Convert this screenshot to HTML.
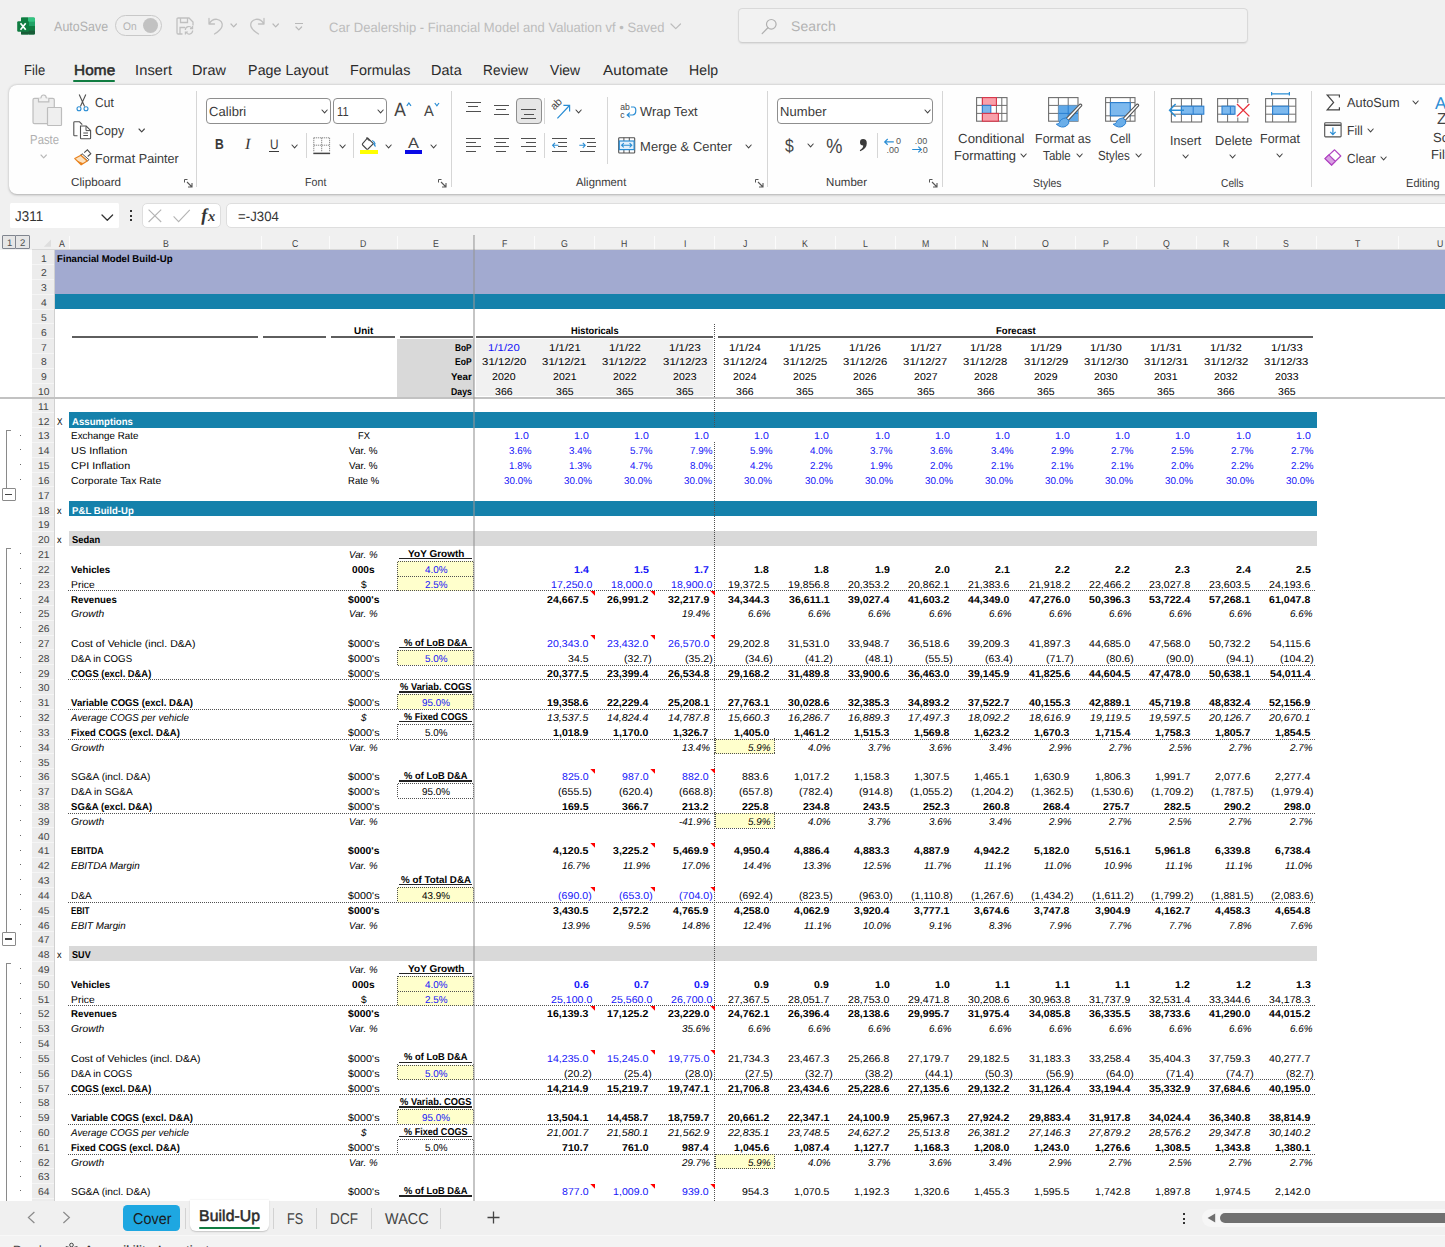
<!DOCTYPE html>
<html><head><meta charset="utf-8"><title>Excel</title>
<style>
html,body{margin:0;padding:0;}
body{width:1445px;height:1247px;overflow:hidden;background:#f0f0f0;font-family:"Liberation Sans", sans-serif;position:relative;}
#r{position:absolute;left:0;top:0;width:1445px;height:1247px;overflow:hidden;}
#r div,#r span,#r svg{position:absolute;}
#r span{white-space:pre;transform-origin:0 0;color:#000;}
#r div{box-sizing:border-box;}
#r svg{overflow:visible;}
</style></head><body><div id="r">
<svg style="left:17.00px;top:17.00px" width="18" height="18" viewBox="0 0 18 18"><rect x="4" y="0.5" width="14" height="17" rx="1.6" fill="#1d9a5b"/>
<rect x="4" y="0.5" width="7" height="8.5" fill="#107c41"/><rect x="11" y="0.5" width="7" height="4.4" rx="1" fill="#33c481"/>
<rect x="11" y="4.7" width="7" height="4.3" fill="#21a366"/><rect x="4" y="9" width="7" height="8.5" fill="#185c37"/><rect x="11" y="9" width="7" height="4.2" fill="#107c41"/>
<rect x="11" y="13.2" width="7" height="4.3" rx="1" fill="#185c37"/>
<rect x="0.2" y="4.2" width="11.8" height="10.5" rx="1.2" fill="#107c41"/>
<path d="M3.5 6.2 L8.7 12.7 M8.7 6.2 L3.5 12.7" stroke="#fff" stroke-width="1.7"/></svg>
<div style="left:115px;top:15.4px;width:47px;height:21px;border:1.4px solid #c8c8c8;border-radius:10.5px;"></div>
<div style="left:143.2px;top:18.4px;width:15px;height:15px;border-radius:50%;background:#c2c2c2;"></div>
<svg style="left:175.50px;top:17.00px" width="19" height="19" viewBox="0 0 19 19"><path d="M1 2.2 Q1 1 2.2 1 H13 L17 5 V8.5 M1 2.2 V15.8 Q1 17 2.2 17 H6.5" fill="none" stroke="#c0c0c0" stroke-width="1.3"/>
<path d="M4.5 1 V5.5 H11.5 V1 M4 17 V10.5 H9" fill="none" stroke="#c0c0c0" stroke-width="1.3"/>
<path d="M9.3 13 A3.6 3.6 0 0 1 16 11.3 M16.6 9 V11.6 H14 M16.7 13.6 A3.6 3.6 0 0 1 10 15.3 M9.4 17.6 V15 H12" fill="none" stroke="#c0c0c0" stroke-width="1.2"/></svg>
<svg style="left:207.50px;top:17.00px" width="16" height="18" viewBox="0 0 16 18"><path d="M1 1.5 V7 H6.5 M1.3 6.8 C3 3.5 6 2 9 2.3 C13 2.8 15 6 14 9.5 C13.3 12 10.5 14.5 6.5 17" fill="none" stroke="#c0c0c0" stroke-width="1.3" stroke-linecap="round" stroke-linejoin="round"/></svg>
<svg style="left:230.00px;top:23.10px" width="7.4" height="4.8" viewBox="0 0 7.4 4.8"><path d="M1 1 L3.70 3.80 L6.40 1" fill="none" stroke="#b8b8b8" stroke-width="1.2" stroke-linecap="round" stroke-linejoin="round"/></svg>
<svg style="left:249.00px;top:17.00px" width="16" height="18" viewBox="0 0 16 18"><path d="M15 1.5 V7 H9.5 M14.7 6.8 C13 3.5 10 2 7 2.3 C3 2.8 1 6 2 9.5 C2.7 12 5.5 14.5 9.5 17" fill="none" stroke="#c0c0c0" stroke-width="1.3" stroke-linecap="round" stroke-linejoin="round"/></svg>
<svg style="left:272.10px;top:23.10px" width="7.4" height="4.8" viewBox="0 0 7.4 4.8"><path d="M1 1 L3.70 3.80 L6.40 1" fill="none" stroke="#b8b8b8" stroke-width="1.2" stroke-linecap="round" stroke-linejoin="round"/></svg>
<div style="left:294.50px;top:23.20px;width:8.00px;height:1.20px;background:#b8b8b8;"></div>
<svg style="left:294.70px;top:25.55px" width="7.6" height="4.9" viewBox="0 0 7.6 4.9"><path d="M1 1 L3.80 3.90 L6.60 1" fill="none" stroke="#b8b8b8" stroke-width="1.2" stroke-linecap="round" stroke-linejoin="round"/></svg>
<svg style="left:669.85px;top:23.30px" width="11.5" height="6.6" viewBox="0 0 11.5 6.6"><path d="M1 1 L5.75 5.60 L10.50 1" fill="none" stroke="#bcbcbc" stroke-width="1.2" stroke-linecap="round" stroke-linejoin="round"/></svg>
<div style="left:738px;top:8.3px;width:510px;height:35px;background:#f2f2f2;border:1px solid #d9d9d9;border-bottom-color:#cfcfcf;border-radius:4.5px;box-shadow:0 1px 1.5px rgba(0,0,0,0.08);"></div>
<svg style="left:761.00px;top:18.00px" width="17" height="17" viewBox="0 0 17 17"><circle cx="10.3" cy="6.3" r="4.8" fill="none" stroke="#b0b0b0" stroke-width="1.2"/><path d="M6.9 9.8 L1.2 15.6" stroke="#b0b0b0" stroke-width="1.3" stroke-linecap="round"/></svg>
<div style="left:73.3px;top:79.6px;width:41.5px;height:2.8px;border-radius:1.4px;background:#107c41;"></div>
<div style="left:8.6px;top:85.2px;width:1500px;height:108.4px;background:#fefefe;border-radius:8px;box-shadow:0 0.5px 2.5px rgba(0,0,0,0.28);"></div>
<svg style="left:32.00px;top:94.00px" width="31" height="33" viewBox="0 0 31 33"><rect x="1" y="4.3" width="21.3" height="25.4" rx="1.5" fill="#ececec" stroke="#bdbdbd" stroke-width="1.2"/>
<path d="M6.5 4.3 V7.8 H16.8 V4.3 M9 4.3 Q9 1 11.65 1 Q14.3 1 14.3 4.3" fill="#f3f3f3" stroke="#bdbdbd" stroke-width="1.2"/>
<rect x="15.5" y="13.5" width="14" height="18" rx="0.8" fill="#efefef" stroke="#bdbdbd" stroke-width="1.2"/></svg>
<svg style="left:40.30px;top:154.20px" width="7.4" height="4.8" viewBox="0 0 7.4 4.8"><path d="M1 1 L3.70 3.80 L6.40 1" fill="none" stroke="#b8b8b8" stroke-width="1.1" stroke-linecap="round" stroke-linejoin="round"/></svg>
<svg style="left:75.50px;top:93.50px" width="13" height="18" viewBox="0 0 13 18"><path d="M3.2 0.6 L8.6 12.6 M9.8 0.6 L4.4 12.6" stroke="#505050" stroke-width="1.1" fill="none"/>
<circle cx="3" cy="14.7" r="2" fill="none" stroke="#2a8dd4" stroke-width="1.1"/><circle cx="10" cy="14.7" r="2" fill="none" stroke="#2a8dd4" stroke-width="1.1"/></svg>
<svg style="left:72.50px;top:120.50px" width="19" height="19" viewBox="0 0 19 19"><path d="M4.5 14.8 H1.6 Q0.8 14.8 0.8 14 V1.6 Q0.8 0.8 1.6 0.8 H6.5 L9.3 3.6" fill="none" stroke="#505050" stroke-width="1.1"/>
<path d="M7.5 5 H13.2 L17.6 9.4 V17 Q17.6 17.8 16.8 17.8 H8.3 Q7.5 17.8 7.5 17 Z" fill="#fff" stroke="#505050" stroke-width="1.1"/>
<path d="M13 5.2 V9.6 H17.4 M10.3 12 H15 M10.3 14.5 H15" fill="none" stroke="#505050" stroke-width="1"/></svg>
<svg style="left:137.80px;top:127.60px" width="7.4" height="4.8" viewBox="0 0 7.4 4.8"><path d="M1 1 L3.70 3.80 L6.40 1" fill="none" stroke="#444" stroke-width="1.1" stroke-linecap="round" stroke-linejoin="round"/></svg>
<svg style="left:73.50px;top:149.00px" width="18" height="17" viewBox="0 0 18 17"><path d="M10.2 3.6 L13.4 0.8 L16.8 4.6 L13.7 7.5" fill="#fff" stroke="#505050" stroke-width="1.1"/>
<path d="M8 4.7 L14.8 10.6 L13.6 12 L6.8 6.1 Z" fill="#fff" stroke="#505050" stroke-width="1"/>
<path d="M6.9 6.2 L0.8 9.6 L7.2 15.8 L13.2 12 Z" fill="#fce2c0" stroke="#e8821e" stroke-width="1.2" stroke-linejoin="round"/>
<path d="M3.2 11.8 L7.5 13.4 L9.5 14.3 L7.2 15.8 Z" fill="#e8821e"/></svg>
<svg style="left:184.00px;top:179.00px" width="9" height="9" viewBox="0 0 9 9"><path d="M0.5 3.5 V0.5 H3.5" fill="none" stroke="#555" stroke-width="1"/><path d="M3 3 L8 8 M8 4 V8 H4" fill="none" stroke="#555" stroke-width="1.1"/></svg>
<div style="left:196.30px;top:90.80px;width:1.00px;height:96.40px;background:#d6d6d6;"></div>
<div style="left:206.2px;top:97.5px;width:124.60000000000002px;height:26.2px;background:#fff;border:1px solid #8e8e8e;border-radius:4px;"></div>
<svg style="left:320.80px;top:108.80px" width="7.2" height="4.8" viewBox="0 0 7.2 4.8"><path d="M1 1 L3.60 3.80 L6.20 1" fill="none" stroke="#444" stroke-width="1.1" stroke-linecap="round" stroke-linejoin="round"/></svg>
<div style="left:333.2px;top:97.5px;width:53.400000000000034px;height:26.2px;background:#fff;border:1px solid #8e8e8e;border-radius:4px;"></div>
<svg style="left:376.70px;top:108.80px" width="7.2" height="4.8" viewBox="0 0 7.2 4.8"><path d="M1 1 L3.60 3.80 L6.20 1" fill="none" stroke="#444" stroke-width="1.1" stroke-linecap="round" stroke-linejoin="round"/></svg>
<svg style="left:405.80px;top:102.00px" width="6" height="5" viewBox="0 0 6 5"><path d="M0.8 3.8 L2.9 1 L5 3.8" fill="none" stroke="#2a8dd4" stroke-width="1.2"/></svg>
<svg style="left:433.50px;top:102.20px" width="6" height="5" viewBox="0 0 6 5"><path d="M0.8 1 L2.9 3.8 L5 1" fill="none" stroke="#2a8dd4" stroke-width="1.2"/></svg>
<div style="left:269.40px;top:151.20px;width:9.60px;height:1.10px;background:#3a3a3a;"></div>
<svg style="left:291.30px;top:143.50px" width="7.2" height="4.8" viewBox="0 0 7.2 4.8"><path d="M1 1 L3.60 3.80 L6.20 1" fill="none" stroke="#444" stroke-width="1.1" stroke-linecap="round" stroke-linejoin="round"/></svg>
<div style="left:306.10px;top:132.70px;width:1.00px;height:25.70px;background:#d6d6d6;"></div>
<svg style="left:312.50px;top:136.50px" width="18" height="18" viewBox="0 0 18 18"><path d="M0.8 0.8 H16.6 M0.8 0.8 V15 M16.6 0.8 V15 M8.7 0.8 V15 M0.8 8.2 H16.6" fill="none" stroke="#6a6a6a" stroke-width="1" stroke-dasharray="1 1"/>
<path d="M0.3 16.4 H17.1" stroke="#444" stroke-width="1.5"/></svg>
<svg style="left:338.60px;top:143.50px" width="7.2" height="4.8" viewBox="0 0 7.2 4.8"><path d="M1 1 L3.60 3.80 L6.20 1" fill="none" stroke="#444" stroke-width="1.1" stroke-linecap="round" stroke-linejoin="round"/></svg>
<div style="left:352.80px;top:132.70px;width:1.00px;height:25.70px;background:#d6d6d6;"></div>
<svg style="left:361.00px;top:136.50px" width="17" height="13" viewBox="0 0 17 13"><path d="M6.6 0.8 L12.4 6.6 L7 12 Q6.3 12.6 5.6 12 L1.6 8 Q1 7.3 1.6 6.6 Z" fill="#fff" stroke="#444" stroke-width="1.1" stroke-linejoin="round"/>
<path d="M5.3 0.6 L8.6 3.8" stroke="#444" stroke-width="1.1"/>
<path d="M12.8 5.3 Q15 7.6 14.6 10.3 Q13 9 12.3 6.9 Z" fill="#2a8dd4"/><path d="M11.2 3.6 Q13.4 4.4 14.2 7" fill="none" stroke="#2a8dd4" stroke-width="1.1"/></svg>
<div style="left:360.20px;top:150.00px;width:17.80px;height:4.30px;background:#ffff00;"></div>
<svg style="left:385.40px;top:143.50px" width="7.2" height="4.8" viewBox="0 0 7.2 4.8"><path d="M1 1 L3.60 3.80 L6.20 1" fill="none" stroke="#444" stroke-width="1.1" stroke-linecap="round" stroke-linejoin="round"/></svg>
<div style="left:404.60px;top:150.00px;width:17.50px;height:4.30px;background:#0a0ae6;"></div>
<svg style="left:429.80px;top:143.50px" width="7.2" height="4.8" viewBox="0 0 7.2 4.8"><path d="M1 1 L3.60 3.80 L6.20 1" fill="none" stroke="#444" stroke-width="1.1" stroke-linecap="round" stroke-linejoin="round"/></svg>
<svg style="left:438.30px;top:178.80px" width="9" height="9" viewBox="0 0 9 9"><path d="M0.5 3.5 V0.5 H3.5" fill="none" stroke="#555" stroke-width="1"/><path d="M3 3 L8 8 M8 4 V8 H4" fill="none" stroke="#555" stroke-width="1.1"/></svg>
<div style="left:451.10px;top:90.80px;width:1.00px;height:96.40px;background:#d6d6d6;"></div>
<div style="left:466.00px;top:102.00px;width:15.00px;height:1.00px;background:#505050;"></div>
<div style="left:468.00px;top:106.00px;width:10.00px;height:1.00px;background:#505050;"></div>
<div style="left:466.00px;top:111.00px;width:15.00px;height:1.00px;background:#505050;"></div>
<div style="left:494.00px;top:105.00px;width:15.00px;height:1.00px;background:#505050;"></div>
<div style="left:496.00px;top:109.00px;width:10.00px;height:1.00px;background:#505050;"></div>
<div style="left:494.00px;top:114.00px;width:15.00px;height:1.00px;background:#505050;"></div>
<div style="left:516.4px;top:97.6px;width:25.6px;height:26.2px;background:#e6e6e6;border:1px solid #8e8e8e;border-radius:4px;"></div>
<div style="left:521.00px;top:109.00px;width:15.00px;height:1.00px;background:#505050;"></div>
<div style="left:524.00px;top:114.00px;width:10.00px;height:1.00px;background:#505050;"></div>
<div style="left:521.00px;top:118.00px;width:15.00px;height:1.00px;background:#505050;"></div>
<div style="left:544.30px;top:97.80px;width:1.00px;height:25.90px;background:#d6d6d6;"></div>
<svg style="left:550.50px;top:100.50px" width="20" height="19" viewBox="0 0 20 19"><text x="0" y="0" transform="translate(3.4,9.6) rotate(-45)" font-family="Liberation Sans" font-size="10.6" fill="#444">ab</text>
<path d="M6.4 17.4 L18 5 M12.4 4.4 H18.6 V10.6" fill="none" stroke="#2a8dd4" stroke-width="1.2"/></svg>
<svg style="left:574.80px;top:108.80px" width="7.2" height="4.8" viewBox="0 0 7.2 4.8"><path d="M1 1 L3.60 3.80 L6.20 1" fill="none" stroke="#444" stroke-width="1.1" stroke-linecap="round" stroke-linejoin="round"/></svg>
<div style="left:466.00px;top:138.00px;width:15.00px;height:1.00px;background:#505050;"></div>
<div style="left:466.00px;top:142.00px;width:10.00px;height:1.00px;background:#505050;"></div>
<div style="left:466.00px;top:146.00px;width:15.00px;height:1.00px;background:#505050;"></div>
<div style="left:466.00px;top:151.00px;width:10.00px;height:1.00px;background:#505050;"></div>
<div style="left:494.00px;top:138.00px;width:15.00px;height:1.00px;background:#505050;"></div>
<div style="left:496.00px;top:142.00px;width:10.00px;height:1.00px;background:#505050;"></div>
<div style="left:494.00px;top:146.00px;width:15.00px;height:1.00px;background:#505050;"></div>
<div style="left:496.00px;top:151.00px;width:10.00px;height:1.00px;background:#505050;"></div>
<div style="left:521.00px;top:138.00px;width:15.00px;height:1.00px;background:#505050;"></div>
<div style="left:526.00px;top:142.00px;width:10.00px;height:1.00px;background:#505050;"></div>
<div style="left:521.00px;top:146.00px;width:15.00px;height:1.00px;background:#505050;"></div>
<div style="left:526.00px;top:151.00px;width:10.00px;height:1.00px;background:#505050;"></div>
<div style="left:544.30px;top:132.60px;width:1.00px;height:25.60px;background:#d6d6d6;"></div>
<div style="left:552.00px;top:138.00px;width:15.00px;height:1.00px;background:#505050;"></div>
<div style="left:552.00px;top:151.00px;width:15.00px;height:1.00px;background:#505050;"></div>
<div style="left:558.00px;top:142.00px;width:9.00px;height:1.00px;background:#505050;"></div>
<div style="left:558.00px;top:146.00px;width:9.00px;height:1.00px;background:#505050;"></div>
<svg style="left:551.50px;top:141.50px" width="7" height="7" viewBox="0 0 7 7"><path d="M6.5 3.3 H0.8 M3 0.8 L0.6 3.3 L3 5.8" fill="none" stroke="#2a8dd4" stroke-width="1.1"/></svg>
<div style="left:580.00px;top:138.00px;width:15.00px;height:1.00px;background:#505050;"></div>
<div style="left:580.00px;top:151.00px;width:15.00px;height:1.00px;background:#505050;"></div>
<div style="left:587.00px;top:142.00px;width:9.00px;height:1.00px;background:#505050;"></div>
<div style="left:587.00px;top:146.00px;width:9.00px;height:1.00px;background:#505050;"></div>
<svg style="left:579.30px;top:141.50px" width="7" height="7" viewBox="0 0 7 7"><path d="M0.3 3.3 H6 M3.8 0.8 L6.2 3.3 L3.8 5.8" fill="none" stroke="#2a8dd4" stroke-width="1.1"/></svg>
<div style="left:607.20px;top:97.20px;width:1.00px;height:67.10px;background:#d6d6d6;"></div>
<svg style="left:620.00px;top:103.00px" width="17" height="17" viewBox="0 0 17 17"><text x="0.3" y="7" font-family="Liberation Sans" font-size="8.6" fill="#444">ab</text><text x="0.3" y="15" font-family="Liberation Sans" font-size="8.6" fill="#444">c</text>
<path d="M11 4 H13.6 Q15.8 4 15.8 7.6 Q15.8 12 12.4 12 H7.6 M9.8 9.6 L7.2 12 L9.8 14.4" fill="none" stroke="#2a8dd4" stroke-width="1.2"/></svg>
<svg style="left:618.00px;top:136.80px" width="17.5" height="16.8" viewBox="0 0 17.5 16.8"><rect x="0.7" y="0.7" width="16" height="15.3" rx="0.8" fill="#fff" stroke="#505050" stroke-width="1.1"/>
<path d="M5.9 0.7 V4 M11.3 0.7 V4 M5.9 12.6 V16 M11.3 12.6 V16" stroke="#505050" stroke-width="1"/>
<rect x="1.3" y="4" width="14.8" height="8.6" fill="#e3f0fb" stroke="#2a8dd4" stroke-width="1.2"/>
<path d="M3.8 8.3 H13.6 M5.8 6.2 L3.6 8.3 L5.8 10.4 M11.6 6.2 L13.8 8.3 L11.6 10.4" fill="none" stroke="#2a8dd4" stroke-width="1.1"/></svg>
<svg style="left:745.40px;top:143.60px" width="7.2" height="4.8" viewBox="0 0 7.2 4.8"><path d="M1 1 L3.60 3.80 L6.20 1" fill="none" stroke="#444" stroke-width="1.1" stroke-linecap="round" stroke-linejoin="round"/></svg>
<svg style="left:755.10px;top:179.10px" width="9" height="9" viewBox="0 0 9 9"><path d="M0.5 3.5 V0.5 H3.5" fill="none" stroke="#555" stroke-width="1"/><path d="M3 3 L8 8 M8 4 V8 H4" fill="none" stroke="#555" stroke-width="1.1"/></svg>
<div style="left:767.00px;top:90.80px;width:1.00px;height:96.40px;background:#d6d6d6;"></div>
<div style="left:777.1px;top:97.5px;width:156.39999999999998px;height:26.2px;background:#fff;border:1px solid #8e8e8e;border-radius:4px;"></div>
<svg style="left:923.60px;top:108.80px" width="7.2" height="4.8" viewBox="0 0 7.2 4.8"><path d="M1 1 L3.60 3.80 L6.20 1" fill="none" stroke="#444" stroke-width="1.1" stroke-linecap="round" stroke-linejoin="round"/></svg>
<svg style="left:806.80px;top:143.20px" width="7.2" height="4.8" viewBox="0 0 7.2 4.8"><path d="M1 1 L3.60 3.80 L6.20 1" fill="none" stroke="#444" stroke-width="1.1" stroke-linecap="round" stroke-linejoin="round"/></svg>
<svg style="left:857.50px;top:138.00px" width="10" height="15" viewBox="0 0 10 15"><path d="M5 1 Q8.8 1 8.8 5.2 Q8.8 10.5 2.2 13.2 L1.8 12.2 Q5.4 10.2 5.2 7.6 Q2 7.6 2 4.3 Q2 1 5 1 Z" fill="#3a3a3a"/></svg>
<div style="left:877.10px;top:132.60px;width:1.00px;height:25.80px;background:#d6d6d6;"></div>
<svg style="left:884.00px;top:136.00px" width="18" height="18" viewBox="0 0 18 18"><path d="M9.8 5.9 H0.9 M3.7 3 L0.7 5.9 L3.7 8.8" fill="none" stroke="#2a8dd4" stroke-width="1.2"/>
<text x="12" y="7.9" font-family="Liberation Sans" font-size="9" fill="#555">0</text><text x="2.4" y="17.3" font-family="Liberation Sans" font-size="9" fill="#555">.00</text></svg>
<svg style="left:912.00px;top:136.00px" width="18" height="18" viewBox="0 0 18 18"><text x="2.8" y="7.9" font-family="Liberation Sans" font-size="9" fill="#555">.00</text>
<path d="M0.2 13.5 H9.1 M6.3 10.6 L9.3 13.5 L6.3 16.4" fill="none" stroke="#2a8dd4" stroke-width="1.2"/><text x="8.2" y="17.3" font-family="Liberation Sans" font-size="9" fill="#555">.0</text></svg>
<svg style="left:929.40px;top:179.10px" width="9" height="9" viewBox="0 0 9 9"><path d="M0.5 3.5 V0.5 H3.5" fill="none" stroke="#555" stroke-width="1"/><path d="M3 3 L8 8 M8 4 V8 H4" fill="none" stroke="#555" stroke-width="1.1"/></svg>
<div style="left:942.20px;top:90.80px;width:1.00px;height:96.40px;background:#d6d6d6;"></div>
<svg style="left:975.50px;top:97.20px" width="32" height="25" viewBox="0 0 32 25"><rect x="0.6" y="0.6" width="30.4" height="23.6" fill="#fff" stroke="#6e6e6e" stroke-width="1.1"/>
<path d="M6.4 0.6 V24.2 M20.4 0.6 V24.2 M25.8 0.6 V24.2 M0.6 8.4 H31 M0.6 16.4 H31" stroke="#6e6e6e" stroke-width="1"/>
<rect x="6.4" y="0.6" width="14" height="7.8" fill="#f8a0aa" stroke="#d9364a" stroke-width="1.1"/>
<rect x="6.4" y="8.4" width="8.4" height="8" fill="#7db5ea" stroke="#2a7fd0" stroke-width="1.1"/>
<rect x="6.4" y="16.4" width="16" height="7.8" fill="#f8a0aa" stroke="#d9364a" stroke-width="1.1"/></svg>
<svg style="left:1020.40px;top:152.80px" width="7.2" height="4.8" viewBox="0 0 7.2 4.8"><path d="M1 1 L3.60 3.80 L6.20 1" fill="none" stroke="#444" stroke-width="1.1" stroke-linecap="round" stroke-linejoin="round"/></svg>
<svg style="left:1048.20px;top:97.20px" width="34" height="30" viewBox="0 0 34 30"><rect x="0.6" y="0.6" width="29.4" height="23.6" fill="#fff" stroke="#6e6e6e" stroke-width="1.1"/>
<path d="M10.4 0.6 V24.2 M20.2 0.6 V24.2 M0.6 8.4 H30 M0.6 16.4 H30" stroke="#6e6e6e" stroke-width="1"/>
<rect x="10.4" y="8.4" width="19.6" height="15.8" fill="#5fa8e8"/><path d="M20.2 8.4 V24.2 M10.4 16.4 H30" stroke="#2a7fd0" stroke-width="1"/><g transform="translate(32.6,8.2)"><path d="M-14.4 13.07 L-0.9 -0.9 Q0.3 -1.5 1.05 -0.4 Q1.5 0.5 0.73 1 L-12.2 15.13 Z" fill="#fff" stroke="#555" stroke-width="1.1" stroke-linejoin="round"/>
<path d="M-14.75 12.73 Q-20.5 13.5 -21.3 17.6 Q-22 18.9 -24.3 19 Q-19 23.6 -14.3 20.8 Q-10.8 18.6 -11.85 15.47 Z" fill="#6aaee9" stroke="#2a7fd0" stroke-width="1"/></g></svg>
<svg style="left:1075.80px;top:152.80px" width="7.2" height="4.8" viewBox="0 0 7.2 4.8"><path d="M1 1 L3.60 3.80 L6.20 1" fill="none" stroke="#444" stroke-width="1.1" stroke-linecap="round" stroke-linejoin="round"/></svg>
<svg style="left:1105.00px;top:97.20px" width="34" height="30" viewBox="0 0 34 30"><rect x="0.6" y="0.6" width="29.4" height="23.6" fill="#fff" stroke="#6e6e6e" stroke-width="1.1"/>
<path d="M5.4 0.6 V24.2 M25.2 0.6 V24.2 M0.6 5.6 H30 M0.6 18.8 H30" stroke="#6e6e6e" stroke-width="1"/>
<rect x="5.4" y="5.6" width="19.8" height="13.2" fill="#7db9ee" stroke="#2a7fd0" stroke-width="1.1"/><g transform="translate(32.5,8.2)"><path d="M-14.4 13.07 L-0.9 -0.9 Q0.3 -1.5 1.05 -0.4 Q1.5 0.5 0.73 1 L-12.2 15.13 Z" fill="#fff" stroke="#555" stroke-width="1.1" stroke-linejoin="round"/>
<path d="M-14.75 12.73 Q-20.5 13.5 -21.3 17.6 Q-22 18.9 -24.3 19 Q-19 23.6 -14.3 20.8 Q-10.8 18.6 -11.85 15.47 Z" fill="#6aaee9" stroke="#2a7fd0" stroke-width="1"/></g></svg>
<svg style="left:1134.80px;top:152.80px" width="7.2" height="4.8" viewBox="0 0 7.2 4.8"><path d="M1 1 L3.60 3.80 L6.20 1" fill="none" stroke="#444" stroke-width="1.1" stroke-linecap="round" stroke-linejoin="round"/></svg>
<div style="left:1153.80px;top:90.80px;width:1.00px;height:96.40px;background:#d6d6d6;"></div>
<svg style="left:1168.50px;top:97.60px" width="36" height="25" viewBox="0 0 36 25"><rect x="2.4" y="0.6" width="30.2" height="23.4" fill="#fff" stroke="#6e6e6e" stroke-width="1.1"/>
<path d="M12.4 0.6 V24 M22.6 0.6 V24 M2.4 8.2 H32.6 M2.4 16.2 H32.6" stroke="#6e6e6e" stroke-width="1"/>
<rect x="12.4" y="8.2" width="22.4" height="8" fill="#7db9ee" stroke="#2a7fd0" stroke-width="1.1"/><path d="M24.2 8.2 V16.2" stroke="#2a7fd0" stroke-width="1"/>
<path d="M0.8 12.2 H15 M6.6 6 L0.6 12.2 L6.6 18.4" fill="none" stroke="#2a8dd4" stroke-width="1.5"/><path d="M2.6 12.2 H14.6" stroke="#fff" stroke-width="0"/></svg>
<svg style="left:1181.90px;top:154.40px" width="7.2" height="4.8" viewBox="0 0 7.2 4.8"><path d="M1 1 L3.60 3.80 L6.20 1" fill="none" stroke="#444" stroke-width="1.1" stroke-linecap="round" stroke-linejoin="round"/></svg>
<svg style="left:1216.80px;top:97.60px" width="34" height="25" viewBox="0 0 34 25"><rect x="0.6" y="0.6" width="30.2" height="23.4" fill="#fff" stroke="#6e6e6e" stroke-width="1.1"/>
<path d="M10.6 0.6 V24 M20.8 0.6 V24 M0.6 8.2 H30.8 M0.6 16.2 H30.8" stroke="#6e6e6e" stroke-width="1"/>
<rect x="17" y="5" width="16" height="14.5" fill="#fff"/>
<rect x="5" y="8.2" width="13" height="8" fill="#7db9ee" stroke="#2a7fd0" stroke-width="1.1"/><path d="M13.4 8.2 V16.2" stroke="#2a7fd0" stroke-width="1"/>
<path d="M20 6 L32.4 18.4 M32.4 6 L20 18.4" stroke="#e8323c" stroke-width="1.3"/></svg>
<svg style="left:1229.00px;top:154.40px" width="7.2" height="4.8" viewBox="0 0 7.2 4.8"><path d="M1 1 L3.60 3.80 L6.20 1" fill="none" stroke="#444" stroke-width="1.1" stroke-linecap="round" stroke-linejoin="round"/></svg>
<svg style="left:1264.60px;top:91.60px" width="32" height="31" viewBox="0 0 32 31"><path d="M6.6 1.8 H24.4 M6.6 0 V3.6 M24.4 0 V3.6" stroke="#2a8dd4" stroke-width="1.2"/>
<rect x="0.6" y="6.6" width="30.2" height="23.4" fill="#fff" stroke="#6e6e6e" stroke-width="1.1"/>
<path d="M7.6 6.6 V30 M23.6 6.6 V30 M0.6 14.2 H30.8 M0.6 22.2 H30.8" stroke="#6e6e6e" stroke-width="1"/>
<rect x="7.6" y="14.2" width="16" height="8" fill="#7db9ee" stroke="#2a7fd0" stroke-width="1.1"/></svg>
<svg style="left:1275.90px;top:152.90px" width="7.2" height="4.8" viewBox="0 0 7.2 4.8"><path d="M1 1 L3.60 3.80 L6.20 1" fill="none" stroke="#444" stroke-width="1.1" stroke-linecap="round" stroke-linejoin="round"/></svg>
<div style="left:1310.60px;top:90.80px;width:1.00px;height:96.40px;background:#d6d6d6;"></div>
<svg style="left:1326.40px;top:94.00px" width="15" height="17" viewBox="0 0 15 17"><path d="M13.4 3.4 V1 H1.2 L7.6 8.4 L1.2 15.8 H13.4 V13.2" fill="none" stroke="#444" stroke-width="1.2" stroke-linejoin="miter"/></svg>
<svg style="left:1412.40px;top:100.20px" width="7.2" height="4.8" viewBox="0 0 7.2 4.8"><path d="M1 1 L3.60 3.80 L6.20 1" fill="none" stroke="#444" stroke-width="1.1" stroke-linecap="round" stroke-linejoin="round"/></svg>
<svg style="left:1324.40px;top:122.20px" width="18" height="16" viewBox="0 0 18 16"><rect x="0.7" y="0.7" width="16.4" height="14.2" rx="0.8" fill="#fff" stroke="#505050" stroke-width="1.1"/><path d="M0.7 3.2 H17.1" stroke="#505050" stroke-width="1.6"/>
<path d="M8.9 5.4 V12.4 M6.2 9.8 L8.9 12.6 L11.6 9.8" fill="none" stroke="#2a8dd4" stroke-width="1.2"/></svg>
<svg style="left:1367.10px;top:127.60px" width="7.2" height="4.8" viewBox="0 0 7.2 4.8"><path d="M1 1 L3.60 3.80 L6.20 1" fill="none" stroke="#444" stroke-width="1.1" stroke-linecap="round" stroke-linejoin="round"/></svg>
<svg style="left:1324.00px;top:149.40px" width="18" height="17" viewBox="0 0 18 17"><path d="M10.6 0.8 L16.8 7 L7.6 16 L1 9.6 Z" fill="#fff" stroke="#b146c2" stroke-width="1.2" stroke-linejoin="round"/>
<path d="M1 9.6 L4.8 5.9 L11.3 12.3 L7.6 16 Z" fill="#d9a0e3" stroke="#b146c2" stroke-width="1.2" stroke-linejoin="round"/></svg>
<svg style="left:1380.20px;top:155.60px" width="7.2" height="4.8" viewBox="0 0 7.2 4.8"><path d="M1 1 L3.60 3.80 L6.20 1" fill="none" stroke="#444" stroke-width="1.1" stroke-linecap="round" stroke-linejoin="round"/></svg>
<div style="left:10px;top:203.3px;width:108.8px;height:24.3px;background:#fff;border-radius:1.5px;"></div>
<svg style="left:100.70px;top:213.60px" width="12.6" height="7.2" viewBox="0 0 12.6 7.2"><path d="M1 1 L6.30 6.20 L11.60 1" fill="none" stroke="#333" stroke-width="1.3" stroke-linecap="round" stroke-linejoin="round"/></svg>
<div style="left:129.50px;top:209.80px;width:2.10px;height:2.10px;background:#333;"></div>
<div style="left:129.50px;top:214.60px;width:2.10px;height:2.10px;background:#333;"></div>
<div style="left:129.50px;top:219.40px;width:2.10px;height:2.10px;background:#333;"></div>
<div style="left:141.8px;top:202.5px;width:79.3px;height:25.9px;background:#fff;border:1px solid #dedede;border-radius:5px;"></div>
<svg style="left:148.00px;top:208.60px" width="14" height="14" viewBox="0 0 14 14"><path d="M0.6 0.6 L13.2 13 M13.2 0.6 L0.6 13" stroke="#b4b4b4" stroke-width="1.1"/></svg>
<svg style="left:172.50px;top:208.60px" width="18" height="14" viewBox="0 0 18 14"><path d="M0.6 7.4 L5.6 12.6 L16.8 0.8" fill="none" stroke="#b4b4b4" stroke-width="1.1"/></svg>
<div style="left:226.3px;top:202.5px;width:1300px;height:25.9px;background:#fff;border:1px solid #dedede;border-radius:5px;"></div>
<div style="left:0.00px;top:250.00px;width:1445.00px;height:950.80px;background:#fff;"></div>
<div style="left:0.00px;top:235.00px;width:1445.00px;height:15.00px;background:#f0f0f0;"></div>
<div style="left:32.40px;top:250.00px;width:22.10px;height:950.80px;background:#ececec;"></div>
<div style="left:54.30px;top:250.00px;width:0.80px;height:950.80px;background:#d0d0d0;"></div>
<div style="left:32.40px;top:264.00px;width:21.90px;height:1.00px;background:#f5f5f5;"></div>
<div style="left:32.40px;top:279.00px;width:21.90px;height:1.00px;background:#f5f5f5;"></div>
<div style="left:32.40px;top:294.00px;width:21.90px;height:1.00px;background:#f5f5f5;"></div>
<div style="left:32.40px;top:309.00px;width:21.90px;height:1.00px;background:#f5f5f5;"></div>
<div style="left:32.40px;top:323.00px;width:21.90px;height:1.00px;background:#f5f5f5;"></div>
<div style="left:32.40px;top:338.00px;width:21.90px;height:1.00px;background:#f5f5f5;"></div>
<div style="left:32.40px;top:353.00px;width:21.90px;height:1.00px;background:#f5f5f5;"></div>
<div style="left:32.40px;top:368.00px;width:21.90px;height:1.00px;background:#f5f5f5;"></div>
<div style="left:32.40px;top:383.00px;width:21.90px;height:1.00px;background:#f5f5f5;"></div>
<div style="left:32.40px;top:398.00px;width:21.90px;height:1.00px;background:#f5f5f5;"></div>
<div style="left:32.40px;top:412.00px;width:21.90px;height:1.00px;background:#f5f5f5;"></div>
<div style="left:32.40px;top:427.00px;width:21.90px;height:1.00px;background:#f5f5f5;"></div>
<div style="left:32.40px;top:442.00px;width:21.90px;height:1.00px;background:#f5f5f5;"></div>
<div style="left:32.40px;top:457.00px;width:21.90px;height:1.00px;background:#f5f5f5;"></div>
<div style="left:32.40px;top:472.00px;width:21.90px;height:1.00px;background:#f5f5f5;"></div>
<div style="left:32.40px;top:486.00px;width:21.90px;height:1.00px;background:#f5f5f5;"></div>
<div style="left:32.40px;top:501.00px;width:21.90px;height:1.00px;background:#f5f5f5;"></div>
<div style="left:32.40px;top:516.00px;width:21.90px;height:1.00px;background:#f5f5f5;"></div>
<div style="left:32.40px;top:531.00px;width:21.90px;height:1.00px;background:#f5f5f5;"></div>
<div style="left:32.40px;top:546.00px;width:21.90px;height:1.00px;background:#f5f5f5;"></div>
<div style="left:32.40px;top:561.00px;width:21.90px;height:1.00px;background:#f5f5f5;"></div>
<div style="left:32.40px;top:575.00px;width:21.90px;height:1.00px;background:#f5f5f5;"></div>
<div style="left:32.40px;top:590.00px;width:21.90px;height:1.00px;background:#f5f5f5;"></div>
<div style="left:32.40px;top:605.00px;width:21.90px;height:1.00px;background:#f5f5f5;"></div>
<div style="left:32.40px;top:620.00px;width:21.90px;height:1.00px;background:#f5f5f5;"></div>
<div style="left:32.40px;top:635.00px;width:21.90px;height:1.00px;background:#f5f5f5;"></div>
<div style="left:32.40px;top:649.00px;width:21.90px;height:1.00px;background:#f5f5f5;"></div>
<div style="left:32.40px;top:664.00px;width:21.90px;height:1.00px;background:#f5f5f5;"></div>
<div style="left:32.40px;top:679.00px;width:21.90px;height:1.00px;background:#f5f5f5;"></div>
<div style="left:32.40px;top:694.00px;width:21.90px;height:1.00px;background:#f5f5f5;"></div>
<div style="left:32.40px;top:709.00px;width:21.90px;height:1.00px;background:#f5f5f5;"></div>
<div style="left:32.40px;top:724.00px;width:21.90px;height:1.00px;background:#f5f5f5;"></div>
<div style="left:32.40px;top:738.00px;width:21.90px;height:1.00px;background:#f5f5f5;"></div>
<div style="left:32.40px;top:753.00px;width:21.90px;height:1.00px;background:#f5f5f5;"></div>
<div style="left:32.40px;top:768.00px;width:21.90px;height:1.00px;background:#f5f5f5;"></div>
<div style="left:32.40px;top:783.00px;width:21.90px;height:1.00px;background:#f5f5f5;"></div>
<div style="left:32.40px;top:798.00px;width:21.90px;height:1.00px;background:#f5f5f5;"></div>
<div style="left:32.40px;top:812.00px;width:21.90px;height:1.00px;background:#f5f5f5;"></div>
<div style="left:32.40px;top:827.00px;width:21.90px;height:1.00px;background:#f5f5f5;"></div>
<div style="left:32.40px;top:842.00px;width:21.90px;height:1.00px;background:#f5f5f5;"></div>
<div style="left:32.40px;top:857.00px;width:21.90px;height:1.00px;background:#f5f5f5;"></div>
<div style="left:32.40px;top:872.00px;width:21.90px;height:1.00px;background:#f5f5f5;"></div>
<div style="left:32.40px;top:887.00px;width:21.90px;height:1.00px;background:#f5f5f5;"></div>
<div style="left:32.40px;top:901.00px;width:21.90px;height:1.00px;background:#f5f5f5;"></div>
<div style="left:32.40px;top:916.00px;width:21.90px;height:1.00px;background:#f5f5f5;"></div>
<div style="left:32.40px;top:931.00px;width:21.90px;height:1.00px;background:#f5f5f5;"></div>
<div style="left:32.40px;top:946.00px;width:21.90px;height:1.00px;background:#f5f5f5;"></div>
<div style="left:32.40px;top:961.00px;width:21.90px;height:1.00px;background:#f5f5f5;"></div>
<div style="left:32.40px;top:975.00px;width:21.90px;height:1.00px;background:#f5f5f5;"></div>
<div style="left:32.40px;top:990.00px;width:21.90px;height:1.00px;background:#f5f5f5;"></div>
<div style="left:32.40px;top:1005.00px;width:21.90px;height:1.00px;background:#f5f5f5;"></div>
<div style="left:32.40px;top:1020.00px;width:21.90px;height:1.00px;background:#f5f5f5;"></div>
<div style="left:32.40px;top:1035.00px;width:21.90px;height:1.00px;background:#f5f5f5;"></div>
<div style="left:32.40px;top:1050.00px;width:21.90px;height:1.00px;background:#f5f5f5;"></div>
<div style="left:32.40px;top:1064.00px;width:21.90px;height:1.00px;background:#f5f5f5;"></div>
<div style="left:32.40px;top:1079.00px;width:21.90px;height:1.00px;background:#f5f5f5;"></div>
<div style="left:32.40px;top:1094.00px;width:21.90px;height:1.00px;background:#f5f5f5;"></div>
<div style="left:32.40px;top:1109.00px;width:21.90px;height:1.00px;background:#f5f5f5;"></div>
<div style="left:32.40px;top:1124.00px;width:21.90px;height:1.00px;background:#f5f5f5;"></div>
<div style="left:32.40px;top:1138.00px;width:21.90px;height:1.00px;background:#f5f5f5;"></div>
<div style="left:32.40px;top:1153.00px;width:21.90px;height:1.00px;background:#f5f5f5;"></div>
<div style="left:32.40px;top:1168.00px;width:21.90px;height:1.00px;background:#f5f5f5;"></div>
<div style="left:32.40px;top:1183.00px;width:21.90px;height:1.00px;background:#f5f5f5;"></div>
<div style="left:32.40px;top:1198.00px;width:21.90px;height:1.00px;background:#f5f5f5;"></div>
<div style="left:69.00px;top:236.00px;width:1.00px;height:14.00px;background:#fbfbfb;"></div>
<div style="left:261.10px;top:236.00px;width:1.00px;height:14.00px;background:#fbfbfb;"></div>
<div style="left:329.10px;top:236.00px;width:1.00px;height:14.00px;background:#fbfbfb;"></div>
<div style="left:396.90px;top:236.00px;width:1.00px;height:14.00px;background:#fbfbfb;"></div>
<div style="left:473.70px;top:236.00px;width:1.00px;height:14.00px;background:#fbfbfb;"></div>
<div style="left:533.86px;top:236.00px;width:1.00px;height:14.00px;background:#fbfbfb;"></div>
<div style="left:594.03px;top:236.00px;width:1.00px;height:14.00px;background:#fbfbfb;"></div>
<div style="left:654.19px;top:236.00px;width:1.00px;height:14.00px;background:#fbfbfb;"></div>
<div style="left:714.36px;top:236.00px;width:1.00px;height:14.00px;background:#fbfbfb;"></div>
<div style="left:774.52px;top:236.00px;width:1.00px;height:14.00px;background:#fbfbfb;"></div>
<div style="left:834.68px;top:236.00px;width:1.00px;height:14.00px;background:#fbfbfb;"></div>
<div style="left:894.85px;top:236.00px;width:1.00px;height:14.00px;background:#fbfbfb;"></div>
<div style="left:955.01px;top:236.00px;width:1.00px;height:14.00px;background:#fbfbfb;"></div>
<div style="left:1015.18px;top:236.00px;width:1.00px;height:14.00px;background:#fbfbfb;"></div>
<div style="left:1075.34px;top:236.00px;width:1.00px;height:14.00px;background:#fbfbfb;"></div>
<div style="left:1135.50px;top:236.00px;width:1.00px;height:14.00px;background:#fbfbfb;"></div>
<div style="left:1195.67px;top:236.00px;width:1.00px;height:14.00px;background:#fbfbfb;"></div>
<div style="left:1255.83px;top:236.00px;width:1.00px;height:14.00px;background:#fbfbfb;"></div>
<div style="left:1316.00px;top:236.00px;width:1.00px;height:14.00px;background:#fbfbfb;"></div>
<div style="left:1398.10px;top:236.00px;width:1.00px;height:14.00px;background:#fbfbfb;"></div>
<svg style="left:43.00px;top:239.00px" width="9" height="9" viewBox="0 0 9 9"><path d="M8 0.6 L8 7.8 L0.8 7.8 Z" fill="#dedede"/></svg>
<div style="left:32.40px;top:249.20px;width:1445.00px;height:0.80px;background:#d8d8d8;"></div>
<div style="left:54.80px;top:249.80px;width:1445.00px;height:44.46px;background:#a2aad0;"></div>
<div style="left:54.80px;top:294.26px;width:1445.00px;height:14.82px;background:#1581ab;"></div>
<div style="left:69.00px;top:412.32px;width:1247.50px;height:15.22px;background:#1581ab;"></div>
<div style="left:69.00px;top:501.24px;width:1247.50px;height:15.22px;background:#1581ab;"></div>
<div style="left:69.00px;top:531.08px;width:1247.50px;height:14.92px;background:#d9d9d9;"></div>
<div style="left:69.00px;top:946.04px;width:1247.50px;height:14.92px;background:#d9d9d9;"></div>
<div style="left:397.40px;top:338.72px;width:76.80px;height:58.33px;background:#d9d9d9;"></div>
<div style="left:476.20px;top:338.72px;width:236.86px;height:57.48px;background:#f1f1f1;"></div>
<div style="left:72.00px;top:336.12px;width:186.30px;height:1.90px;background:#5e5e5e;"></div>
<div style="left:263.30px;top:336.12px;width:63.10px;height:1.90px;background:#5e5e5e;"></div>
<div style="left:331.40px;top:336.12px;width:63.80px;height:1.90px;background:#5e5e5e;"></div>
<div style="left:399.50px;top:336.12px;width:73.10px;height:1.90px;background:#5e5e5e;"></div>
<div style="left:476.00px;top:336.12px;width:237.30px;height:1.90px;background:#5e5e5e;"></div>
<div style="left:717.60px;top:336.12px;width:595.60px;height:1.90px;background:#5e5e5e;"></div>
<div style="left:397.40px;top:561.02px;width:76.80px;height:14.82px;background:#ffffcc;"></div>
<div style="left:398px;top:561px;width:76px;height:1px;background:repeating-linear-gradient(90deg,#505050 0 1px,transparent 1px 2px);"></div>
<div style="left:398px;top:576px;width:76px;height:1px;background:repeating-linear-gradient(90deg,#505050 0 1px,transparent 1px 2px);"></div>
<div style="left:397px;top:562px;width:1px;height:14px;background:repeating-linear-gradient(180deg,#505050 0 1px,transparent 1px 2px);"></div>
<div style="left:473px;top:562px;width:1px;height:14px;background:repeating-linear-gradient(180deg,#505050 0 1px,transparent 1px 2px);"></div>
<div style="left:397.40px;top:575.84px;width:76.80px;height:14.82px;background:#ffffcc;"></div>
<div style="left:398px;top:576px;width:76px;height:1px;background:repeating-linear-gradient(90deg,#505050 0 1px,transparent 1px 2px);"></div>
<div style="left:398px;top:590px;width:76px;height:1px;background:repeating-linear-gradient(90deg,#505050 0 1px,transparent 1px 2px);"></div>
<div style="left:397px;top:576px;width:1px;height:15px;background:repeating-linear-gradient(180deg,#505050 0 1px,transparent 1px 2px);"></div>
<div style="left:473px;top:576px;width:1px;height:15px;background:repeating-linear-gradient(180deg,#505050 0 1px,transparent 1px 2px);"></div>
<div style="left:397.40px;top:649.94px;width:76.80px;height:14.82px;background:#ffffcc;"></div>
<div style="left:398px;top:650px;width:76px;height:1px;background:repeating-linear-gradient(90deg,#505050 0 1px,transparent 1px 2px);"></div>
<div style="left:398px;top:665px;width:76px;height:1px;background:repeating-linear-gradient(90deg,#505050 0 1px,transparent 1px 2px);"></div>
<div style="left:397px;top:650px;width:1px;height:15px;background:repeating-linear-gradient(180deg,#505050 0 1px,transparent 1px 2px);"></div>
<div style="left:473px;top:650px;width:1px;height:15px;background:repeating-linear-gradient(180deg,#505050 0 1px,transparent 1px 2px);"></div>
<div style="left:397.40px;top:694.40px;width:76.80px;height:14.82px;background:#ffffcc;"></div>
<div style="left:398px;top:694px;width:76px;height:1px;background:repeating-linear-gradient(90deg,#505050 0 1px,transparent 1px 2px);"></div>
<div style="left:398px;top:709px;width:76px;height:1px;background:repeating-linear-gradient(90deg,#505050 0 1px,transparent 1px 2px);"></div>
<div style="left:397px;top:694px;width:1px;height:15px;background:repeating-linear-gradient(180deg,#505050 0 1px,transparent 1px 2px);"></div>
<div style="left:473px;top:694px;width:1px;height:15px;background:repeating-linear-gradient(180deg,#505050 0 1px,transparent 1px 2px);"></div>
<div style="left:398px;top:724px;width:76px;height:1px;background:repeating-linear-gradient(90deg,#505050 0 1px,transparent 1px 2px);"></div>
<div style="left:398px;top:739px;width:76px;height:1px;background:repeating-linear-gradient(90deg,#505050 0 1px,transparent 1px 2px);"></div>
<div style="left:397px;top:724px;width:1px;height:15px;background:repeating-linear-gradient(180deg,#505050 0 1px,transparent 1px 2px);"></div>
<div style="left:473px;top:724px;width:1px;height:15px;background:repeating-linear-gradient(180deg,#505050 0 1px,transparent 1px 2px);"></div>
<div style="left:714.86px;top:738.86px;width:60.16px;height:14.82px;background:#ffffcc;"></div>
<div style="left:714px;top:739px;width:61px;height:1px;background:repeating-linear-gradient(90deg,#505050 0 1px,transparent 1px 2px);"></div>
<div style="left:714px;top:753px;width:61px;height:1px;background:repeating-linear-gradient(90deg,#505050 0 1px,transparent 1px 2px);"></div>
<div style="left:715px;top:738px;width:1px;height:16px;background:repeating-linear-gradient(180deg,#505050 0 1px,transparent 1px 2px);"></div>
<div style="left:774px;top:738px;width:1px;height:16px;background:repeating-linear-gradient(180deg,#505050 0 1px,transparent 1px 2px);"></div>
<div style="left:398px;top:783px;width:76px;height:1px;background:repeating-linear-gradient(90deg,#505050 0 1px,transparent 1px 2px);"></div>
<div style="left:398px;top:798px;width:76px;height:1px;background:repeating-linear-gradient(90deg,#505050 0 1px,transparent 1px 2px);"></div>
<div style="left:397px;top:784px;width:1px;height:14px;background:repeating-linear-gradient(180deg,#505050 0 1px,transparent 1px 2px);"></div>
<div style="left:473px;top:784px;width:1px;height:14px;background:repeating-linear-gradient(180deg,#505050 0 1px,transparent 1px 2px);"></div>
<div style="left:714.86px;top:812.96px;width:60.16px;height:14.82px;background:#ffffcc;"></div>
<div style="left:714px;top:813px;width:61px;height:1px;background:repeating-linear-gradient(90deg,#505050 0 1px,transparent 1px 2px);"></div>
<div style="left:714px;top:828px;width:61px;height:1px;background:repeating-linear-gradient(90deg,#505050 0 1px,transparent 1px 2px);"></div>
<div style="left:715px;top:812px;width:1px;height:16px;background:repeating-linear-gradient(180deg,#505050 0 1px,transparent 1px 2px);"></div>
<div style="left:774px;top:812px;width:1px;height:16px;background:repeating-linear-gradient(180deg,#505050 0 1px,transparent 1px 2px);"></div>
<div style="left:397.40px;top:887.06px;width:76.80px;height:14.82px;background:#ffffcc;"></div>
<div style="left:398px;top:887px;width:76px;height:1px;background:repeating-linear-gradient(90deg,#505050 0 1px,transparent 1px 2px);"></div>
<div style="left:398px;top:902px;width:76px;height:1px;background:repeating-linear-gradient(90deg,#505050 0 1px,transparent 1px 2px);"></div>
<div style="left:397px;top:888px;width:1px;height:14px;background:repeating-linear-gradient(180deg,#505050 0 1px,transparent 1px 2px);"></div>
<div style="left:473px;top:888px;width:1px;height:14px;background:repeating-linear-gradient(180deg,#505050 0 1px,transparent 1px 2px);"></div>
<div style="left:397.40px;top:975.98px;width:76.80px;height:14.82px;background:#ffffcc;"></div>
<div style="left:398px;top:976px;width:76px;height:1px;background:repeating-linear-gradient(90deg,#505050 0 1px,transparent 1px 2px);"></div>
<div style="left:398px;top:991px;width:76px;height:1px;background:repeating-linear-gradient(90deg,#505050 0 1px,transparent 1px 2px);"></div>
<div style="left:397px;top:976px;width:1px;height:15px;background:repeating-linear-gradient(180deg,#505050 0 1px,transparent 1px 2px);"></div>
<div style="left:473px;top:976px;width:1px;height:15px;background:repeating-linear-gradient(180deg,#505050 0 1px,transparent 1px 2px);"></div>
<div style="left:397.40px;top:990.80px;width:76.80px;height:14.82px;background:#ffffcc;"></div>
<div style="left:398px;top:991px;width:76px;height:1px;background:repeating-linear-gradient(90deg,#505050 0 1px,transparent 1px 2px);"></div>
<div style="left:398px;top:1005px;width:76px;height:1px;background:repeating-linear-gradient(90deg,#505050 0 1px,transparent 1px 2px);"></div>
<div style="left:397px;top:990px;width:1px;height:16px;background:repeating-linear-gradient(180deg,#505050 0 1px,transparent 1px 2px);"></div>
<div style="left:473px;top:990px;width:1px;height:16px;background:repeating-linear-gradient(180deg,#505050 0 1px,transparent 1px 2px);"></div>
<div style="left:397.40px;top:1064.90px;width:76.80px;height:14.82px;background:#ffffcc;"></div>
<div style="left:398px;top:1065px;width:76px;height:1px;background:repeating-linear-gradient(90deg,#505050 0 1px,transparent 1px 2px);"></div>
<div style="left:398px;top:1079px;width:76px;height:1px;background:repeating-linear-gradient(90deg,#505050 0 1px,transparent 1px 2px);"></div>
<div style="left:397px;top:1064px;width:1px;height:16px;background:repeating-linear-gradient(180deg,#505050 0 1px,transparent 1px 2px);"></div>
<div style="left:473px;top:1064px;width:1px;height:16px;background:repeating-linear-gradient(180deg,#505050 0 1px,transparent 1px 2px);"></div>
<div style="left:397.40px;top:1109.36px;width:76.80px;height:14.82px;background:#ffffcc;"></div>
<div style="left:398px;top:1109px;width:76px;height:1px;background:repeating-linear-gradient(90deg,#505050 0 1px,transparent 1px 2px);"></div>
<div style="left:398px;top:1124px;width:76px;height:1px;background:repeating-linear-gradient(90deg,#505050 0 1px,transparent 1px 2px);"></div>
<div style="left:397px;top:1110px;width:1px;height:14px;background:repeating-linear-gradient(180deg,#505050 0 1px,transparent 1px 2px);"></div>
<div style="left:473px;top:1110px;width:1px;height:14px;background:repeating-linear-gradient(180deg,#505050 0 1px,transparent 1px 2px);"></div>
<div style="left:398px;top:1139px;width:76px;height:1px;background:repeating-linear-gradient(90deg,#505050 0 1px,transparent 1px 2px);"></div>
<div style="left:398px;top:1154px;width:76px;height:1px;background:repeating-linear-gradient(90deg,#505050 0 1px,transparent 1px 2px);"></div>
<div style="left:397px;top:1140px;width:1px;height:14px;background:repeating-linear-gradient(180deg,#505050 0 1px,transparent 1px 2px);"></div>
<div style="left:473px;top:1140px;width:1px;height:14px;background:repeating-linear-gradient(180deg,#505050 0 1px,transparent 1px 2px);"></div>
<div style="left:714.86px;top:1153.82px;width:60.16px;height:14.82px;background:#ffffcc;"></div>
<div style="left:714px;top:1154px;width:61px;height:1px;background:repeating-linear-gradient(90deg,#505050 0 1px,transparent 1px 2px);"></div>
<div style="left:714px;top:1168px;width:61px;height:1px;background:repeating-linear-gradient(90deg,#505050 0 1px,transparent 1px 2px);"></div>
<div style="left:715px;top:1154px;width:1px;height:15px;background:repeating-linear-gradient(180deg,#505050 0 1px,transparent 1px 2px);"></div>
<div style="left:774px;top:1154px;width:1px;height:15px;background:repeating-linear-gradient(180deg,#505050 0 1px,transparent 1px 2px);"></div>
<div style="left:68px;top:590px;width:1248px;height:1px;background:repeating-linear-gradient(90deg,#505050 0 1px,transparent 1px 2px);"></div>
<div style="left:398px;top:665px;width:918px;height:1px;background:repeating-linear-gradient(90deg,#505050 0 1px,transparent 1px 2px);"></div>
<div style="left:68px;top:679px;width:1248px;height:1px;background:repeating-linear-gradient(90deg,#505050 0 1px,transparent 1px 2px);"></div>
<div style="left:68px;top:709px;width:1248px;height:1px;background:repeating-linear-gradient(90deg,#505050 0 1px,transparent 1px 2px);"></div>
<div style="left:68px;top:739px;width:1248px;height:1px;background:repeating-linear-gradient(90deg,#505050 0 1px,transparent 1px 2px);"></div>
<div style="left:68px;top:813px;width:1248px;height:1px;background:repeating-linear-gradient(90deg,#505050 0 1px,transparent 1px 2px);"></div>
<div style="left:68px;top:902px;width:1248px;height:1px;background:repeating-linear-gradient(90deg,#505050 0 1px,transparent 1px 2px);"></div>
<div style="left:68px;top:1005px;width:1248px;height:1px;background:repeating-linear-gradient(90deg,#505050 0 1px,transparent 1px 2px);"></div>
<div style="left:398px;top:1079px;width:918px;height:1px;background:repeating-linear-gradient(90deg,#505050 0 1px,transparent 1px 2px);"></div>
<div style="left:68px;top:1094px;width:1248px;height:1px;background:repeating-linear-gradient(90deg,#505050 0 1px,transparent 1px 2px);"></div>
<div style="left:68px;top:1124px;width:1248px;height:1px;background:repeating-linear-gradient(90deg,#505050 0 1px,transparent 1px 2px);"></div>
<div style="left:68px;top:1154px;width:1248px;height:1px;background:repeating-linear-gradient(90deg,#505050 0 1px,transparent 1px 2px);"></div>
<div style="left:714px;top:324px;width:1px;height:877px;background:repeating-linear-gradient(180deg,#505050 0 1px,transparent 1px 2px);"></div>
<div style="left:713.86px;top:427.64px;width:3.00px;height:14.82px;background:#fff;"></div>
<div style="left:399.30px;top:558.07px;width:72.60px;height:1.35px;background:#222;"></div>
<svg style="left:589.53px;top:590.96px" width="5" height="5" viewBox="0 0 5 5"><path d="M0.3 0 L5 0 L5 4.7 Z" fill="#f00"/></svg>
<svg style="left:649.69px;top:590.96px" width="5" height="5" viewBox="0 0 5 5"><path d="M0.3 0 L5 0 L5 4.7 Z" fill="#f00"/></svg>
<svg style="left:709.86px;top:590.96px" width="5" height="5" viewBox="0 0 5 5"><path d="M0.3 0 L5 0 L5 4.7 Z" fill="#f00"/></svg>
<div style="left:399.30px;top:646.99px;width:72.60px;height:1.35px;background:#222;"></div>
<svg style="left:589.53px;top:635.42px" width="5" height="5" viewBox="0 0 5 5"><path d="M0.3 0 L5 0 L5 4.7 Z" fill="#f00"/></svg>
<svg style="left:649.69px;top:635.42px" width="5" height="5" viewBox="0 0 5 5"><path d="M0.3 0 L5 0 L5 4.7 Z" fill="#f00"/></svg>
<svg style="left:709.86px;top:635.42px" width="5" height="5" viewBox="0 0 5 5"><path d="M0.3 0 L5 0 L5 4.7 Z" fill="#f00"/></svg>
<div style="left:399.30px;top:691.45px;width:72.60px;height:1.35px;background:#222;"></div>
<div style="left:399.30px;top:721.09px;width:72.60px;height:1.35px;background:#222;"></div>
<div style="left:399.30px;top:780.37px;width:72.60px;height:1.35px;background:#222;"></div>
<svg style="left:589.53px;top:768.80px" width="5" height="5" viewBox="0 0 5 5"><path d="M0.3 0 L5 0 L5 4.7 Z" fill="#f00"/></svg>
<svg style="left:649.69px;top:768.80px" width="5" height="5" viewBox="0 0 5 5"><path d="M0.3 0 L5 0 L5 4.7 Z" fill="#f00"/></svg>
<svg style="left:709.86px;top:768.80px" width="5" height="5" viewBox="0 0 5 5"><path d="M0.3 0 L5 0 L5 4.7 Z" fill="#f00"/></svg>
<svg style="left:589.53px;top:842.90px" width="5" height="5" viewBox="0 0 5 5"><path d="M0.3 0 L5 0 L5 4.7 Z" fill="#f00"/></svg>
<svg style="left:649.69px;top:842.90px" width="5" height="5" viewBox="0 0 5 5"><path d="M0.3 0 L5 0 L5 4.7 Z" fill="#f00"/></svg>
<svg style="left:709.86px;top:842.90px" width="5" height="5" viewBox="0 0 5 5"><path d="M0.3 0 L5 0 L5 4.7 Z" fill="#f00"/></svg>
<div style="left:399.30px;top:884.11px;width:72.60px;height:1.35px;background:#222;"></div>
<svg style="left:589.53px;top:887.36px" width="5" height="5" viewBox="0 0 5 5"><path d="M0.3 0 L5 0 L5 4.7 Z" fill="#f00"/></svg>
<svg style="left:649.69px;top:887.36px" width="5" height="5" viewBox="0 0 5 5"><path d="M0.3 0 L5 0 L5 4.7 Z" fill="#f00"/></svg>
<svg style="left:709.86px;top:887.36px" width="5" height="5" viewBox="0 0 5 5"><path d="M0.3 0 L5 0 L5 4.7 Z" fill="#f00"/></svg>
<div style="left:399.30px;top:973.03px;width:72.60px;height:1.35px;background:#222;"></div>
<svg style="left:589.53px;top:1005.92px" width="5" height="5" viewBox="0 0 5 5"><path d="M0.3 0 L5 0 L5 4.7 Z" fill="#f00"/></svg>
<svg style="left:649.69px;top:1005.92px" width="5" height="5" viewBox="0 0 5 5"><path d="M0.3 0 L5 0 L5 4.7 Z" fill="#f00"/></svg>
<svg style="left:709.86px;top:1005.92px" width="5" height="5" viewBox="0 0 5 5"><path d="M0.3 0 L5 0 L5 4.7 Z" fill="#f00"/></svg>
<div style="left:399.30px;top:1061.95px;width:72.60px;height:1.35px;background:#222;"></div>
<svg style="left:589.53px;top:1050.38px" width="5" height="5" viewBox="0 0 5 5"><path d="M0.3 0 L5 0 L5 4.7 Z" fill="#f00"/></svg>
<svg style="left:649.69px;top:1050.38px" width="5" height="5" viewBox="0 0 5 5"><path d="M0.3 0 L5 0 L5 4.7 Z" fill="#f00"/></svg>
<svg style="left:709.86px;top:1050.38px" width="5" height="5" viewBox="0 0 5 5"><path d="M0.3 0 L5 0 L5 4.7 Z" fill="#f00"/></svg>
<div style="left:399.30px;top:1106.41px;width:72.60px;height:1.35px;background:#222;"></div>
<div style="left:399.30px;top:1136.05px;width:72.60px;height:1.35px;background:#222;"></div>
<div style="left:399.30px;top:1195.33px;width:72.60px;height:1.35px;background:#222;"></div>
<svg style="left:589.53px;top:1183.76px" width="5" height="5" viewBox="0 0 5 5"><path d="M0.3 0 L5 0 L5 4.7 Z" fill="#f00"/></svg>
<svg style="left:649.69px;top:1183.76px" width="5" height="5" viewBox="0 0 5 5"><path d="M0.3 0 L5 0 L5 4.7 Z" fill="#f00"/></svg>
<svg style="left:709.86px;top:1183.76px" width="5" height="5" viewBox="0 0 5 5"><path d="M0.3 0 L5 0 L5 4.7 Z" fill="#f00"/></svg>
<div style="left:6.40px;top:429.64px;width:1.10px;height:58.28px;background:#8a8a8a;"></div>
<div style="left:6.40px;top:429.64px;width:5.00px;height:1.10px;background:#8a8a8a;"></div>
<div style="left:2px;top:487.7px;width:13.6px;height:13.4px;background:#fff;border:1px solid #8a8a8a;border-radius:1px;"></div>
<div style="left:5.40px;top:493.72px;width:6.80px;height:1.60px;background:#444;"></div>
<div style="left:20.00px;top:435.00px;width:1.00px;height:1.00px;background:#6a6a6a;"></div>
<div style="left:20.00px;top:449.00px;width:1.00px;height:1.00px;background:#6a6a6a;"></div>
<div style="left:20.00px;top:464.00px;width:1.00px;height:1.00px;background:#6a6a6a;"></div>
<div style="left:20.00px;top:479.00px;width:1.00px;height:1.00px;background:#6a6a6a;"></div>
<div style="left:6.40px;top:548.20px;width:1.10px;height:384.32px;background:#8a8a8a;"></div>
<div style="left:6.40px;top:548.20px;width:5.00px;height:1.10px;background:#8a8a8a;"></div>
<div style="left:2px;top:932.3px;width:13.6px;height:13.4px;background:#fff;border:1px solid #8a8a8a;border-radius:1px;"></div>
<div style="left:5.40px;top:938.32px;width:6.80px;height:1.60px;background:#444;"></div>
<div style="left:20.00px;top:553.00px;width:1.00px;height:1.00px;background:#6a6a6a;"></div>
<div style="left:20.00px;top:568.00px;width:1.00px;height:1.00px;background:#6a6a6a;"></div>
<div style="left:20.00px;top:583.00px;width:1.00px;height:1.00px;background:#6a6a6a;"></div>
<div style="left:20.00px;top:598.00px;width:1.00px;height:1.00px;background:#6a6a6a;"></div>
<div style="left:20.00px;top:612.00px;width:1.00px;height:1.00px;background:#6a6a6a;"></div>
<div style="left:20.00px;top:627.00px;width:1.00px;height:1.00px;background:#6a6a6a;"></div>
<div style="left:20.00px;top:642.00px;width:1.00px;height:1.00px;background:#6a6a6a;"></div>
<div style="left:20.00px;top:657.00px;width:1.00px;height:1.00px;background:#6a6a6a;"></div>
<div style="left:20.00px;top:672.00px;width:1.00px;height:1.00px;background:#6a6a6a;"></div>
<div style="left:20.00px;top:687.00px;width:1.00px;height:1.00px;background:#6a6a6a;"></div>
<div style="left:20.00px;top:701.00px;width:1.00px;height:1.00px;background:#6a6a6a;"></div>
<div style="left:20.00px;top:716.00px;width:1.00px;height:1.00px;background:#6a6a6a;"></div>
<div style="left:20.00px;top:731.00px;width:1.00px;height:1.00px;background:#6a6a6a;"></div>
<div style="left:20.00px;top:746.00px;width:1.00px;height:1.00px;background:#6a6a6a;"></div>
<div style="left:20.00px;top:761.00px;width:1.00px;height:1.00px;background:#6a6a6a;"></div>
<div style="left:20.00px;top:776.00px;width:1.00px;height:1.00px;background:#6a6a6a;"></div>
<div style="left:20.00px;top:790.00px;width:1.00px;height:1.00px;background:#6a6a6a;"></div>
<div style="left:20.00px;top:805.00px;width:1.00px;height:1.00px;background:#6a6a6a;"></div>
<div style="left:20.00px;top:820.00px;width:1.00px;height:1.00px;background:#6a6a6a;"></div>
<div style="left:20.00px;top:835.00px;width:1.00px;height:1.00px;background:#6a6a6a;"></div>
<div style="left:20.00px;top:850.00px;width:1.00px;height:1.00px;background:#6a6a6a;"></div>
<div style="left:20.00px;top:864.00px;width:1.00px;height:1.00px;background:#6a6a6a;"></div>
<div style="left:20.00px;top:879.00px;width:1.00px;height:1.00px;background:#6a6a6a;"></div>
<div style="left:20.00px;top:894.00px;width:1.00px;height:1.00px;background:#6a6a6a;"></div>
<div style="left:20.00px;top:909.00px;width:1.00px;height:1.00px;background:#6a6a6a;"></div>
<div style="left:20.00px;top:924.00px;width:1.00px;height:1.00px;background:#6a6a6a;"></div>
<div style="left:6.40px;top:963.16px;width:1.10px;height:237.64px;background:#8a8a8a;"></div>
<div style="left:6.40px;top:963.16px;width:5.00px;height:1.10px;background:#8a8a8a;"></div>
<div style="left:20.00px;top:968.00px;width:1.00px;height:1.00px;background:#6a6a6a;"></div>
<div style="left:20.00px;top:983.00px;width:1.00px;height:1.00px;background:#6a6a6a;"></div>
<div style="left:20.00px;top:998.00px;width:1.00px;height:1.00px;background:#6a6a6a;"></div>
<div style="left:20.00px;top:1013.00px;width:1.00px;height:1.00px;background:#6a6a6a;"></div>
<div style="left:20.00px;top:1027.00px;width:1.00px;height:1.00px;background:#6a6a6a;"></div>
<div style="left:20.00px;top:1042.00px;width:1.00px;height:1.00px;background:#6a6a6a;"></div>
<div style="left:20.00px;top:1057.00px;width:1.00px;height:1.00px;background:#6a6a6a;"></div>
<div style="left:20.00px;top:1072.00px;width:1.00px;height:1.00px;background:#6a6a6a;"></div>
<div style="left:20.00px;top:1087.00px;width:1.00px;height:1.00px;background:#6a6a6a;"></div>
<div style="left:20.00px;top:1102.00px;width:1.00px;height:1.00px;background:#6a6a6a;"></div>
<div style="left:20.00px;top:1116.00px;width:1.00px;height:1.00px;background:#6a6a6a;"></div>
<div style="left:20.00px;top:1131.00px;width:1.00px;height:1.00px;background:#6a6a6a;"></div>
<div style="left:20.00px;top:1146.00px;width:1.00px;height:1.00px;background:#6a6a6a;"></div>
<div style="left:20.00px;top:1161.00px;width:1.00px;height:1.00px;background:#6a6a6a;"></div>
<div style="left:20.00px;top:1176.00px;width:1.00px;height:1.00px;background:#6a6a6a;"></div>
<div style="left:20.00px;top:1190.00px;width:1.00px;height:1.00px;background:#6a6a6a;"></div>
<div style="left:0.00px;top:397.05px;width:1445.00px;height:1.80px;background:#c2c2c2;"></div>
<div style="left:473.00px;top:235.30px;width:2.00px;height:965.50px;background:rgba(150,150,150,0.55);"></div>
<div style="left:2.1px;top:235.2px;width:14.4px;height:14.1px;background:#e6e6e6;border:1.2px solid #80858f;border-radius:1px;"></div>
<div style="left:15.4px;top:235.2px;width:14.4px;height:14.1px;background:#e6e6e6;border:1.2px solid #80858f;border-radius:1px;"></div>
<div style="left:0.00px;top:1200.80px;width:1445.00px;height:34.50px;background:#f0f0f0;"></div>
<div style="left:0.00px;top:1235.30px;width:1445.00px;height:11.70px;background:#f3f3f3;"></div>
<div style="left:0.00px;top:1235.00px;width:1445.00px;height:1.00px;background:#f8f8f8;"></div>
<svg style="left:26.50px;top:1210.50px" width="9" height="13" viewBox="0 0 9 13"><path d="M7.4 1 L1.4 6.5 L7.4 12" fill="none" stroke="#8a8a8a" stroke-width="1.2"/></svg>
<svg style="left:62.00px;top:1210.50px" width="9" height="13" viewBox="0 0 9 13"><path d="M1.4 1 L7.4 6.5 L1.4 12" fill="none" stroke="#8a8a8a" stroke-width="1.2"/></svg>
<div style="left:123px;top:1205.4px;width:57.4px;height:25.8px;background:#1ea7e1;border-radius:4.5px;"></div>
<div style="left:185.10px;top:1207.50px;width:1.00px;height:21.50px;background:#d2d2d2;"></div>
<div style="left:189.8px;top:1200.3px;width:79.2px;height:31px;background:#fff;border-radius:0 0 6px 6px;box-shadow:0 0.5px 1.5px rgba(0,0,0,0.18);"></div>
<div style="left:198.6px;top:1226.9px;width:61.4px;height:2.6px;border-radius:1.3px;background:#107c41;"></div>
<div style="left:272.80px;top:1207.50px;width:1.00px;height:21.50px;background:#d2d2d2;"></div>
<div style="left:315.90px;top:1207.50px;width:1.00px;height:21.50px;background:#d2d2d2;"></div>
<div style="left:370.50px;top:1207.50px;width:1.00px;height:21.50px;background:#d2d2d2;"></div>
<div style="left:440.00px;top:1207.50px;width:1.00px;height:21.50px;background:#d2d2d2;"></div>
<svg style="left:486.50px;top:1210.50px" width="13" height="13" viewBox="0 0 13 13"><path d="M6.5 0.5 V12.5 M0.5 6.5 H12.5" stroke="#444" stroke-width="1.3"/></svg>
<div style="left:1183.40px;top:1213.20px;width:2.10px;height:2.10px;background:#333;"></div>
<div style="left:1183.40px;top:1217.80px;width:2.10px;height:2.10px;background:#333;"></div>
<div style="left:1183.40px;top:1222.40px;width:2.10px;height:2.10px;background:#333;"></div>
<div style="left:1202px;top:1208.7px;width:300px;height:18.7px;background:#f6f6f6;border-radius:9px;"></div>
<svg style="left:1206.50px;top:1213.00px" width="9" height="10" viewBox="0 0 9 10"><path d="M8.2 0.4 V9.6 L0.6 5 Z" fill="#707070"/></svg>
<div style="left:1219.7px;top:1212.8px;width:300px;height:9.8px;background:#707070;border-radius:5px;"></div>
<svg style="left:65.00px;top:1241.50px" width="14" height="12" viewBox="0 0 14 12"><circle cx="6.5" cy="3" r="1.8" fill="none" stroke="#444" stroke-width="1"/><path d="M0.8 4.5 Q6.5 7.5 12.4 4.5" fill="none" stroke="#444" stroke-width="1"/></svg>
<span style="left:53.50px;top:20.00px;font-size:13.6px;line-height:13.6px;color:#b0b0b0;transform:scaleX(0.9177) skewX(0.5deg);">AutoSave</span>
<span style="left:122.80px;top:21.00px;font-size:11px;line-height:11px;color:#b4b4b4;transform:scaleX(0.9328) skewX(0.5deg);">On</span>
<span style="left:329.30px;top:21.00px;font-size:13.6px;line-height:13.6px;color:#bcbcbc;transform:scaleX(0.9611) skewX(0.5deg);">Car Dealership - Financial Model and Valuation vf • Saved</span>
<span style="left:791.20px;top:19.00px;font-size:14px;line-height:14px;color:#b2b2b2;transform:scaleX(1.0054) skewX(0.5deg);">Search</span>
<span style="left:23.70px;top:63.00px;font-size:14.4px;line-height:14.4px;color:#2b2b2b;transform:scaleX(0.9094) skewX(0.5deg);">File</span>
<span style="left:73.50px;top:63.00px;font-size:14.4px;line-height:14.4px;color:#2b2b2b;-webkit-text-stroke:0.5px #2b2b2b;transform:scaleX(1.0706) skewX(0.5deg);">Home</span>
<span style="left:134.50px;top:63.00px;font-size:14.4px;line-height:14.4px;color:#2b2b2b;transform:scaleX(1.0250) skewX(0.5deg);">Insert</span>
<span style="left:192.30px;top:63.00px;font-size:14.4px;line-height:14.4px;color:#2b2b2b;transform:scaleX(1.0091) skewX(0.5deg);">Draw</span>
<span style="left:247.90px;top:63.00px;font-size:14.4px;line-height:14.4px;color:#2b2b2b;transform:scaleX(0.9947) skewX(0.5deg);">Page Layout</span>
<span style="left:349.70px;top:63.00px;font-size:14.4px;line-height:14.4px;color:#2b2b2b;transform:scaleX(1.0053) skewX(0.5deg);">Formulas</span>
<span style="left:431.00px;top:63.00px;font-size:14.4px;line-height:14.4px;color:#2b2b2b;transform:scaleX(1.0064) skewX(0.5deg);">Data</span>
<span style="left:483.20px;top:63.00px;font-size:14.4px;line-height:14.4px;color:#2b2b2b;transform:scaleX(0.9558) skewX(0.5deg);">Review</span>
<span style="left:550.40px;top:63.00px;font-size:14.4px;line-height:14.4px;color:#2b2b2b;transform:scaleX(0.9729) skewX(0.5deg);">View</span>
<span style="left:602.60px;top:63.00px;font-size:14.4px;line-height:14.4px;color:#2b2b2b;transform:scaleX(1.0583) skewX(0.5deg);">Automate</span>
<span style="left:689.40px;top:63.00px;font-size:14.4px;line-height:14.4px;color:#2b2b2b;transform:scaleX(0.9828) skewX(0.5deg);">Help</span>
<span style="left:30.00px;top:133.00px;font-size:13.1px;line-height:13.1px;color:#b0b0b0;transform:scaleX(0.8661) skewX(0.5deg);">Paste</span>
<span style="left:95.20px;top:96.00px;font-size:13.1px;line-height:13.1px;color:#3a3a3a;transform:scaleX(0.9220) skewX(0.5deg);">Cut</span>
<span style="left:95.20px;top:124.00px;font-size:13.1px;line-height:13.1px;color:#3a3a3a;transform:scaleX(0.9517) skewX(0.5deg);">Copy</span>
<span style="left:95.20px;top:152.00px;font-size:13.1px;line-height:13.1px;color:#3a3a3a;transform:scaleX(0.9666) skewX(0.5deg);">Format Painter</span>
<span style="left:71.00px;top:176.00px;font-size:11.6px;line-height:11.6px;color:#3a3a3a;transform:scaleX(1.0076) skewX(0.5deg);">Clipboard</span>
<span style="left:208.60px;top:105.00px;font-size:13.1px;line-height:13.1px;color:#3a3a3a;transform:scaleX(0.9997) skewX(0.5deg);">Calibri</span>
<span style="left:337.00px;top:105.00px;font-size:13.1px;line-height:13.1px;color:#3a3a3a;transform:scaleX(0.8460) skewX(0.5deg);">11</span>
<span style="left:394.40px;top:100.00px;font-size:19.2px;line-height:19.2px;color:#444;transform:scaleX(0.9054) skewX(0.5deg);">A</span>
<span style="left:423.70px;top:103.00px;font-size:15.2px;line-height:15.2px;color:#444;transform:scaleX(0.9664) skewX(0.5deg);">A</span>
<span style="left:214.60px;top:137.00px;font-size:14.4px;line-height:14.4px;font-weight:700;color:#3a3a3a;transform:scaleX(0.8456) skewX(0.5deg);">B</span>
<span style="left:244.50px;top:136.00px;font-size:15.5px;line-height:15.5px;font-style:italic;color:#3a3a3a;font-family:'Liberation Serif', serif;transform:scaleX(1.0634) skewX(0.5deg);">I</span>
<span style="left:269.90px;top:138.00px;font-size:13.8px;line-height:13.8px;color:#3a3a3a;transform:scaleX(0.8627) skewX(0.5deg);">U</span>
<span style="left:407.90px;top:135.00px;font-size:15px;line-height:15px;color:#444;transform:scaleX(1.0983) skewX(0.5deg);">A</span>
<span style="left:304.70px;top:176.00px;font-size:11.6px;line-height:11.6px;color:#3a3a3a;transform:scaleX(0.9180) skewX(0.5deg);">Font</span>
<span style="left:640.40px;top:105.00px;font-size:13.1px;line-height:13.1px;color:#3a3a3a;transform:scaleX(0.9851) skewX(0.5deg);">Wrap Text</span>
<span style="left:640.40px;top:140.00px;font-size:13.1px;line-height:13.1px;color:#3a3a3a;transform:scaleX(0.9942) skewX(0.5deg);">Merge &amp; Center</span>
<span style="left:575.80px;top:176.00px;font-size:11.6px;line-height:11.6px;color:#3a3a3a;transform:scaleX(0.9736) skewX(0.5deg);">Alignment</span>
<span style="left:780.00px;top:105.00px;font-size:13.1px;line-height:13.1px;color:#3a3a3a;transform:scaleX(0.9962) skewX(0.5deg);">Number</span>
<span style="left:785.00px;top:137.00px;font-size:18.5px;line-height:18.5px;color:#444;transform:scaleX(0.8546) skewX(0.5deg);">$</span>
<span style="left:826.40px;top:136.00px;font-size:20.6px;line-height:20.6px;color:#444;transform:scaleX(0.8846) skewX(0.5deg);">%</span>
<span style="left:825.60px;top:176.00px;font-size:11.6px;line-height:11.6px;color:#3a3a3a;transform:scaleX(0.9939) skewX(0.5deg);">Number</span>
<span style="left:957.60px;top:132.00px;font-size:13.1px;line-height:13.1px;color:#3a3a3a;transform:scaleX(1.0135) skewX(0.5deg);">Conditional</span>
<span style="left:953.80px;top:149.00px;font-size:13.1px;line-height:13.1px;color:#3a3a3a;transform:scaleX(0.9905) skewX(0.5deg);">Formatting</span>
<span style="left:1035.40px;top:132.00px;font-size:13.1px;line-height:13.1px;color:#3a3a3a;transform:scaleX(0.9485) skewX(0.5deg);">Format as</span>
<span style="left:1042.90px;top:149.00px;font-size:13.1px;line-height:13.1px;color:#3a3a3a;transform:scaleX(0.8846) skewX(0.5deg);">Table</span>
<span style="left:1110.20px;top:132.00px;font-size:13.1px;line-height:13.1px;color:#3a3a3a;transform:scaleX(0.9175) skewX(0.5deg);">Cell</span>
<span style="left:1098.30px;top:149.00px;font-size:13.1px;line-height:13.1px;color:#3a3a3a;transform:scaleX(0.8890) skewX(0.5deg);">Styles</span>
<span style="left:1033.20px;top:177.00px;font-size:11.6px;line-height:11.6px;color:#3a3a3a;transform:scaleX(0.9025) skewX(0.5deg);">Styles</span>
<span style="left:1170.30px;top:134.00px;font-size:13.1px;line-height:13.1px;color:#3a3a3a;transform:scaleX(0.9527) skewX(0.5deg);">Insert</span>
<span style="left:1214.50px;top:134.00px;font-size:13.1px;line-height:13.1px;color:#3a3a3a;transform:scaleX(0.9879) skewX(0.5deg);">Delete</span>
<span style="left:1259.80px;top:132.00px;font-size:13.1px;line-height:13.1px;color:#3a3a3a;transform:scaleX(0.9622) skewX(0.5deg);">Format</span>
<span style="left:1221.40px;top:177.00px;font-size:11.6px;line-height:11.6px;color:#3a3a3a;transform:scaleX(0.8766) skewX(0.5deg);">Cells</span>
<span style="left:1346.80px;top:96.00px;font-size:13.1px;line-height:13.1px;color:#3a3a3a;transform:scaleX(0.9748) skewX(0.5deg);">AutoSum</span>
<span style="left:1346.80px;top:124.00px;font-size:13.1px;line-height:13.1px;color:#3a3a3a;transform:scaleX(0.9322) skewX(0.5deg);">Fill</span>
<span style="left:1346.80px;top:152.00px;font-size:13.1px;line-height:13.1px;color:#3a3a3a;transform:scaleX(0.9138) skewX(0.5deg);">Clear</span>
<span style="left:1406.20px;top:177.00px;font-size:11.6px;line-height:11.6px;color:#3a3a3a;transform:scaleX(0.9477) skewX(0.5deg);">Editing</span>
<span style="left:1435.40px;top:95.00px;font-size:17px;line-height:17px;color:#2a8dd4;transform:scaleX(1.0000) skewX(0.5deg);">A</span>
<span style="left:1436.50px;top:111.00px;font-size:16px;line-height:16px;color:#444;transform:scaleX(1.0000) skewX(0.5deg);">Z</span>
<span style="left:1432.50px;top:131.00px;font-size:13.1px;line-height:13.1px;color:#3a3a3a;transform:scaleX(1.0000) skewX(0.5deg);">Sort &amp;</span>
<span style="left:1430.50px;top:148.00px;font-size:13.1px;line-height:13.1px;color:#3a3a3a;transform:scaleX(1.0000) skewX(0.5deg);">Filter</span>
<span style="left:14.90px;top:209.00px;font-size:14.2px;line-height:14.2px;color:#333;transform:scaleX(0.9489) skewX(0.5deg);">J311</span>
<span style="left:201.00px;top:206.00px;font-size:18px;line-height:18px;font-weight:700;font-style:italic;color:#333;font-family:'Liberation Serif', serif;transform:scaleX(1.0000) skewX(0.5deg);">f</span>
<span style="left:207.60px;top:209.00px;font-size:14.5px;line-height:14.5px;font-weight:700;font-style:italic;color:#333;font-family:'Liberation Serif', serif;transform:scaleX(1.0000) skewX(0.5deg);">x</span>
<span style="left:237.90px;top:210.00px;font-size:13.6px;line-height:13.6px;color:#333;transform:scaleX(0.9749) skewX(0.5deg);">=-J304</span>
<span style="left:40.61px;top:254.00px;font-size:10px;line-height:10px;color:#444;transform:scaleX(1.0400) skewX(0.5deg);">1</span>
<span style="left:40.61px;top:268.00px;font-size:10px;line-height:10px;color:#444;transform:scaleX(1.0400) skewX(0.5deg);">2</span>
<span style="left:40.61px;top:283.00px;font-size:10px;line-height:10px;color:#444;transform:scaleX(1.0400) skewX(0.5deg);">3</span>
<span style="left:40.61px;top:298.00px;font-size:10px;line-height:10px;color:#444;transform:scaleX(1.0400) skewX(0.5deg);">4</span>
<span style="left:40.61px;top:313.00px;font-size:10px;line-height:10px;color:#444;transform:scaleX(1.0400) skewX(0.5deg);">5</span>
<span style="left:40.61px;top:328.00px;font-size:10px;line-height:10px;color:#444;transform:scaleX(1.0400) skewX(0.5deg);">6</span>
<span style="left:40.61px;top:343.00px;font-size:10px;line-height:10px;color:#444;transform:scaleX(1.0400) skewX(0.5deg);">7</span>
<span style="left:40.61px;top:357.00px;font-size:10px;line-height:10px;color:#444;transform:scaleX(1.0400) skewX(0.5deg);">8</span>
<span style="left:40.61px;top:372.00px;font-size:10px;line-height:10px;color:#444;transform:scaleX(1.0400) skewX(0.5deg);">9</span>
<span style="left:37.72px;top:387.00px;font-size:10px;line-height:10px;color:#444;transform:scaleX(1.0400) skewX(0.5deg);">10</span>
<span style="left:38.10px;top:402.00px;font-size:10px;line-height:10px;color:#444;transform:scaleX(1.0400) skewX(0.5deg);">11</span>
<span style="left:37.72px;top:417.00px;font-size:10px;line-height:10px;color:#444;transform:scaleX(1.0400) skewX(0.5deg);">12</span>
<span style="left:37.72px;top:431.00px;font-size:10px;line-height:10px;color:#444;transform:scaleX(1.0400) skewX(0.5deg);">13</span>
<span style="left:37.72px;top:446.00px;font-size:10px;line-height:10px;color:#444;transform:scaleX(1.0400) skewX(0.5deg);">14</span>
<span style="left:37.72px;top:461.00px;font-size:10px;line-height:10px;color:#444;transform:scaleX(1.0400) skewX(0.5deg);">15</span>
<span style="left:37.72px;top:476.00px;font-size:10px;line-height:10px;color:#444;transform:scaleX(1.0400) skewX(0.5deg);">16</span>
<span style="left:37.72px;top:491.00px;font-size:10px;line-height:10px;color:#444;transform:scaleX(1.0400) skewX(0.5deg);">17</span>
<span style="left:37.72px;top:506.00px;font-size:10px;line-height:10px;color:#444;transform:scaleX(1.0400) skewX(0.5deg);">18</span>
<span style="left:37.72px;top:520.00px;font-size:10px;line-height:10px;color:#444;transform:scaleX(1.0400) skewX(0.5deg);">19</span>
<span style="left:37.72px;top:535.00px;font-size:10px;line-height:10px;color:#444;transform:scaleX(1.0400) skewX(0.5deg);">20</span>
<span style="left:37.72px;top:550.00px;font-size:10px;line-height:10px;color:#444;transform:scaleX(1.0400) skewX(0.5deg);">21</span>
<span style="left:37.72px;top:565.00px;font-size:10px;line-height:10px;color:#444;transform:scaleX(1.0400) skewX(0.5deg);">22</span>
<span style="left:37.72px;top:580.00px;font-size:10px;line-height:10px;color:#444;transform:scaleX(1.0400) skewX(0.5deg);">23</span>
<span style="left:37.72px;top:595.00px;font-size:10px;line-height:10px;color:#444;transform:scaleX(1.0400) skewX(0.5deg);">24</span>
<span style="left:37.72px;top:609.00px;font-size:10px;line-height:10px;color:#444;transform:scaleX(1.0400) skewX(0.5deg);">25</span>
<span style="left:37.72px;top:624.00px;font-size:10px;line-height:10px;color:#444;transform:scaleX(1.0400) skewX(0.5deg);">26</span>
<span style="left:37.72px;top:639.00px;font-size:10px;line-height:10px;color:#444;transform:scaleX(1.0400) skewX(0.5deg);">27</span>
<span style="left:37.72px;top:654.00px;font-size:10px;line-height:10px;color:#444;transform:scaleX(1.0400) skewX(0.5deg);">28</span>
<span style="left:37.72px;top:669.00px;font-size:10px;line-height:10px;color:#444;transform:scaleX(1.0400) skewX(0.5deg);">29</span>
<span style="left:37.72px;top:683.00px;font-size:10px;line-height:10px;color:#444;transform:scaleX(1.0400) skewX(0.5deg);">30</span>
<span style="left:37.72px;top:698.00px;font-size:10px;line-height:10px;color:#444;transform:scaleX(1.0400) skewX(0.5deg);">31</span>
<span style="left:37.72px;top:713.00px;font-size:10px;line-height:10px;color:#444;transform:scaleX(1.0400) skewX(0.5deg);">32</span>
<span style="left:37.72px;top:728.00px;font-size:10px;line-height:10px;color:#444;transform:scaleX(1.0400) skewX(0.5deg);">33</span>
<span style="left:37.72px;top:743.00px;font-size:10px;line-height:10px;color:#444;transform:scaleX(1.0400) skewX(0.5deg);">34</span>
<span style="left:37.72px;top:758.00px;font-size:10px;line-height:10px;color:#444;transform:scaleX(1.0400) skewX(0.5deg);">35</span>
<span style="left:37.72px;top:772.00px;font-size:10px;line-height:10px;color:#444;transform:scaleX(1.0400) skewX(0.5deg);">36</span>
<span style="left:37.72px;top:787.00px;font-size:10px;line-height:10px;color:#444;transform:scaleX(1.0400) skewX(0.5deg);">37</span>
<span style="left:37.72px;top:802.00px;font-size:10px;line-height:10px;color:#444;transform:scaleX(1.0400) skewX(0.5deg);">38</span>
<span style="left:37.72px;top:817.00px;font-size:10px;line-height:10px;color:#444;transform:scaleX(1.0400) skewX(0.5deg);">39</span>
<span style="left:37.72px;top:832.00px;font-size:10px;line-height:10px;color:#444;transform:scaleX(1.0400) skewX(0.5deg);">40</span>
<span style="left:37.72px;top:846.00px;font-size:10px;line-height:10px;color:#444;transform:scaleX(1.0400) skewX(0.5deg);">41</span>
<span style="left:37.72px;top:861.00px;font-size:10px;line-height:10px;color:#444;transform:scaleX(1.0400) skewX(0.5deg);">42</span>
<span style="left:37.72px;top:876.00px;font-size:10px;line-height:10px;color:#444;transform:scaleX(1.0400) skewX(0.5deg);">43</span>
<span style="left:37.72px;top:891.00px;font-size:10px;line-height:10px;color:#444;transform:scaleX(1.0400) skewX(0.5deg);">44</span>
<span style="left:37.72px;top:906.00px;font-size:10px;line-height:10px;color:#444;transform:scaleX(1.0400) skewX(0.5deg);">45</span>
<span style="left:37.72px;top:921.00px;font-size:10px;line-height:10px;color:#444;transform:scaleX(1.0400) skewX(0.5deg);">46</span>
<span style="left:37.72px;top:935.00px;font-size:10px;line-height:10px;color:#444;transform:scaleX(1.0400) skewX(0.5deg);">47</span>
<span style="left:37.72px;top:950.00px;font-size:10px;line-height:10px;color:#444;transform:scaleX(1.0400) skewX(0.5deg);">48</span>
<span style="left:37.72px;top:965.00px;font-size:10px;line-height:10px;color:#444;transform:scaleX(1.0400) skewX(0.5deg);">49</span>
<span style="left:37.72px;top:980.00px;font-size:10px;line-height:10px;color:#444;transform:scaleX(1.0400) skewX(0.5deg);">50</span>
<span style="left:37.72px;top:995.00px;font-size:10px;line-height:10px;color:#444;transform:scaleX(1.0400) skewX(0.5deg);">51</span>
<span style="left:37.72px;top:1009.00px;font-size:10px;line-height:10px;color:#444;transform:scaleX(1.0400) skewX(0.5deg);">52</span>
<span style="left:37.72px;top:1024.00px;font-size:10px;line-height:10px;color:#444;transform:scaleX(1.0400) skewX(0.5deg);">53</span>
<span style="left:37.72px;top:1039.00px;font-size:10px;line-height:10px;color:#444;transform:scaleX(1.0400) skewX(0.5deg);">54</span>
<span style="left:37.72px;top:1054.00px;font-size:10px;line-height:10px;color:#444;transform:scaleX(1.0400) skewX(0.5deg);">55</span>
<span style="left:37.72px;top:1069.00px;font-size:10px;line-height:10px;color:#444;transform:scaleX(1.0400) skewX(0.5deg);">56</span>
<span style="left:37.72px;top:1084.00px;font-size:10px;line-height:10px;color:#444;transform:scaleX(1.0400) skewX(0.5deg);">57</span>
<span style="left:37.72px;top:1098.00px;font-size:10px;line-height:10px;color:#444;transform:scaleX(1.0400) skewX(0.5deg);">58</span>
<span style="left:37.72px;top:1113.00px;font-size:10px;line-height:10px;color:#444;transform:scaleX(1.0400) skewX(0.5deg);">59</span>
<span style="left:37.72px;top:1128.00px;font-size:10px;line-height:10px;color:#444;transform:scaleX(1.0400) skewX(0.5deg);">60</span>
<span style="left:37.72px;top:1143.00px;font-size:10px;line-height:10px;color:#444;transform:scaleX(1.0400) skewX(0.5deg);">61</span>
<span style="left:37.72px;top:1158.00px;font-size:10px;line-height:10px;color:#444;transform:scaleX(1.0400) skewX(0.5deg);">62</span>
<span style="left:37.72px;top:1172.00px;font-size:10px;line-height:10px;color:#444;transform:scaleX(1.0400) skewX(0.5deg);">63</span>
<span style="left:37.72px;top:1187.00px;font-size:10px;line-height:10px;color:#444;transform:scaleX(1.0400) skewX(0.5deg);">64</span>
<span style="left:59.06px;top:239.00px;font-size:10px;line-height:10px;color:#444;transform:scaleX(0.8800) skewX(0.5deg);">A</span>
<span style="left:162.61px;top:239.00px;font-size:10px;line-height:10px;color:#444;transform:scaleX(0.8800) skewX(0.5deg);">B</span>
<span style="left:292.42px;top:239.00px;font-size:10px;line-height:10px;color:#444;transform:scaleX(0.8800) skewX(0.5deg);">C</span>
<span style="left:360.32px;top:239.00px;font-size:10px;line-height:10px;color:#444;transform:scaleX(0.8800) skewX(0.5deg);">D</span>
<span style="left:432.86px;top:239.00px;font-size:10px;line-height:10px;color:#444;transform:scaleX(0.8800) skewX(0.5deg);">E</span>
<span style="left:501.59px;top:239.00px;font-size:10px;line-height:10px;color:#444;transform:scaleX(0.8800) skewX(0.5deg);">F</span>
<span style="left:561.02px;top:239.00px;font-size:10px;line-height:10px;color:#444;transform:scaleX(0.8800) skewX(0.5deg);">G</span>
<span style="left:621.43px;top:239.00px;font-size:10px;line-height:10px;color:#444;transform:scaleX(0.8800) skewX(0.5deg);">H</span>
<span style="left:683.55px;top:239.00px;font-size:10px;line-height:10px;color:#444;transform:scaleX(0.8800) skewX(0.5deg);">I</span>
<span style="left:742.74px;top:239.00px;font-size:10px;line-height:10px;color:#444;transform:scaleX(0.8800) skewX(0.5deg);">J</span>
<span style="left:802.17px;top:239.00px;font-size:10px;line-height:10px;color:#444;transform:scaleX(0.8800) skewX(0.5deg);">K</span>
<span style="left:862.82px;top:239.00px;font-size:10px;line-height:10px;color:#444;transform:scaleX(0.8800) skewX(0.5deg);">L</span>
<span style="left:921.76px;top:239.00px;font-size:10px;line-height:10px;color:#444;transform:scaleX(0.8800) skewX(0.5deg);">M</span>
<span style="left:982.41px;top:239.00px;font-size:10px;line-height:10px;color:#444;transform:scaleX(0.8800) skewX(0.5deg);">N</span>
<span style="left:1042.33px;top:239.00px;font-size:10px;line-height:10px;color:#444;transform:scaleX(0.8800) skewX(0.5deg);">O</span>
<span style="left:1102.99px;top:239.00px;font-size:10px;line-height:10px;color:#444;transform:scaleX(0.8800) skewX(0.5deg);">P</span>
<span style="left:1162.66px;top:239.00px;font-size:10px;line-height:10px;color:#444;transform:scaleX(0.8800) skewX(0.5deg);">Q</span>
<span style="left:1223.07px;top:239.00px;font-size:10px;line-height:10px;color:#444;transform:scaleX(0.8800) skewX(0.5deg);">R</span>
<span style="left:1283.48px;top:239.00px;font-size:10px;line-height:10px;color:#444;transform:scaleX(0.8800) skewX(0.5deg);">S</span>
<span style="left:1354.86px;top:239.00px;font-size:10px;line-height:10px;color:#444;transform:scaleX(0.8800) skewX(0.5deg);">T</span>
<span style="left:1436.82px;top:239.00px;font-size:10px;line-height:10px;color:#444;transform:scaleX(0.8800) skewX(0.5deg);">U</span>
<span style="left:56.80px;top:254.00px;font-size:10.0px;line-height:10.0px;font-weight:700;transform:scaleX(0.9677) skewX(0.5deg);">Financial Model Build-Up</span>
<span style="left:353.85px;top:326.00px;font-size:10.0px;line-height:10.0px;font-weight:700;transform:scaleX(0.9921) skewX(0.5deg);">Unit</span>
<span style="left:570.78px;top:326.00px;font-size:10.0px;line-height:10.0px;font-weight:700;transform:scaleX(0.9288) skewX(0.5deg);">Historicals</span>
<span style="left:995.88px;top:326.00px;font-size:10.0px;line-height:10.0px;font-weight:700;transform:scaleX(0.9499) skewX(0.5deg);">Forecast</span>
<span style="left:455.00px;top:343.00px;font-size:10.0px;line-height:10.0px;font-weight:700;transform:scaleX(0.8300) skewX(0.5deg);">BoP</span>
<span style="left:455.00px;top:357.00px;font-size:10.0px;line-height:10.0px;font-weight:700;transform:scaleX(0.8533) skewX(0.5deg);">EoP</span>
<span style="left:450.70px;top:372.00px;font-size:10.0px;line-height:10.0px;font-weight:700;transform:scaleX(0.9886) skewX(0.5deg);">Year</span>
<span style="left:450.70px;top:387.00px;font-size:10.0px;line-height:10.0px;font-weight:700;transform:scaleX(0.8742) skewX(0.5deg);">Days</span>
<span style="left:488.46px;top:343.00px;font-size:10.0px;line-height:10.0px;color:#1414f8;transform:scaleX(1.1380) skewX(0.5deg);">1/1/20</span>
<span style="left:482.13px;top:357.00px;font-size:10.0px;line-height:10.0px;transform:scaleX(1.1380) skewX(0.5deg);">31/12/20</span>
<span style="left:492.49px;top:372.00px;font-size:10.0px;line-height:10.0px;transform:scaleX(1.0600) skewX(0.5deg);">2020</span>
<span style="left:495.44px;top:387.00px;font-size:10.0px;line-height:10.0px;transform:scaleX(1.0600) skewX(0.5deg);">366</span>
<span style="left:548.62px;top:343.00px;font-size:10.0px;line-height:10.0px;transform:scaleX(1.1380) skewX(0.5deg);">1/1/21</span>
<span style="left:542.29px;top:357.00px;font-size:10.0px;line-height:10.0px;transform:scaleX(1.1380) skewX(0.5deg);">31/12/21</span>
<span style="left:552.65px;top:372.00px;font-size:10.0px;line-height:10.0px;transform:scaleX(1.0600) skewX(0.5deg);">2021</span>
<span style="left:555.60px;top:387.00px;font-size:10.0px;line-height:10.0px;transform:scaleX(1.0600) skewX(0.5deg);">365</span>
<span style="left:608.78px;top:343.00px;font-size:10.0px;line-height:10.0px;transform:scaleX(1.1380) skewX(0.5deg);">1/1/22</span>
<span style="left:602.45px;top:357.00px;font-size:10.0px;line-height:10.0px;transform:scaleX(1.1380) skewX(0.5deg);">31/12/22</span>
<span style="left:612.82px;top:372.00px;font-size:10.0px;line-height:10.0px;transform:scaleX(1.0600) skewX(0.5deg);">2022</span>
<span style="left:615.77px;top:387.00px;font-size:10.0px;line-height:10.0px;transform:scaleX(1.0600) skewX(0.5deg);">365</span>
<span style="left:668.95px;top:343.00px;font-size:10.0px;line-height:10.0px;transform:scaleX(1.1380) skewX(0.5deg);">1/1/23</span>
<span style="left:662.62px;top:357.00px;font-size:10.0px;line-height:10.0px;transform:scaleX(1.1380) skewX(0.5deg);">31/12/23</span>
<span style="left:672.98px;top:372.00px;font-size:10.0px;line-height:10.0px;transform:scaleX(1.0600) skewX(0.5deg);">2023</span>
<span style="left:675.93px;top:387.00px;font-size:10.0px;line-height:10.0px;transform:scaleX(1.0600) skewX(0.5deg);">365</span>
<span style="left:729.11px;top:343.00px;font-size:10.0px;line-height:10.0px;transform:scaleX(1.1380) skewX(0.5deg);">1/1/24</span>
<span style="left:722.78px;top:357.00px;font-size:10.0px;line-height:10.0px;transform:scaleX(1.1380) skewX(0.5deg);">31/12/24</span>
<span style="left:733.15px;top:372.00px;font-size:10.0px;line-height:10.0px;transform:scaleX(1.0600) skewX(0.5deg);">2024</span>
<span style="left:736.09px;top:387.00px;font-size:10.0px;line-height:10.0px;transform:scaleX(1.0600) skewX(0.5deg);">366</span>
<span style="left:789.28px;top:343.00px;font-size:10.0px;line-height:10.0px;transform:scaleX(1.1380) skewX(0.5deg);">1/1/25</span>
<span style="left:782.95px;top:357.00px;font-size:10.0px;line-height:10.0px;transform:scaleX(1.1380) skewX(0.5deg);">31/12/25</span>
<span style="left:793.31px;top:372.00px;font-size:10.0px;line-height:10.0px;transform:scaleX(1.0600) skewX(0.5deg);">2025</span>
<span style="left:796.26px;top:387.00px;font-size:10.0px;line-height:10.0px;transform:scaleX(1.0600) skewX(0.5deg);">365</span>
<span style="left:849.44px;top:343.00px;font-size:10.0px;line-height:10.0px;transform:scaleX(1.1380) skewX(0.5deg);">1/1/26</span>
<span style="left:843.11px;top:357.00px;font-size:10.0px;line-height:10.0px;transform:scaleX(1.1380) skewX(0.5deg);">31/12/26</span>
<span style="left:853.47px;top:372.00px;font-size:10.0px;line-height:10.0px;transform:scaleX(1.0600) skewX(0.5deg);">2026</span>
<span style="left:856.42px;top:387.00px;font-size:10.0px;line-height:10.0px;transform:scaleX(1.0600) skewX(0.5deg);">365</span>
<span style="left:909.60px;top:343.00px;font-size:10.0px;line-height:10.0px;transform:scaleX(1.1380) skewX(0.5deg);">1/1/27</span>
<span style="left:903.27px;top:357.00px;font-size:10.0px;line-height:10.0px;transform:scaleX(1.1380) skewX(0.5deg);">31/12/27</span>
<span style="left:913.64px;top:372.00px;font-size:10.0px;line-height:10.0px;transform:scaleX(1.0600) skewX(0.5deg);">2027</span>
<span style="left:916.59px;top:387.00px;font-size:10.0px;line-height:10.0px;transform:scaleX(1.0600) skewX(0.5deg);">365</span>
<span style="left:969.77px;top:343.00px;font-size:10.0px;line-height:10.0px;transform:scaleX(1.1380) skewX(0.5deg);">1/1/28</span>
<span style="left:963.44px;top:357.00px;font-size:10.0px;line-height:10.0px;transform:scaleX(1.1380) skewX(0.5deg);">31/12/28</span>
<span style="left:973.80px;top:372.00px;font-size:10.0px;line-height:10.0px;transform:scaleX(1.0600) skewX(0.5deg);">2028</span>
<span style="left:976.75px;top:387.00px;font-size:10.0px;line-height:10.0px;transform:scaleX(1.0600) skewX(0.5deg);">366</span>
<span style="left:1029.93px;top:343.00px;font-size:10.0px;line-height:10.0px;transform:scaleX(1.1380) skewX(0.5deg);">1/1/29</span>
<span style="left:1023.60px;top:357.00px;font-size:10.0px;line-height:10.0px;transform:scaleX(1.1380) skewX(0.5deg);">31/12/29</span>
<span style="left:1033.97px;top:372.00px;font-size:10.0px;line-height:10.0px;transform:scaleX(1.0600) skewX(0.5deg);">2029</span>
<span style="left:1036.91px;top:387.00px;font-size:10.0px;line-height:10.0px;transform:scaleX(1.0600) skewX(0.5deg);">365</span>
<span style="left:1090.10px;top:343.00px;font-size:10.0px;line-height:10.0px;transform:scaleX(1.1380) skewX(0.5deg);">1/1/30</span>
<span style="left:1083.77px;top:357.00px;font-size:10.0px;line-height:10.0px;transform:scaleX(1.1380) skewX(0.5deg);">31/12/30</span>
<span style="left:1094.13px;top:372.00px;font-size:10.0px;line-height:10.0px;transform:scaleX(1.0600) skewX(0.5deg);">2030</span>
<span style="left:1097.08px;top:387.00px;font-size:10.0px;line-height:10.0px;transform:scaleX(1.0600) skewX(0.5deg);">365</span>
<span style="left:1150.26px;top:343.00px;font-size:10.0px;line-height:10.0px;transform:scaleX(1.1380) skewX(0.5deg);">1/1/31</span>
<span style="left:1143.93px;top:357.00px;font-size:10.0px;line-height:10.0px;transform:scaleX(1.1380) skewX(0.5deg);">31/12/31</span>
<span style="left:1154.29px;top:372.00px;font-size:10.0px;line-height:10.0px;transform:scaleX(1.0600) skewX(0.5deg);">2031</span>
<span style="left:1157.24px;top:387.00px;font-size:10.0px;line-height:10.0px;transform:scaleX(1.0600) skewX(0.5deg);">365</span>
<span style="left:1210.42px;top:343.00px;font-size:10.0px;line-height:10.0px;transform:scaleX(1.1380) skewX(0.5deg);">1/1/32</span>
<span style="left:1204.09px;top:357.00px;font-size:10.0px;line-height:10.0px;transform:scaleX(1.1380) skewX(0.5deg);">31/12/32</span>
<span style="left:1214.46px;top:372.00px;font-size:10.0px;line-height:10.0px;transform:scaleX(1.0600) skewX(0.5deg);">2032</span>
<span style="left:1217.41px;top:387.00px;font-size:10.0px;line-height:10.0px;transform:scaleX(1.0600) skewX(0.5deg);">366</span>
<span style="left:1270.59px;top:343.00px;font-size:10.0px;line-height:10.0px;transform:scaleX(1.1380) skewX(0.5deg);">1/1/33</span>
<span style="left:1264.26px;top:357.00px;font-size:10.0px;line-height:10.0px;transform:scaleX(1.1380) skewX(0.5deg);">31/12/33</span>
<span style="left:1274.62px;top:372.00px;font-size:10.0px;line-height:10.0px;transform:scaleX(1.0600) skewX(0.5deg);">2033</span>
<span style="left:1277.57px;top:387.00px;font-size:10.0px;line-height:10.0px;transform:scaleX(1.0600) skewX(0.5deg);">365</span>
<span style="left:56.90px;top:417.00px;font-size:10.0px;line-height:10.0px;transform:scaleX(0.8244) skewX(0.5deg);">X</span>
<span style="left:56.90px;top:506.00px;font-size:10.0px;line-height:10.0px;transform:scaleX(0.9200) skewX(0.5deg);">x</span>
<span style="left:56.90px;top:535.00px;font-size:10.0px;line-height:10.0px;transform:scaleX(0.9200) skewX(0.5deg);">x</span>
<span style="left:56.90px;top:950.00px;font-size:10.0px;line-height:10.0px;transform:scaleX(0.9200) skewX(0.5deg);">x</span>
<span style="left:71.50px;top:417.00px;font-size:10.0px;line-height:10.0px;font-weight:700;color:#fff;transform:scaleX(0.9598) skewX(0.5deg);">Assumptions</span>
<span style="left:71.50px;top:506.00px;font-size:10.0px;line-height:10.0px;font-weight:700;color:#fff;transform:scaleX(0.9601) skewX(0.5deg);">P&amp;L Build-Up</span>
<span style="left:71.50px;top:535.00px;font-size:10.0px;line-height:10.0px;font-weight:700;transform:scaleX(0.9362) skewX(0.5deg);">Sedan</span>
<span style="left:71.50px;top:950.00px;font-size:10.0px;line-height:10.0px;font-weight:700;transform:scaleX(0.9046) skewX(0.5deg);">SUV</span>
<span style="left:71.10px;top:431.00px;font-size:10.0px;line-height:10.0px;transform:scaleX(0.9855) skewX(0.5deg);">Exchange Rate</span>
<span style="left:357.60px;top:431.00px;font-size:10.0px;line-height:10.0px;transform:scaleX(0.9389) skewX(0.5deg);">FX</span>
<span style="left:513.62px;top:431.00px;font-size:10.0px;line-height:10.0px;color:#1414f8;transform:scaleX(1.0600) skewX(0.5deg);">1.0</span>
<span style="left:573.79px;top:431.00px;font-size:10.0px;line-height:10.0px;color:#1414f8;transform:scaleX(1.0600) skewX(0.5deg);">1.0</span>
<span style="left:633.95px;top:431.00px;font-size:10.0px;line-height:10.0px;color:#1414f8;transform:scaleX(1.0600) skewX(0.5deg);">1.0</span>
<span style="left:694.12px;top:431.00px;font-size:10.0px;line-height:10.0px;color:#1414f8;transform:scaleX(1.0600) skewX(0.5deg);">1.0</span>
<span style="left:754.28px;top:431.00px;font-size:10.0px;line-height:10.0px;color:#1414f8;transform:scaleX(1.0600) skewX(0.5deg);">1.0</span>
<span style="left:814.44px;top:431.00px;font-size:10.0px;line-height:10.0px;color:#1414f8;transform:scaleX(1.0600) skewX(0.5deg);">1.0</span>
<span style="left:874.61px;top:431.00px;font-size:10.0px;line-height:10.0px;color:#1414f8;transform:scaleX(1.0600) skewX(0.5deg);">1.0</span>
<span style="left:934.77px;top:431.00px;font-size:10.0px;line-height:10.0px;color:#1414f8;transform:scaleX(1.0600) skewX(0.5deg);">1.0</span>
<span style="left:994.94px;top:431.00px;font-size:10.0px;line-height:10.0px;color:#1414f8;transform:scaleX(1.0600) skewX(0.5deg);">1.0</span>
<span style="left:1055.10px;top:431.00px;font-size:10.0px;line-height:10.0px;color:#1414f8;transform:scaleX(1.0600) skewX(0.5deg);">1.0</span>
<span style="left:1115.26px;top:431.00px;font-size:10.0px;line-height:10.0px;color:#1414f8;transform:scaleX(1.0600) skewX(0.5deg);">1.0</span>
<span style="left:1175.43px;top:431.00px;font-size:10.0px;line-height:10.0px;color:#1414f8;transform:scaleX(1.0600) skewX(0.5deg);">1.0</span>
<span style="left:1235.59px;top:431.00px;font-size:10.0px;line-height:10.0px;color:#1414f8;transform:scaleX(1.0600) skewX(0.5deg);">1.0</span>
<span style="left:1295.76px;top:431.00px;font-size:10.0px;line-height:10.0px;color:#1414f8;transform:scaleX(1.0600) skewX(0.5deg);">1.0</span>
<span style="left:71.10px;top:446.00px;font-size:10.0px;line-height:10.0px;transform:scaleX(1.0850) skewX(0.5deg);">US Inflation</span>
<span style="left:349.35px;top:446.00px;font-size:10.0px;line-height:10.0px;transform:scaleX(0.9924) skewX(0.5deg);">Var. %</span>
<span style="left:509.20px;top:446.00px;font-size:10.0px;line-height:10.0px;color:#1414f8;transform:scaleX(0.9900) skewX(0.5deg);">3.6%</span>
<span style="left:569.36px;top:446.00px;font-size:10.0px;line-height:10.0px;color:#1414f8;transform:scaleX(0.9900) skewX(0.5deg);">3.4%</span>
<span style="left:629.52px;top:446.00px;font-size:10.0px;line-height:10.0px;color:#1414f8;transform:scaleX(0.9900) skewX(0.5deg);">5.7%</span>
<span style="left:689.69px;top:446.00px;font-size:10.0px;line-height:10.0px;color:#1414f8;transform:scaleX(0.9900) skewX(0.5deg);">7.9%</span>
<span style="left:749.85px;top:446.00px;font-size:10.0px;line-height:10.0px;color:#1414f8;transform:scaleX(0.9900) skewX(0.5deg);">5.9%</span>
<span style="left:810.02px;top:446.00px;font-size:10.0px;line-height:10.0px;color:#1414f8;transform:scaleX(0.9900) skewX(0.5deg);">4.0%</span>
<span style="left:870.18px;top:446.00px;font-size:10.0px;line-height:10.0px;color:#1414f8;transform:scaleX(0.9900) skewX(0.5deg);">3.7%</span>
<span style="left:930.34px;top:446.00px;font-size:10.0px;line-height:10.0px;color:#1414f8;transform:scaleX(0.9900) skewX(0.5deg);">3.6%</span>
<span style="left:990.51px;top:446.00px;font-size:10.0px;line-height:10.0px;color:#1414f8;transform:scaleX(0.9900) skewX(0.5deg);">3.4%</span>
<span style="left:1050.67px;top:446.00px;font-size:10.0px;line-height:10.0px;color:#1414f8;transform:scaleX(0.9900) skewX(0.5deg);">2.9%</span>
<span style="left:1110.84px;top:446.00px;font-size:10.0px;line-height:10.0px;color:#1414f8;transform:scaleX(0.9900) skewX(0.5deg);">2.7%</span>
<span style="left:1171.00px;top:446.00px;font-size:10.0px;line-height:10.0px;color:#1414f8;transform:scaleX(0.9900) skewX(0.5deg);">2.5%</span>
<span style="left:1231.16px;top:446.00px;font-size:10.0px;line-height:10.0px;color:#1414f8;transform:scaleX(0.9900) skewX(0.5deg);">2.7%</span>
<span style="left:1291.33px;top:446.00px;font-size:10.0px;line-height:10.0px;color:#1414f8;transform:scaleX(0.9900) skewX(0.5deg);">2.7%</span>
<span style="left:71.10px;top:461.00px;font-size:10.0px;line-height:10.0px;transform:scaleX(1.0847) skewX(0.5deg);">CPI Inflation</span>
<span style="left:349.35px;top:461.00px;font-size:10.0px;line-height:10.0px;transform:scaleX(0.9924) skewX(0.5deg);">Var. %</span>
<span style="left:509.20px;top:461.00px;font-size:10.0px;line-height:10.0px;color:#1414f8;transform:scaleX(0.9900) skewX(0.5deg);">1.8%</span>
<span style="left:569.36px;top:461.00px;font-size:10.0px;line-height:10.0px;color:#1414f8;transform:scaleX(0.9900) skewX(0.5deg);">1.3%</span>
<span style="left:629.52px;top:461.00px;font-size:10.0px;line-height:10.0px;color:#1414f8;transform:scaleX(0.9900) skewX(0.5deg);">4.7%</span>
<span style="left:689.69px;top:461.00px;font-size:10.0px;line-height:10.0px;color:#1414f8;transform:scaleX(0.9900) skewX(0.5deg);">8.0%</span>
<span style="left:749.85px;top:461.00px;font-size:10.0px;line-height:10.0px;color:#1414f8;transform:scaleX(0.9900) skewX(0.5deg);">4.2%</span>
<span style="left:810.02px;top:461.00px;font-size:10.0px;line-height:10.0px;color:#1414f8;transform:scaleX(0.9900) skewX(0.5deg);">2.2%</span>
<span style="left:870.18px;top:461.00px;font-size:10.0px;line-height:10.0px;color:#1414f8;transform:scaleX(0.9900) skewX(0.5deg);">1.9%</span>
<span style="left:930.34px;top:461.00px;font-size:10.0px;line-height:10.0px;color:#1414f8;transform:scaleX(0.9900) skewX(0.5deg);">2.0%</span>
<span style="left:990.51px;top:461.00px;font-size:10.0px;line-height:10.0px;color:#1414f8;transform:scaleX(0.9900) skewX(0.5deg);">2.1%</span>
<span style="left:1050.67px;top:461.00px;font-size:10.0px;line-height:10.0px;color:#1414f8;transform:scaleX(0.9900) skewX(0.5deg);">2.1%</span>
<span style="left:1110.84px;top:461.00px;font-size:10.0px;line-height:10.0px;color:#1414f8;transform:scaleX(0.9900) skewX(0.5deg);">2.1%</span>
<span style="left:1171.00px;top:461.00px;font-size:10.0px;line-height:10.0px;color:#1414f8;transform:scaleX(0.9900) skewX(0.5deg);">2.0%</span>
<span style="left:1231.16px;top:461.00px;font-size:10.0px;line-height:10.0px;color:#1414f8;transform:scaleX(0.9900) skewX(0.5deg);">2.2%</span>
<span style="left:1291.33px;top:461.00px;font-size:10.0px;line-height:10.0px;color:#1414f8;transform:scaleX(0.9900) skewX(0.5deg);">2.2%</span>
<span style="left:71.10px;top:476.00px;font-size:10.0px;line-height:10.0px;transform:scaleX(1.0424) skewX(0.5deg);">Corporate Tax Rate</span>
<span style="left:348.05px;top:476.00px;font-size:10.0px;line-height:10.0px;transform:scaleX(0.9483) skewX(0.5deg);">Rate %</span>
<span style="left:503.69px;top:476.00px;font-size:10.0px;line-height:10.0px;color:#1414f8;transform:scaleX(0.9900) skewX(0.5deg);">30.0%</span>
<span style="left:563.85px;top:476.00px;font-size:10.0px;line-height:10.0px;color:#1414f8;transform:scaleX(0.9900) skewX(0.5deg);">30.0%</span>
<span style="left:624.02px;top:476.00px;font-size:10.0px;line-height:10.0px;color:#1414f8;transform:scaleX(0.9900) skewX(0.5deg);">30.0%</span>
<span style="left:684.18px;top:476.00px;font-size:10.0px;line-height:10.0px;color:#1414f8;transform:scaleX(0.9900) skewX(0.5deg);">30.0%</span>
<span style="left:744.34px;top:476.00px;font-size:10.0px;line-height:10.0px;color:#1414f8;transform:scaleX(0.9900) skewX(0.5deg);">30.0%</span>
<span style="left:804.51px;top:476.00px;font-size:10.0px;line-height:10.0px;color:#1414f8;transform:scaleX(0.9900) skewX(0.5deg);">30.0%</span>
<span style="left:864.67px;top:476.00px;font-size:10.0px;line-height:10.0px;color:#1414f8;transform:scaleX(0.9900) skewX(0.5deg);">30.0%</span>
<span style="left:924.84px;top:476.00px;font-size:10.0px;line-height:10.0px;color:#1414f8;transform:scaleX(0.9900) skewX(0.5deg);">30.0%</span>
<span style="left:985.00px;top:476.00px;font-size:10.0px;line-height:10.0px;color:#1414f8;transform:scaleX(0.9900) skewX(0.5deg);">30.0%</span>
<span style="left:1045.16px;top:476.00px;font-size:10.0px;line-height:10.0px;color:#1414f8;transform:scaleX(0.9900) skewX(0.5deg);">30.0%</span>
<span style="left:1105.33px;top:476.00px;font-size:10.0px;line-height:10.0px;color:#1414f8;transform:scaleX(0.9900) skewX(0.5deg);">30.0%</span>
<span style="left:1165.49px;top:476.00px;font-size:10.0px;line-height:10.0px;color:#1414f8;transform:scaleX(0.9900) skewX(0.5deg);">30.0%</span>
<span style="left:1225.66px;top:476.00px;font-size:10.0px;line-height:10.0px;color:#1414f8;transform:scaleX(0.9900) skewX(0.5deg);">30.0%</span>
<span style="left:1285.82px;top:476.00px;font-size:10.0px;line-height:10.0px;color:#1414f8;transform:scaleX(0.9900) skewX(0.5deg);">30.0%</span>
<span style="left:349.35px;top:550.00px;font-size:10.0px;line-height:10.0px;font-style:italic;transform:scaleX(0.9733) skewX(0.5deg);">Var. %</span>
<span style="left:407.60px;top:549.00px;font-size:10.0px;line-height:10.0px;font-weight:700;transform:scaleX(1.0016) skewX(0.5deg);">YoY Growth</span>
<span style="left:71.10px;top:565.00px;font-size:10.0px;line-height:10.0px;font-weight:700;transform:scaleX(0.9767) skewX(0.5deg);">Vehicles</span>
<span style="left:352.30px;top:565.00px;font-size:10.0px;line-height:10.0px;font-weight:700;transform:scaleX(1.0157) skewX(0.5deg);">000s</span>
<span style="left:424.52px;top:565.00px;font-size:10.0px;line-height:10.0px;color:#1414f8;transform:scaleX(0.9900) skewX(0.5deg);">4.0%</span>
<span style="left:573.79px;top:565.00px;font-size:10.0px;line-height:10.0px;font-weight:700;color:#1414f8;transform:scaleX(1.0600) skewX(0.5deg);">1.4</span>
<span style="left:633.95px;top:565.00px;font-size:10.0px;line-height:10.0px;font-weight:700;color:#1414f8;transform:scaleX(1.0600) skewX(0.5deg);">1.5</span>
<span style="left:694.12px;top:565.00px;font-size:10.0px;line-height:10.0px;font-weight:700;color:#1414f8;transform:scaleX(1.0600) skewX(0.5deg);">1.7</span>
<span style="left:754.28px;top:565.00px;font-size:10.0px;line-height:10.0px;font-weight:700;transform:scaleX(1.0600) skewX(0.5deg);">1.8</span>
<span style="left:814.44px;top:565.00px;font-size:10.0px;line-height:10.0px;font-weight:700;transform:scaleX(1.0600) skewX(0.5deg);">1.8</span>
<span style="left:874.61px;top:565.00px;font-size:10.0px;line-height:10.0px;font-weight:700;transform:scaleX(1.0600) skewX(0.5deg);">1.9</span>
<span style="left:934.77px;top:565.00px;font-size:10.0px;line-height:10.0px;font-weight:700;transform:scaleX(1.0600) skewX(0.5deg);">2.0</span>
<span style="left:994.94px;top:565.00px;font-size:10.0px;line-height:10.0px;font-weight:700;transform:scaleX(1.0600) skewX(0.5deg);">2.1</span>
<span style="left:1055.10px;top:565.00px;font-size:10.0px;line-height:10.0px;font-weight:700;transform:scaleX(1.0600) skewX(0.5deg);">2.2</span>
<span style="left:1115.26px;top:565.00px;font-size:10.0px;line-height:10.0px;font-weight:700;transform:scaleX(1.0600) skewX(0.5deg);">2.2</span>
<span style="left:1175.43px;top:565.00px;font-size:10.0px;line-height:10.0px;font-weight:700;transform:scaleX(1.0600) skewX(0.5deg);">2.3</span>
<span style="left:1235.59px;top:565.00px;font-size:10.0px;line-height:10.0px;font-weight:700;transform:scaleX(1.0600) skewX(0.5deg);">2.4</span>
<span style="left:1295.76px;top:565.00px;font-size:10.0px;line-height:10.0px;font-weight:700;transform:scaleX(1.0600) skewX(0.5deg);">2.5</span>
<span style="left:71.10px;top:580.00px;font-size:10.0px;line-height:10.0px;transform:scaleX(1.0352) skewX(0.5deg);">Price</span>
<span style="left:360.74px;top:580.00px;font-size:10.0px;line-height:10.0px;transform:scaleX(1.0270) skewX(0.5deg);">$</span>
<span style="left:424.52px;top:580.00px;font-size:10.0px;line-height:10.0px;color:#1414f8;transform:scaleX(0.9900) skewX(0.5deg);">2.5%</span>
<span style="left:550.65px;top:580.00px;font-size:10.0px;line-height:10.0px;color:#1414f8;transform:scaleX(1.0600) skewX(0.5deg);">17,250.0</span>
<span style="left:610.82px;top:580.00px;font-size:10.0px;line-height:10.0px;color:#1414f8;transform:scaleX(1.0600) skewX(0.5deg);">18,000.0</span>
<span style="left:670.98px;top:580.00px;font-size:10.0px;line-height:10.0px;color:#1414f8;transform:scaleX(1.0600) skewX(0.5deg);">18,900.0</span>
<span style="left:727.75px;top:580.00px;font-size:10.0px;line-height:10.0px;transform:scaleX(1.0600) skewX(0.5deg);">19,372.5</span>
<span style="left:787.91px;top:580.00px;font-size:10.0px;line-height:10.0px;transform:scaleX(1.0600) skewX(0.5deg);">19,856.8</span>
<span style="left:848.07px;top:580.00px;font-size:10.0px;line-height:10.0px;transform:scaleX(1.0600) skewX(0.5deg);">20,353.2</span>
<span style="left:908.24px;top:580.00px;font-size:10.0px;line-height:10.0px;transform:scaleX(1.0600) skewX(0.5deg);">20,862.1</span>
<span style="left:968.40px;top:580.00px;font-size:10.0px;line-height:10.0px;transform:scaleX(1.0600) skewX(0.5deg);">21,383.6</span>
<span style="left:1028.57px;top:580.00px;font-size:10.0px;line-height:10.0px;transform:scaleX(1.0600) skewX(0.5deg);">21,918.2</span>
<span style="left:1088.73px;top:580.00px;font-size:10.0px;line-height:10.0px;transform:scaleX(1.0600) skewX(0.5deg);">22,466.2</span>
<span style="left:1148.89px;top:580.00px;font-size:10.0px;line-height:10.0px;transform:scaleX(1.0600) skewX(0.5deg);">23,027.8</span>
<span style="left:1209.06px;top:580.00px;font-size:10.0px;line-height:10.0px;transform:scaleX(1.0600) skewX(0.5deg);">23,603.5</span>
<span style="left:1269.22px;top:580.00px;font-size:10.0px;line-height:10.0px;transform:scaleX(1.0600) skewX(0.5deg);">24,193.6</span>
<span style="left:71.10px;top:595.00px;font-size:10.0px;line-height:10.0px;font-weight:700;transform:scaleX(0.9672) skewX(0.5deg);">Revenues</span>
<span style="left:347.85px;top:595.00px;font-size:10.0px;line-height:10.0px;font-weight:700;transform:scaleX(1.0435) skewX(0.5deg);">$000&#x27;s</span>
<span style="left:547.25px;top:595.00px;font-size:10.0px;line-height:10.0px;font-weight:700;transform:scaleX(1.0600) skewX(0.5deg);">24,667.5</span>
<span style="left:607.42px;top:595.00px;font-size:10.0px;line-height:10.0px;font-weight:700;transform:scaleX(1.0600) skewX(0.5deg);">26,991.2</span>
<span style="left:667.58px;top:595.00px;font-size:10.0px;line-height:10.0px;font-weight:700;transform:scaleX(1.0600) skewX(0.5deg);">32,217.9</span>
<span style="left:727.75px;top:595.00px;font-size:10.0px;line-height:10.0px;font-weight:700;transform:scaleX(1.0600) skewX(0.5deg);">34,344.3</span>
<span style="left:788.51px;top:595.00px;font-size:10.0px;line-height:10.0px;font-weight:700;transform:scaleX(1.0600) skewX(0.5deg);">36,611.1</span>
<span style="left:848.07px;top:595.00px;font-size:10.0px;line-height:10.0px;font-weight:700;transform:scaleX(1.0600) skewX(0.5deg);">39,027.4</span>
<span style="left:908.24px;top:595.00px;font-size:10.0px;line-height:10.0px;font-weight:700;transform:scaleX(1.0600) skewX(0.5deg);">41,603.2</span>
<span style="left:968.40px;top:595.00px;font-size:10.0px;line-height:10.0px;font-weight:700;transform:scaleX(1.0600) skewX(0.5deg);">44,349.0</span>
<span style="left:1028.57px;top:595.00px;font-size:10.0px;line-height:10.0px;font-weight:700;transform:scaleX(1.0600) skewX(0.5deg);">47,276.0</span>
<span style="left:1088.73px;top:595.00px;font-size:10.0px;line-height:10.0px;font-weight:700;transform:scaleX(1.0600) skewX(0.5deg);">50,396.3</span>
<span style="left:1148.89px;top:595.00px;font-size:10.0px;line-height:10.0px;font-weight:700;transform:scaleX(1.0600) skewX(0.5deg);">53,722.4</span>
<span style="left:1209.06px;top:595.00px;font-size:10.0px;line-height:10.0px;font-weight:700;transform:scaleX(1.0600) skewX(0.5deg);">57,268.1</span>
<span style="left:1269.22px;top:595.00px;font-size:10.0px;line-height:10.0px;font-weight:700;transform:scaleX(1.0600) skewX(0.5deg);">61,047.8</span>
<span style="left:71.10px;top:609.00px;font-size:10.0px;line-height:10.0px;font-style:italic;transform:scaleX(1.0300) skewX(0.5deg);">Growth</span>
<span style="left:349.35px;top:609.00px;font-size:10.0px;line-height:10.0px;font-style:italic;transform:scaleX(0.9733) skewX(0.5deg);">Var. %</span>
<span style="left:682.48px;top:609.00px;font-size:10.0px;line-height:10.0px;font-style:italic;transform:scaleX(0.9900) skewX(0.5deg);">19.4%</span>
<span style="left:748.15px;top:609.00px;font-size:10.0px;line-height:10.0px;font-style:italic;transform:scaleX(0.9900) skewX(0.5deg);">6.6%</span>
<span style="left:808.32px;top:609.00px;font-size:10.0px;line-height:10.0px;font-style:italic;transform:scaleX(0.9900) skewX(0.5deg);">6.6%</span>
<span style="left:868.48px;top:609.00px;font-size:10.0px;line-height:10.0px;font-style:italic;transform:scaleX(0.9900) skewX(0.5deg);">6.6%</span>
<span style="left:928.64px;top:609.00px;font-size:10.0px;line-height:10.0px;font-style:italic;transform:scaleX(0.9900) skewX(0.5deg);">6.6%</span>
<span style="left:988.81px;top:609.00px;font-size:10.0px;line-height:10.0px;font-style:italic;transform:scaleX(0.9900) skewX(0.5deg);">6.6%</span>
<span style="left:1048.97px;top:609.00px;font-size:10.0px;line-height:10.0px;font-style:italic;transform:scaleX(0.9900) skewX(0.5deg);">6.6%</span>
<span style="left:1109.14px;top:609.00px;font-size:10.0px;line-height:10.0px;font-style:italic;transform:scaleX(0.9900) skewX(0.5deg);">6.6%</span>
<span style="left:1169.30px;top:609.00px;font-size:10.0px;line-height:10.0px;font-style:italic;transform:scaleX(0.9900) skewX(0.5deg);">6.6%</span>
<span style="left:1229.46px;top:609.00px;font-size:10.0px;line-height:10.0px;font-style:italic;transform:scaleX(0.9900) skewX(0.5deg);">6.6%</span>
<span style="left:1289.63px;top:609.00px;font-size:10.0px;line-height:10.0px;font-style:italic;transform:scaleX(0.9900) skewX(0.5deg);">6.6%</span>
<span style="left:71.10px;top:639.00px;font-size:10.0px;line-height:10.0px;transform:scaleX(1.0608) skewX(0.5deg);">Cost of Vehicle (incl. D&amp;A)</span>
<span style="left:347.85px;top:639.00px;font-size:10.0px;line-height:10.0px;transform:scaleX(1.0804) skewX(0.5deg);">$000&#x27;s</span>
<span style="left:404.05px;top:638.00px;font-size:10.0px;line-height:10.0px;font-weight:700;transform:scaleX(0.9368) skewX(0.5deg);">% of LoB D&amp;A</span>
<span style="left:547.25px;top:639.00px;font-size:10.0px;line-height:10.0px;color:#1414f8;transform:scaleX(1.0600) skewX(0.5deg);">20,343.0</span>
<span style="left:607.42px;top:639.00px;font-size:10.0px;line-height:10.0px;color:#1414f8;transform:scaleX(1.0600) skewX(0.5deg);">23,432.0</span>
<span style="left:667.58px;top:639.00px;font-size:10.0px;line-height:10.0px;color:#1414f8;transform:scaleX(1.0600) skewX(0.5deg);">26,570.0</span>
<span style="left:727.75px;top:639.00px;font-size:10.0px;line-height:10.0px;transform:scaleX(1.0600) skewX(0.5deg);">29,202.8</span>
<span style="left:787.91px;top:639.00px;font-size:10.0px;line-height:10.0px;transform:scaleX(1.0600) skewX(0.5deg);">31,531.0</span>
<span style="left:848.07px;top:639.00px;font-size:10.0px;line-height:10.0px;transform:scaleX(1.0600) skewX(0.5deg);">33,948.7</span>
<span style="left:908.24px;top:639.00px;font-size:10.0px;line-height:10.0px;transform:scaleX(1.0600) skewX(0.5deg);">36,518.6</span>
<span style="left:968.40px;top:639.00px;font-size:10.0px;line-height:10.0px;transform:scaleX(1.0600) skewX(0.5deg);">39,209.3</span>
<span style="left:1028.57px;top:639.00px;font-size:10.0px;line-height:10.0px;transform:scaleX(1.0600) skewX(0.5deg);">41,897.3</span>
<span style="left:1088.73px;top:639.00px;font-size:10.0px;line-height:10.0px;transform:scaleX(1.0600) skewX(0.5deg);">44,685.0</span>
<span style="left:1148.89px;top:639.00px;font-size:10.0px;line-height:10.0px;transform:scaleX(1.0600) skewX(0.5deg);">47,568.0</span>
<span style="left:1209.06px;top:639.00px;font-size:10.0px;line-height:10.0px;transform:scaleX(1.0600) skewX(0.5deg);">50,732.2</span>
<span style="left:1270.02px;top:639.00px;font-size:10.0px;line-height:10.0px;transform:scaleX(1.0600) skewX(0.5deg);">54,115.6</span>
<span style="left:71.10px;top:654.00px;font-size:10.0px;line-height:10.0px;transform:scaleX(0.9727) skewX(0.5deg);">D&amp;A in COGS</span>
<span style="left:347.85px;top:654.00px;font-size:10.0px;line-height:10.0px;transform:scaleX(1.0804) skewX(0.5deg);">$000&#x27;s</span>
<span style="left:424.52px;top:654.00px;font-size:10.0px;line-height:10.0px;color:#1414f8;transform:scaleX(0.9900) skewX(0.5deg);">5.0%</span>
<span style="left:567.89px;top:654.00px;font-size:10.0px;line-height:10.0px;transform:scaleX(1.0600) skewX(0.5deg);">34.5</span>
<span style="left:624.40px;top:654.00px;font-size:10.0px;line-height:10.0px;transform:scaleX(1.0600) skewX(0.5deg);">(32.7)</span>
<span style="left:684.56px;top:654.00px;font-size:10.0px;line-height:10.0px;transform:scaleX(1.0600) skewX(0.5deg);">(35.2)</span>
<span style="left:744.73px;top:654.00px;font-size:10.0px;line-height:10.0px;transform:scaleX(1.0600) skewX(0.5deg);">(34.6)</span>
<span style="left:804.89px;top:654.00px;font-size:10.0px;line-height:10.0px;transform:scaleX(1.0600) skewX(0.5deg);">(41.2)</span>
<span style="left:865.06px;top:654.00px;font-size:10.0px;line-height:10.0px;transform:scaleX(1.0600) skewX(0.5deg);">(48.1)</span>
<span style="left:925.22px;top:654.00px;font-size:10.0px;line-height:10.0px;transform:scaleX(1.0600) skewX(0.5deg);">(55.5)</span>
<span style="left:985.38px;top:654.00px;font-size:10.0px;line-height:10.0px;transform:scaleX(1.0600) skewX(0.5deg);">(63.4)</span>
<span style="left:1045.55px;top:654.00px;font-size:10.0px;line-height:10.0px;transform:scaleX(1.0600) skewX(0.5deg);">(71.7)</span>
<span style="left:1105.71px;top:654.00px;font-size:10.0px;line-height:10.0px;transform:scaleX(1.0600) skewX(0.5deg);">(80.6)</span>
<span style="left:1165.88px;top:654.00px;font-size:10.0px;line-height:10.0px;transform:scaleX(1.0600) skewX(0.5deg);">(90.0)</span>
<span style="left:1226.04px;top:654.00px;font-size:10.0px;line-height:10.0px;transform:scaleX(1.0600) skewX(0.5deg);">(94.1)</span>
<span style="left:1280.31px;top:654.00px;font-size:10.0px;line-height:10.0px;transform:scaleX(1.0600) skewX(0.5deg);">(104.2)</span>
<span style="left:71.10px;top:669.00px;font-size:10.0px;line-height:10.0px;font-weight:700;transform:scaleX(0.9372) skewX(0.5deg);">COGS (excl. D&amp;A)</span>
<span style="left:347.85px;top:669.00px;font-size:10.0px;line-height:10.0px;transform:scaleX(1.0804) skewX(0.5deg);">$000&#x27;s</span>
<span style="left:547.25px;top:669.00px;font-size:10.0px;line-height:10.0px;font-weight:700;transform:scaleX(1.0600) skewX(0.5deg);">20,377.5</span>
<span style="left:607.42px;top:669.00px;font-size:10.0px;line-height:10.0px;font-weight:700;transform:scaleX(1.0600) skewX(0.5deg);">23,399.4</span>
<span style="left:667.58px;top:669.00px;font-size:10.0px;line-height:10.0px;font-weight:700;transform:scaleX(1.0600) skewX(0.5deg);">26,534.8</span>
<span style="left:727.75px;top:669.00px;font-size:10.0px;line-height:10.0px;font-weight:700;transform:scaleX(1.0600) skewX(0.5deg);">29,168.2</span>
<span style="left:787.91px;top:669.00px;font-size:10.0px;line-height:10.0px;font-weight:700;transform:scaleX(1.0600) skewX(0.5deg);">31,489.8</span>
<span style="left:848.07px;top:669.00px;font-size:10.0px;line-height:10.0px;font-weight:700;transform:scaleX(1.0600) skewX(0.5deg);">33,900.6</span>
<span style="left:908.24px;top:669.00px;font-size:10.0px;line-height:10.0px;font-weight:700;transform:scaleX(1.0600) skewX(0.5deg);">36,463.0</span>
<span style="left:968.40px;top:669.00px;font-size:10.0px;line-height:10.0px;font-weight:700;transform:scaleX(1.0600) skewX(0.5deg);">39,145.9</span>
<span style="left:1028.57px;top:669.00px;font-size:10.0px;line-height:10.0px;font-weight:700;transform:scaleX(1.0600) skewX(0.5deg);">41,825.6</span>
<span style="left:1088.73px;top:669.00px;font-size:10.0px;line-height:10.0px;font-weight:700;transform:scaleX(1.0600) skewX(0.5deg);">44,604.5</span>
<span style="left:1148.89px;top:669.00px;font-size:10.0px;line-height:10.0px;font-weight:700;transform:scaleX(1.0600) skewX(0.5deg);">47,478.0</span>
<span style="left:1209.06px;top:669.00px;font-size:10.0px;line-height:10.0px;font-weight:700;transform:scaleX(1.0600) skewX(0.5deg);">50,638.1</span>
<span style="left:1269.82px;top:669.00px;font-size:10.0px;line-height:10.0px;font-weight:700;transform:scaleX(1.0600) skewX(0.5deg);">54,011.4</span>
<span style="left:400.05px;top:682.00px;font-size:10.0px;line-height:10.0px;font-weight:700;transform:scaleX(0.9322) skewX(0.5deg);">% Variab. COGS</span>
<span style="left:71.10px;top:698.00px;font-size:10.0px;line-height:10.0px;font-weight:700;transform:scaleX(0.9628) skewX(0.5deg);">Variable COGS (excl. D&amp;A)</span>
<span style="left:347.85px;top:698.00px;font-size:10.0px;line-height:10.0px;transform:scaleX(1.0804) skewX(0.5deg);">$000&#x27;s</span>
<span style="left:421.76px;top:698.00px;font-size:10.0px;line-height:10.0px;color:#1414f8;transform:scaleX(0.9900) skewX(0.5deg);">95.0%</span>
<span style="left:547.25px;top:698.00px;font-size:10.0px;line-height:10.0px;font-weight:700;transform:scaleX(1.0600) skewX(0.5deg);">19,358.6</span>
<span style="left:607.42px;top:698.00px;font-size:10.0px;line-height:10.0px;font-weight:700;transform:scaleX(1.0600) skewX(0.5deg);">22,229.4</span>
<span style="left:667.58px;top:698.00px;font-size:10.0px;line-height:10.0px;font-weight:700;transform:scaleX(1.0600) skewX(0.5deg);">25,208.1</span>
<span style="left:727.75px;top:698.00px;font-size:10.0px;line-height:10.0px;font-weight:700;transform:scaleX(1.0600) skewX(0.5deg);">27,763.1</span>
<span style="left:787.91px;top:698.00px;font-size:10.0px;line-height:10.0px;font-weight:700;transform:scaleX(1.0600) skewX(0.5deg);">30,028.6</span>
<span style="left:848.07px;top:698.00px;font-size:10.0px;line-height:10.0px;font-weight:700;transform:scaleX(1.0600) skewX(0.5deg);">32,385.3</span>
<span style="left:908.24px;top:698.00px;font-size:10.0px;line-height:10.0px;font-weight:700;transform:scaleX(1.0600) skewX(0.5deg);">34,893.2</span>
<span style="left:968.40px;top:698.00px;font-size:10.0px;line-height:10.0px;font-weight:700;transform:scaleX(1.0600) skewX(0.5deg);">37,522.7</span>
<span style="left:1028.57px;top:698.00px;font-size:10.0px;line-height:10.0px;font-weight:700;transform:scaleX(1.0600) skewX(0.5deg);">40,155.3</span>
<span style="left:1088.73px;top:698.00px;font-size:10.0px;line-height:10.0px;font-weight:700;transform:scaleX(1.0600) skewX(0.5deg);">42,889.1</span>
<span style="left:1148.89px;top:698.00px;font-size:10.0px;line-height:10.0px;font-weight:700;transform:scaleX(1.0600) skewX(0.5deg);">45,719.8</span>
<span style="left:1209.06px;top:698.00px;font-size:10.0px;line-height:10.0px;font-weight:700;transform:scaleX(1.0600) skewX(0.5deg);">48,832.4</span>
<span style="left:1269.22px;top:698.00px;font-size:10.0px;line-height:10.0px;font-weight:700;transform:scaleX(1.0600) skewX(0.5deg);">52,156.9</span>
<span style="left:71.10px;top:713.00px;font-size:10.0px;line-height:10.0px;font-style:italic;transform:scaleX(0.9789) skewX(0.5deg);">Average COGS per vehicle</span>
<span style="left:360.85px;top:713.00px;font-size:10.0px;line-height:10.0px;font-style:italic;transform:scaleX(0.9900) skewX(0.5deg);">$</span>
<span style="left:404.05px;top:712.00px;font-size:10.0px;line-height:10.0px;font-weight:700;transform:scaleX(0.9069) skewX(0.5deg);">% Fixed COGS</span>
<span style="left:547.25px;top:713.00px;font-size:10.0px;line-height:10.0px;font-style:italic;transform:scaleX(1.0600) skewX(0.5deg);">13,537.5</span>
<span style="left:607.42px;top:713.00px;font-size:10.0px;line-height:10.0px;font-style:italic;transform:scaleX(1.0600) skewX(0.5deg);">14,824.4</span>
<span style="left:667.58px;top:713.00px;font-size:10.0px;line-height:10.0px;font-style:italic;transform:scaleX(1.0600) skewX(0.5deg);">14,787.8</span>
<span style="left:727.75px;top:713.00px;font-size:10.0px;line-height:10.0px;font-style:italic;transform:scaleX(1.0600) skewX(0.5deg);">15,660.3</span>
<span style="left:787.91px;top:713.00px;font-size:10.0px;line-height:10.0px;font-style:italic;transform:scaleX(1.0600) skewX(0.5deg);">16,286.7</span>
<span style="left:848.07px;top:713.00px;font-size:10.0px;line-height:10.0px;font-style:italic;transform:scaleX(1.0600) skewX(0.5deg);">16,889.3</span>
<span style="left:908.24px;top:713.00px;font-size:10.0px;line-height:10.0px;font-style:italic;transform:scaleX(1.0600) skewX(0.5deg);">17,497.3</span>
<span style="left:968.40px;top:713.00px;font-size:10.0px;line-height:10.0px;font-style:italic;transform:scaleX(1.0600) skewX(0.5deg);">18,092.2</span>
<span style="left:1028.57px;top:713.00px;font-size:10.0px;line-height:10.0px;font-style:italic;transform:scaleX(1.0600) skewX(0.5deg);">18,616.9</span>
<span style="left:1089.53px;top:713.00px;font-size:10.0px;line-height:10.0px;font-style:italic;transform:scaleX(1.0600) skewX(0.5deg);">19,119.5</span>
<span style="left:1148.89px;top:713.00px;font-size:10.0px;line-height:10.0px;font-style:italic;transform:scaleX(1.0600) skewX(0.5deg);">19,597.5</span>
<span style="left:1209.06px;top:713.00px;font-size:10.0px;line-height:10.0px;font-style:italic;transform:scaleX(1.0600) skewX(0.5deg);">20,126.7</span>
<span style="left:1269.22px;top:713.00px;font-size:10.0px;line-height:10.0px;font-style:italic;transform:scaleX(1.0600) skewX(0.5deg);">20,670.1</span>
<span style="left:71.10px;top:728.00px;font-size:10.0px;line-height:10.0px;font-weight:700;transform:scaleX(0.9505) skewX(0.5deg);">Fixed COGS (excl. D&amp;A)</span>
<span style="left:347.85px;top:728.00px;font-size:10.0px;line-height:10.0px;transform:scaleX(1.0804) skewX(0.5deg);">$000&#x27;s</span>
<span style="left:424.52px;top:728.00px;font-size:10.0px;line-height:10.0px;transform:scaleX(0.9900) skewX(0.5deg);">5.0%</span>
<span style="left:553.15px;top:728.00px;font-size:10.0px;line-height:10.0px;font-weight:700;transform:scaleX(1.0600) skewX(0.5deg);">1,018.9</span>
<span style="left:613.31px;top:728.00px;font-size:10.0px;line-height:10.0px;font-weight:700;transform:scaleX(1.0600) skewX(0.5deg);">1,170.0</span>
<span style="left:673.48px;top:728.00px;font-size:10.0px;line-height:10.0px;font-weight:700;transform:scaleX(1.0600) skewX(0.5deg);">1,326.7</span>
<span style="left:733.64px;top:728.00px;font-size:10.0px;line-height:10.0px;font-weight:700;transform:scaleX(1.0600) skewX(0.5deg);">1,405.0</span>
<span style="left:793.81px;top:728.00px;font-size:10.0px;line-height:10.0px;font-weight:700;transform:scaleX(1.0600) skewX(0.5deg);">1,461.2</span>
<span style="left:853.97px;top:728.00px;font-size:10.0px;line-height:10.0px;font-weight:700;transform:scaleX(1.0600) skewX(0.5deg);">1,515.3</span>
<span style="left:914.13px;top:728.00px;font-size:10.0px;line-height:10.0px;font-weight:700;transform:scaleX(1.0600) skewX(0.5deg);">1,569.8</span>
<span style="left:974.30px;top:728.00px;font-size:10.0px;line-height:10.0px;font-weight:700;transform:scaleX(1.0600) skewX(0.5deg);">1,623.2</span>
<span style="left:1034.46px;top:728.00px;font-size:10.0px;line-height:10.0px;font-weight:700;transform:scaleX(1.0600) skewX(0.5deg);">1,670.3</span>
<span style="left:1094.63px;top:728.00px;font-size:10.0px;line-height:10.0px;font-weight:700;transform:scaleX(1.0600) skewX(0.5deg);">1,715.4</span>
<span style="left:1154.79px;top:728.00px;font-size:10.0px;line-height:10.0px;font-weight:700;transform:scaleX(1.0600) skewX(0.5deg);">1,758.3</span>
<span style="left:1214.95px;top:728.00px;font-size:10.0px;line-height:10.0px;font-weight:700;transform:scaleX(1.0600) skewX(0.5deg);">1,805.7</span>
<span style="left:1275.12px;top:728.00px;font-size:10.0px;line-height:10.0px;font-weight:700;transform:scaleX(1.0600) skewX(0.5deg);">1,854.5</span>
<span style="left:71.10px;top:743.00px;font-size:10.0px;line-height:10.0px;font-style:italic;transform:scaleX(1.0300) skewX(0.5deg);">Growth</span>
<span style="left:349.35px;top:743.00px;font-size:10.0px;line-height:10.0px;font-style:italic;transform:scaleX(0.9733) skewX(0.5deg);">Var. %</span>
<span style="left:682.48px;top:743.00px;font-size:10.0px;line-height:10.0px;font-style:italic;transform:scaleX(0.9900) skewX(0.5deg);">13.4%</span>
<span style="left:748.15px;top:743.00px;font-size:10.0px;line-height:10.0px;font-style:italic;transform:scaleX(0.9900) skewX(0.5deg);">5.9%</span>
<span style="left:808.32px;top:743.00px;font-size:10.0px;line-height:10.0px;font-style:italic;transform:scaleX(0.9900) skewX(0.5deg);">4.0%</span>
<span style="left:868.48px;top:743.00px;font-size:10.0px;line-height:10.0px;font-style:italic;transform:scaleX(0.9900) skewX(0.5deg);">3.7%</span>
<span style="left:928.64px;top:743.00px;font-size:10.0px;line-height:10.0px;font-style:italic;transform:scaleX(0.9900) skewX(0.5deg);">3.6%</span>
<span style="left:988.81px;top:743.00px;font-size:10.0px;line-height:10.0px;font-style:italic;transform:scaleX(0.9900) skewX(0.5deg);">3.4%</span>
<span style="left:1048.97px;top:743.00px;font-size:10.0px;line-height:10.0px;font-style:italic;transform:scaleX(0.9900) skewX(0.5deg);">2.9%</span>
<span style="left:1109.14px;top:743.00px;font-size:10.0px;line-height:10.0px;font-style:italic;transform:scaleX(0.9900) skewX(0.5deg);">2.7%</span>
<span style="left:1169.30px;top:743.00px;font-size:10.0px;line-height:10.0px;font-style:italic;transform:scaleX(0.9900) skewX(0.5deg);">2.5%</span>
<span style="left:1229.46px;top:743.00px;font-size:10.0px;line-height:10.0px;font-style:italic;transform:scaleX(0.9900) skewX(0.5deg);">2.7%</span>
<span style="left:1289.63px;top:743.00px;font-size:10.0px;line-height:10.0px;font-style:italic;transform:scaleX(0.9900) skewX(0.5deg);">2.7%</span>
<span style="left:71.10px;top:772.00px;font-size:10.0px;line-height:10.0px;transform:scaleX(1.0204) skewX(0.5deg);">SG&amp;A (incl. D&amp;A)</span>
<span style="left:347.85px;top:772.00px;font-size:10.0px;line-height:10.0px;transform:scaleX(1.0804) skewX(0.5deg);">$000&#x27;s</span>
<span style="left:404.05px;top:771.00px;font-size:10.0px;line-height:10.0px;font-weight:700;transform:scaleX(0.9368) skewX(0.5deg);">% of LoB D&amp;A</span>
<span style="left:561.99px;top:772.00px;font-size:10.0px;line-height:10.0px;color:#1414f8;transform:scaleX(1.0600) skewX(0.5deg);">825.0</span>
<span style="left:622.16px;top:772.00px;font-size:10.0px;line-height:10.0px;color:#1414f8;transform:scaleX(1.0600) skewX(0.5deg);">987.0</span>
<span style="left:682.32px;top:772.00px;font-size:10.0px;line-height:10.0px;color:#1414f8;transform:scaleX(1.0600) skewX(0.5deg);">882.0</span>
<span style="left:742.49px;top:772.00px;font-size:10.0px;line-height:10.0px;transform:scaleX(1.0600) skewX(0.5deg);">883.6</span>
<span style="left:793.81px;top:772.00px;font-size:10.0px;line-height:10.0px;transform:scaleX(1.0600) skewX(0.5deg);">1,017.2</span>
<span style="left:853.97px;top:772.00px;font-size:10.0px;line-height:10.0px;transform:scaleX(1.0600) skewX(0.5deg);">1,158.3</span>
<span style="left:914.13px;top:772.00px;font-size:10.0px;line-height:10.0px;transform:scaleX(1.0600) skewX(0.5deg);">1,307.5</span>
<span style="left:974.30px;top:772.00px;font-size:10.0px;line-height:10.0px;transform:scaleX(1.0600) skewX(0.5deg);">1,465.1</span>
<span style="left:1034.46px;top:772.00px;font-size:10.0px;line-height:10.0px;transform:scaleX(1.0600) skewX(0.5deg);">1,630.9</span>
<span style="left:1094.63px;top:772.00px;font-size:10.0px;line-height:10.0px;transform:scaleX(1.0600) skewX(0.5deg);">1,806.3</span>
<span style="left:1154.79px;top:772.00px;font-size:10.0px;line-height:10.0px;transform:scaleX(1.0600) skewX(0.5deg);">1,991.7</span>
<span style="left:1214.95px;top:772.00px;font-size:10.0px;line-height:10.0px;transform:scaleX(1.0600) skewX(0.5deg);">2,077.6</span>
<span style="left:1275.12px;top:772.00px;font-size:10.0px;line-height:10.0px;transform:scaleX(1.0600) skewX(0.5deg);">2,277.4</span>
<span style="left:71.10px;top:787.00px;font-size:10.0px;line-height:10.0px;transform:scaleX(1.0091) skewX(0.5deg);">D&amp;A in SG&amp;A</span>
<span style="left:347.85px;top:787.00px;font-size:10.0px;line-height:10.0px;transform:scaleX(1.0804) skewX(0.5deg);">$000&#x27;s</span>
<span style="left:421.76px;top:787.00px;font-size:10.0px;line-height:10.0px;transform:scaleX(0.9900) skewX(0.5deg);">95.0%</span>
<span style="left:558.34px;top:787.00px;font-size:10.0px;line-height:10.0px;transform:scaleX(1.0600) skewX(0.5deg);">(655.5)</span>
<span style="left:618.50px;top:787.00px;font-size:10.0px;line-height:10.0px;transform:scaleX(1.0600) skewX(0.5deg);">(620.4)</span>
<span style="left:678.67px;top:787.00px;font-size:10.0px;line-height:10.0px;transform:scaleX(1.0600) skewX(0.5deg);">(668.8)</span>
<span style="left:738.83px;top:787.00px;font-size:10.0px;line-height:10.0px;transform:scaleX(1.0600) skewX(0.5deg);">(657.8)</span>
<span style="left:799.00px;top:787.00px;font-size:10.0px;line-height:10.0px;transform:scaleX(1.0600) skewX(0.5deg);">(782.4)</span>
<span style="left:859.16px;top:787.00px;font-size:10.0px;line-height:10.0px;transform:scaleX(1.0600) skewX(0.5deg);">(914.8)</span>
<span style="left:910.48px;top:787.00px;font-size:10.0px;line-height:10.0px;transform:scaleX(1.0600) skewX(0.5deg);">(1,055.2)</span>
<span style="left:970.64px;top:787.00px;font-size:10.0px;line-height:10.0px;transform:scaleX(1.0600) skewX(0.5deg);">(1,204.2)</span>
<span style="left:1030.81px;top:787.00px;font-size:10.0px;line-height:10.0px;transform:scaleX(1.0600) skewX(0.5deg);">(1,362.5)</span>
<span style="left:1090.97px;top:787.00px;font-size:10.0px;line-height:10.0px;transform:scaleX(1.0600) skewX(0.5deg);">(1,530.6)</span>
<span style="left:1151.13px;top:787.00px;font-size:10.0px;line-height:10.0px;transform:scaleX(1.0600) skewX(0.5deg);">(1,709.2)</span>
<span style="left:1211.30px;top:787.00px;font-size:10.0px;line-height:10.0px;transform:scaleX(1.0600) skewX(0.5deg);">(1,787.5)</span>
<span style="left:1271.46px;top:787.00px;font-size:10.0px;line-height:10.0px;transform:scaleX(1.0600) skewX(0.5deg);">(1,979.4)</span>
<span style="left:71.10px;top:802.00px;font-size:10.0px;line-height:10.0px;font-weight:700;transform:scaleX(0.9580) skewX(0.5deg);">SG&amp;A (excl. D&amp;A)</span>
<span style="left:347.85px;top:802.00px;font-size:10.0px;line-height:10.0px;transform:scaleX(1.0804) skewX(0.5deg);">$000&#x27;s</span>
<span style="left:561.99px;top:802.00px;font-size:10.0px;line-height:10.0px;font-weight:700;transform:scaleX(1.0600) skewX(0.5deg);">169.5</span>
<span style="left:622.16px;top:802.00px;font-size:10.0px;line-height:10.0px;font-weight:700;transform:scaleX(1.0600) skewX(0.5deg);">366.7</span>
<span style="left:682.32px;top:802.00px;font-size:10.0px;line-height:10.0px;font-weight:700;transform:scaleX(1.0600) skewX(0.5deg);">213.2</span>
<span style="left:742.49px;top:802.00px;font-size:10.0px;line-height:10.0px;font-weight:700;transform:scaleX(1.0600) skewX(0.5deg);">225.8</span>
<span style="left:802.65px;top:802.00px;font-size:10.0px;line-height:10.0px;font-weight:700;transform:scaleX(1.0600) skewX(0.5deg);">234.8</span>
<span style="left:862.81px;top:802.00px;font-size:10.0px;line-height:10.0px;font-weight:700;transform:scaleX(1.0600) skewX(0.5deg);">243.5</span>
<span style="left:922.98px;top:802.00px;font-size:10.0px;line-height:10.0px;font-weight:700;transform:scaleX(1.0600) skewX(0.5deg);">252.3</span>
<span style="left:983.14px;top:802.00px;font-size:10.0px;line-height:10.0px;font-weight:700;transform:scaleX(1.0600) skewX(0.5deg);">260.8</span>
<span style="left:1043.31px;top:802.00px;font-size:10.0px;line-height:10.0px;font-weight:700;transform:scaleX(1.0600) skewX(0.5deg);">268.4</span>
<span style="left:1103.47px;top:802.00px;font-size:10.0px;line-height:10.0px;font-weight:700;transform:scaleX(1.0600) skewX(0.5deg);">275.7</span>
<span style="left:1163.63px;top:802.00px;font-size:10.0px;line-height:10.0px;font-weight:700;transform:scaleX(1.0600) skewX(0.5deg);">282.5</span>
<span style="left:1223.80px;top:802.00px;font-size:10.0px;line-height:10.0px;font-weight:700;transform:scaleX(1.0600) skewX(0.5deg);">290.2</span>
<span style="left:1283.96px;top:802.00px;font-size:10.0px;line-height:10.0px;font-weight:700;transform:scaleX(1.0600) skewX(0.5deg);">298.0</span>
<span style="left:71.10px;top:817.00px;font-size:10.0px;line-height:10.0px;font-style:italic;transform:scaleX(1.0300) skewX(0.5deg);">Growth</span>
<span style="left:349.35px;top:817.00px;font-size:10.0px;line-height:10.0px;font-style:italic;transform:scaleX(0.9733) skewX(0.5deg);">Var. %</span>
<span style="left:679.19px;top:817.00px;font-size:10.0px;line-height:10.0px;font-style:italic;transform:scaleX(0.9900) skewX(0.5deg);">-41.9%</span>
<span style="left:748.15px;top:817.00px;font-size:10.0px;line-height:10.0px;font-style:italic;transform:scaleX(0.9900) skewX(0.5deg);">5.9%</span>
<span style="left:808.32px;top:817.00px;font-size:10.0px;line-height:10.0px;font-style:italic;transform:scaleX(0.9900) skewX(0.5deg);">4.0%</span>
<span style="left:868.48px;top:817.00px;font-size:10.0px;line-height:10.0px;font-style:italic;transform:scaleX(0.9900) skewX(0.5deg);">3.7%</span>
<span style="left:928.64px;top:817.00px;font-size:10.0px;line-height:10.0px;font-style:italic;transform:scaleX(0.9900) skewX(0.5deg);">3.6%</span>
<span style="left:988.81px;top:817.00px;font-size:10.0px;line-height:10.0px;font-style:italic;transform:scaleX(0.9900) skewX(0.5deg);">3.4%</span>
<span style="left:1048.97px;top:817.00px;font-size:10.0px;line-height:10.0px;font-style:italic;transform:scaleX(0.9900) skewX(0.5deg);">2.9%</span>
<span style="left:1109.14px;top:817.00px;font-size:10.0px;line-height:10.0px;font-style:italic;transform:scaleX(0.9900) skewX(0.5deg);">2.7%</span>
<span style="left:1169.30px;top:817.00px;font-size:10.0px;line-height:10.0px;font-style:italic;transform:scaleX(0.9900) skewX(0.5deg);">2.5%</span>
<span style="left:1229.46px;top:817.00px;font-size:10.0px;line-height:10.0px;font-style:italic;transform:scaleX(0.9900) skewX(0.5deg);">2.7%</span>
<span style="left:1289.63px;top:817.00px;font-size:10.0px;line-height:10.0px;font-style:italic;transform:scaleX(0.9900) skewX(0.5deg);">2.7%</span>
<span style="left:71.10px;top:846.00px;font-size:10.0px;line-height:10.0px;font-weight:700;transform:scaleX(0.8755) skewX(0.5deg);">EBITDA</span>
<span style="left:347.85px;top:846.00px;font-size:10.0px;line-height:10.0px;font-weight:700;transform:scaleX(1.0435) skewX(0.5deg);">$000&#x27;s</span>
<span style="left:553.15px;top:846.00px;font-size:10.0px;line-height:10.0px;font-weight:700;transform:scaleX(1.0600) skewX(0.5deg);">4,120.5</span>
<span style="left:613.31px;top:846.00px;font-size:10.0px;line-height:10.0px;font-weight:700;transform:scaleX(1.0600) skewX(0.5deg);">3,225.2</span>
<span style="left:673.48px;top:846.00px;font-size:10.0px;line-height:10.0px;font-weight:700;transform:scaleX(1.0600) skewX(0.5deg);">5,469.9</span>
<span style="left:733.64px;top:846.00px;font-size:10.0px;line-height:10.0px;font-weight:700;transform:scaleX(1.0600) skewX(0.5deg);">4,950.4</span>
<span style="left:793.81px;top:846.00px;font-size:10.0px;line-height:10.0px;font-weight:700;transform:scaleX(1.0600) skewX(0.5deg);">4,886.4</span>
<span style="left:853.97px;top:846.00px;font-size:10.0px;line-height:10.0px;font-weight:700;transform:scaleX(1.0600) skewX(0.5deg);">4,883.3</span>
<span style="left:914.13px;top:846.00px;font-size:10.0px;line-height:10.0px;font-weight:700;transform:scaleX(1.0600) skewX(0.5deg);">4,887.9</span>
<span style="left:974.30px;top:846.00px;font-size:10.0px;line-height:10.0px;font-weight:700;transform:scaleX(1.0600) skewX(0.5deg);">4,942.2</span>
<span style="left:1034.46px;top:846.00px;font-size:10.0px;line-height:10.0px;font-weight:700;transform:scaleX(1.0600) skewX(0.5deg);">5,182.0</span>
<span style="left:1094.63px;top:846.00px;font-size:10.0px;line-height:10.0px;font-weight:700;transform:scaleX(1.0600) skewX(0.5deg);">5,516.1</span>
<span style="left:1154.79px;top:846.00px;font-size:10.0px;line-height:10.0px;font-weight:700;transform:scaleX(1.0600) skewX(0.5deg);">5,961.8</span>
<span style="left:1214.95px;top:846.00px;font-size:10.0px;line-height:10.0px;font-weight:700;transform:scaleX(1.0600) skewX(0.5deg);">6,339.8</span>
<span style="left:1275.12px;top:846.00px;font-size:10.0px;line-height:10.0px;font-weight:700;transform:scaleX(1.0600) skewX(0.5deg);">6,738.4</span>
<span style="left:71.10px;top:861.00px;font-size:10.0px;line-height:10.0px;font-style:italic;transform:scaleX(0.9957) skewX(0.5deg);">EBITDA Margin</span>
<span style="left:349.35px;top:861.00px;font-size:10.0px;line-height:10.0px;font-style:italic;transform:scaleX(0.9733) skewX(0.5deg);">Var. %</span>
<span style="left:562.15px;top:861.00px;font-size:10.0px;line-height:10.0px;font-style:italic;transform:scaleX(0.9900) skewX(0.5deg);">16.7%</span>
<span style="left:623.04px;top:861.00px;font-size:10.0px;line-height:10.0px;font-style:italic;transform:scaleX(0.9900) skewX(0.5deg);">11.9%</span>
<span style="left:682.48px;top:861.00px;font-size:10.0px;line-height:10.0px;font-style:italic;transform:scaleX(0.9900) skewX(0.5deg);">17.0%</span>
<span style="left:742.64px;top:861.00px;font-size:10.0px;line-height:10.0px;font-style:italic;transform:scaleX(0.9900) skewX(0.5deg);">14.4%</span>
<span style="left:802.81px;top:861.00px;font-size:10.0px;line-height:10.0px;font-style:italic;transform:scaleX(0.9900) skewX(0.5deg);">13.3%</span>
<span style="left:862.97px;top:861.00px;font-size:10.0px;line-height:10.0px;font-style:italic;transform:scaleX(0.9900) skewX(0.5deg);">12.5%</span>
<span style="left:923.86px;top:861.00px;font-size:10.0px;line-height:10.0px;font-style:italic;transform:scaleX(0.9900) skewX(0.5deg);">11.7%</span>
<span style="left:984.03px;top:861.00px;font-size:10.0px;line-height:10.0px;font-style:italic;transform:scaleX(0.9900) skewX(0.5deg);">11.1%</span>
<span style="left:1044.19px;top:861.00px;font-size:10.0px;line-height:10.0px;font-style:italic;transform:scaleX(0.9900) skewX(0.5deg);">11.0%</span>
<span style="left:1103.63px;top:861.00px;font-size:10.0px;line-height:10.0px;font-style:italic;transform:scaleX(0.9900) skewX(0.5deg);">10.9%</span>
<span style="left:1164.52px;top:861.00px;font-size:10.0px;line-height:10.0px;font-style:italic;transform:scaleX(0.9900) skewX(0.5deg);">11.1%</span>
<span style="left:1224.68px;top:861.00px;font-size:10.0px;line-height:10.0px;font-style:italic;transform:scaleX(0.9900) skewX(0.5deg);">11.1%</span>
<span style="left:1284.85px;top:861.00px;font-size:10.0px;line-height:10.0px;font-style:italic;transform:scaleX(0.9900) skewX(0.5deg);">11.0%</span>
<span style="left:400.80px;top:875.00px;font-size:10.0px;line-height:10.0px;font-weight:700;transform:scaleX(0.9792) skewX(0.5deg);">% of Total D&amp;A</span>
<span style="left:71.10px;top:891.00px;font-size:10.0px;line-height:10.0px;transform:scaleX(1.0116) skewX(0.5deg);">D&amp;A</span>
<span style="left:347.85px;top:891.00px;font-size:10.0px;line-height:10.0px;transform:scaleX(1.0804) skewX(0.5deg);">$000&#x27;s</span>
<span style="left:421.76px;top:891.00px;font-size:10.0px;line-height:10.0px;transform:scaleX(0.9900) skewX(0.5deg);">43.9%</span>
<span style="left:558.34px;top:891.00px;font-size:10.0px;line-height:10.0px;color:#1414f8;transform:scaleX(1.0600) skewX(0.5deg);">(690.0)</span>
<span style="left:618.50px;top:891.00px;font-size:10.0px;line-height:10.0px;color:#1414f8;transform:scaleX(1.0600) skewX(0.5deg);">(653.0)</span>
<span style="left:678.67px;top:891.00px;font-size:10.0px;line-height:10.0px;color:#1414f8;transform:scaleX(1.0600) skewX(0.5deg);">(704.0)</span>
<span style="left:738.83px;top:891.00px;font-size:10.0px;line-height:10.0px;transform:scaleX(1.0600) skewX(0.5deg);">(692.4)</span>
<span style="left:799.00px;top:891.00px;font-size:10.0px;line-height:10.0px;transform:scaleX(1.0600) skewX(0.5deg);">(823.5)</span>
<span style="left:859.16px;top:891.00px;font-size:10.0px;line-height:10.0px;transform:scaleX(1.0600) skewX(0.5deg);">(963.0)</span>
<span style="left:911.26px;top:891.00px;font-size:10.0px;line-height:10.0px;transform:scaleX(1.0600) skewX(0.5deg);">(1,110.8)</span>
<span style="left:970.64px;top:891.00px;font-size:10.0px;line-height:10.0px;transform:scaleX(1.0600) skewX(0.5deg);">(1,267.6)</span>
<span style="left:1030.81px;top:891.00px;font-size:10.0px;line-height:10.0px;transform:scaleX(1.0600) skewX(0.5deg);">(1,434.2)</span>
<span style="left:1091.75px;top:891.00px;font-size:10.0px;line-height:10.0px;transform:scaleX(1.0600) skewX(0.5deg);">(1,611.2)</span>
<span style="left:1151.13px;top:891.00px;font-size:10.0px;line-height:10.0px;transform:scaleX(1.0600) skewX(0.5deg);">(1,799.2)</span>
<span style="left:1211.30px;top:891.00px;font-size:10.0px;line-height:10.0px;transform:scaleX(1.0600) skewX(0.5deg);">(1,881.5)</span>
<span style="left:1271.46px;top:891.00px;font-size:10.0px;line-height:10.0px;transform:scaleX(1.0600) skewX(0.5deg);">(2,083.6)</span>
<span style="left:71.10px;top:906.00px;font-size:10.0px;line-height:10.0px;font-weight:700;transform:scaleX(0.8121) skewX(0.5deg);">EBIT</span>
<span style="left:347.85px;top:906.00px;font-size:10.0px;line-height:10.0px;font-weight:700;transform:scaleX(1.0435) skewX(0.5deg);">$000&#x27;s</span>
<span style="left:553.15px;top:906.00px;font-size:10.0px;line-height:10.0px;font-weight:700;transform:scaleX(1.0600) skewX(0.5deg);">3,430.5</span>
<span style="left:613.31px;top:906.00px;font-size:10.0px;line-height:10.0px;font-weight:700;transform:scaleX(1.0600) skewX(0.5deg);">2,572.2</span>
<span style="left:673.48px;top:906.00px;font-size:10.0px;line-height:10.0px;font-weight:700;transform:scaleX(1.0600) skewX(0.5deg);">4,765.9</span>
<span style="left:733.64px;top:906.00px;font-size:10.0px;line-height:10.0px;font-weight:700;transform:scaleX(1.0600) skewX(0.5deg);">4,258.0</span>
<span style="left:793.81px;top:906.00px;font-size:10.0px;line-height:10.0px;font-weight:700;transform:scaleX(1.0600) skewX(0.5deg);">4,062.9</span>
<span style="left:853.97px;top:906.00px;font-size:10.0px;line-height:10.0px;font-weight:700;transform:scaleX(1.0600) skewX(0.5deg);">3,920.4</span>
<span style="left:914.13px;top:906.00px;font-size:10.0px;line-height:10.0px;font-weight:700;transform:scaleX(1.0600) skewX(0.5deg);">3,777.1</span>
<span style="left:974.30px;top:906.00px;font-size:10.0px;line-height:10.0px;font-weight:700;transform:scaleX(1.0600) skewX(0.5deg);">3,674.6</span>
<span style="left:1034.46px;top:906.00px;font-size:10.0px;line-height:10.0px;font-weight:700;transform:scaleX(1.0600) skewX(0.5deg);">3,747.8</span>
<span style="left:1094.63px;top:906.00px;font-size:10.0px;line-height:10.0px;font-weight:700;transform:scaleX(1.0600) skewX(0.5deg);">3,904.9</span>
<span style="left:1154.79px;top:906.00px;font-size:10.0px;line-height:10.0px;font-weight:700;transform:scaleX(1.0600) skewX(0.5deg);">4,162.7</span>
<span style="left:1214.95px;top:906.00px;font-size:10.0px;line-height:10.0px;font-weight:700;transform:scaleX(1.0600) skewX(0.5deg);">4,458.3</span>
<span style="left:1275.12px;top:906.00px;font-size:10.0px;line-height:10.0px;font-weight:700;transform:scaleX(1.0600) skewX(0.5deg);">4,654.8</span>
<span style="left:71.10px;top:921.00px;font-size:10.0px;line-height:10.0px;font-style:italic;transform:scaleX(0.9842) skewX(0.5deg);">EBIT Margin</span>
<span style="left:349.35px;top:921.00px;font-size:10.0px;line-height:10.0px;font-style:italic;transform:scaleX(0.9733) skewX(0.5deg);">Var. %</span>
<span style="left:562.15px;top:921.00px;font-size:10.0px;line-height:10.0px;font-style:italic;transform:scaleX(0.9900) skewX(0.5deg);">13.9%</span>
<span style="left:627.82px;top:921.00px;font-size:10.0px;line-height:10.0px;font-style:italic;transform:scaleX(0.9900) skewX(0.5deg);">9.5%</span>
<span style="left:682.48px;top:921.00px;font-size:10.0px;line-height:10.0px;font-style:italic;transform:scaleX(0.9900) skewX(0.5deg);">14.8%</span>
<span style="left:742.64px;top:921.00px;font-size:10.0px;line-height:10.0px;font-style:italic;transform:scaleX(0.9900) skewX(0.5deg);">12.4%</span>
<span style="left:803.54px;top:921.00px;font-size:10.0px;line-height:10.0px;font-style:italic;transform:scaleX(0.9900) skewX(0.5deg);">11.1%</span>
<span style="left:862.97px;top:921.00px;font-size:10.0px;line-height:10.0px;font-style:italic;transform:scaleX(0.9900) skewX(0.5deg);">10.0%</span>
<span style="left:928.64px;top:921.00px;font-size:10.0px;line-height:10.0px;font-style:italic;transform:scaleX(0.9900) skewX(0.5deg);">9.1%</span>
<span style="left:988.81px;top:921.00px;font-size:10.0px;line-height:10.0px;font-style:italic;transform:scaleX(0.9900) skewX(0.5deg);">8.3%</span>
<span style="left:1048.97px;top:921.00px;font-size:10.0px;line-height:10.0px;font-style:italic;transform:scaleX(0.9900) skewX(0.5deg);">7.9%</span>
<span style="left:1109.14px;top:921.00px;font-size:10.0px;line-height:10.0px;font-style:italic;transform:scaleX(0.9900) skewX(0.5deg);">7.7%</span>
<span style="left:1169.30px;top:921.00px;font-size:10.0px;line-height:10.0px;font-style:italic;transform:scaleX(0.9900) skewX(0.5deg);">7.7%</span>
<span style="left:1229.46px;top:921.00px;font-size:10.0px;line-height:10.0px;font-style:italic;transform:scaleX(0.9900) skewX(0.5deg);">7.8%</span>
<span style="left:1289.63px;top:921.00px;font-size:10.0px;line-height:10.0px;font-style:italic;transform:scaleX(0.9900) skewX(0.5deg);">7.6%</span>
<span style="left:349.35px;top:965.00px;font-size:10.0px;line-height:10.0px;font-style:italic;transform:scaleX(0.9733) skewX(0.5deg);">Var. %</span>
<span style="left:407.60px;top:964.00px;font-size:10.0px;line-height:10.0px;font-weight:700;transform:scaleX(1.0016) skewX(0.5deg);">YoY Growth</span>
<span style="left:71.10px;top:980.00px;font-size:10.0px;line-height:10.0px;font-weight:700;transform:scaleX(0.9767) skewX(0.5deg);">Vehicles</span>
<span style="left:352.30px;top:980.00px;font-size:10.0px;line-height:10.0px;font-weight:700;transform:scaleX(1.0157) skewX(0.5deg);">000s</span>
<span style="left:424.52px;top:980.00px;font-size:10.0px;line-height:10.0px;color:#1414f8;transform:scaleX(0.9900) skewX(0.5deg);">4.0%</span>
<span style="left:573.79px;top:980.00px;font-size:10.0px;line-height:10.0px;font-weight:700;color:#1414f8;transform:scaleX(1.0600) skewX(0.5deg);">0.6</span>
<span style="left:633.95px;top:980.00px;font-size:10.0px;line-height:10.0px;font-weight:700;color:#1414f8;transform:scaleX(1.0600) skewX(0.5deg);">0.7</span>
<span style="left:694.12px;top:980.00px;font-size:10.0px;line-height:10.0px;font-weight:700;color:#1414f8;transform:scaleX(1.0600) skewX(0.5deg);">0.9</span>
<span style="left:754.28px;top:980.00px;font-size:10.0px;line-height:10.0px;font-weight:700;transform:scaleX(1.0600) skewX(0.5deg);">0.9</span>
<span style="left:814.44px;top:980.00px;font-size:10.0px;line-height:10.0px;font-weight:700;transform:scaleX(1.0600) skewX(0.5deg);">0.9</span>
<span style="left:874.61px;top:980.00px;font-size:10.0px;line-height:10.0px;font-weight:700;transform:scaleX(1.0600) skewX(0.5deg);">1.0</span>
<span style="left:934.77px;top:980.00px;font-size:10.0px;line-height:10.0px;font-weight:700;transform:scaleX(1.0600) skewX(0.5deg);">1.0</span>
<span style="left:994.94px;top:980.00px;font-size:10.0px;line-height:10.0px;font-weight:700;transform:scaleX(1.0600) skewX(0.5deg);">1.1</span>
<span style="left:1055.10px;top:980.00px;font-size:10.0px;line-height:10.0px;font-weight:700;transform:scaleX(1.0600) skewX(0.5deg);">1.1</span>
<span style="left:1115.26px;top:980.00px;font-size:10.0px;line-height:10.0px;font-weight:700;transform:scaleX(1.0600) skewX(0.5deg);">1.1</span>
<span style="left:1175.43px;top:980.00px;font-size:10.0px;line-height:10.0px;font-weight:700;transform:scaleX(1.0600) skewX(0.5deg);">1.2</span>
<span style="left:1235.59px;top:980.00px;font-size:10.0px;line-height:10.0px;font-weight:700;transform:scaleX(1.0600) skewX(0.5deg);">1.2</span>
<span style="left:1295.76px;top:980.00px;font-size:10.0px;line-height:10.0px;font-weight:700;transform:scaleX(1.0600) skewX(0.5deg);">1.3</span>
<span style="left:71.10px;top:995.00px;font-size:10.0px;line-height:10.0px;transform:scaleX(1.0352) skewX(0.5deg);">Price</span>
<span style="left:360.74px;top:995.00px;font-size:10.0px;line-height:10.0px;transform:scaleX(1.0270) skewX(0.5deg);">$</span>
<span style="left:424.52px;top:995.00px;font-size:10.0px;line-height:10.0px;color:#1414f8;transform:scaleX(0.9900) skewX(0.5deg);">2.5%</span>
<span style="left:550.65px;top:995.00px;font-size:10.0px;line-height:10.0px;color:#1414f8;transform:scaleX(1.0600) skewX(0.5deg);">25,100.0</span>
<span style="left:610.82px;top:995.00px;font-size:10.0px;line-height:10.0px;color:#1414f8;transform:scaleX(1.0600) skewX(0.5deg);">25,560.0</span>
<span style="left:670.98px;top:995.00px;font-size:10.0px;line-height:10.0px;color:#1414f8;transform:scaleX(1.0600) skewX(0.5deg);">26,700.0</span>
<span style="left:727.75px;top:995.00px;font-size:10.0px;line-height:10.0px;transform:scaleX(1.0600) skewX(0.5deg);">27,367.5</span>
<span style="left:787.91px;top:995.00px;font-size:10.0px;line-height:10.0px;transform:scaleX(1.0600) skewX(0.5deg);">28,051.7</span>
<span style="left:848.07px;top:995.00px;font-size:10.0px;line-height:10.0px;transform:scaleX(1.0600) skewX(0.5deg);">28,753.0</span>
<span style="left:908.24px;top:995.00px;font-size:10.0px;line-height:10.0px;transform:scaleX(1.0600) skewX(0.5deg);">29,471.8</span>
<span style="left:968.40px;top:995.00px;font-size:10.0px;line-height:10.0px;transform:scaleX(1.0600) skewX(0.5deg);">30,208.6</span>
<span style="left:1028.57px;top:995.00px;font-size:10.0px;line-height:10.0px;transform:scaleX(1.0600) skewX(0.5deg);">30,963.8</span>
<span style="left:1088.73px;top:995.00px;font-size:10.0px;line-height:10.0px;transform:scaleX(1.0600) skewX(0.5deg);">31,737.9</span>
<span style="left:1148.89px;top:995.00px;font-size:10.0px;line-height:10.0px;transform:scaleX(1.0600) skewX(0.5deg);">32,531.4</span>
<span style="left:1209.06px;top:995.00px;font-size:10.0px;line-height:10.0px;transform:scaleX(1.0600) skewX(0.5deg);">33,344.6</span>
<span style="left:1269.22px;top:995.00px;font-size:10.0px;line-height:10.0px;transform:scaleX(1.0600) skewX(0.5deg);">34,178.3</span>
<span style="left:71.10px;top:1009.00px;font-size:10.0px;line-height:10.0px;font-weight:700;transform:scaleX(0.9672) skewX(0.5deg);">Revenues</span>
<span style="left:347.85px;top:1009.00px;font-size:10.0px;line-height:10.0px;font-weight:700;transform:scaleX(1.0435) skewX(0.5deg);">$000&#x27;s</span>
<span style="left:547.25px;top:1009.00px;font-size:10.0px;line-height:10.0px;font-weight:700;transform:scaleX(1.0600) skewX(0.5deg);">16,139.3</span>
<span style="left:607.42px;top:1009.00px;font-size:10.0px;line-height:10.0px;font-weight:700;transform:scaleX(1.0600) skewX(0.5deg);">17,125.2</span>
<span style="left:667.58px;top:1009.00px;font-size:10.0px;line-height:10.0px;font-weight:700;transform:scaleX(1.0600) skewX(0.5deg);">23,229.0</span>
<span style="left:727.75px;top:1009.00px;font-size:10.0px;line-height:10.0px;font-weight:700;transform:scaleX(1.0600) skewX(0.5deg);">24,762.1</span>
<span style="left:787.91px;top:1009.00px;font-size:10.0px;line-height:10.0px;font-weight:700;transform:scaleX(1.0600) skewX(0.5deg);">26,396.4</span>
<span style="left:848.07px;top:1009.00px;font-size:10.0px;line-height:10.0px;font-weight:700;transform:scaleX(1.0600) skewX(0.5deg);">28,138.6</span>
<span style="left:908.24px;top:1009.00px;font-size:10.0px;line-height:10.0px;font-weight:700;transform:scaleX(1.0600) skewX(0.5deg);">29,995.7</span>
<span style="left:968.40px;top:1009.00px;font-size:10.0px;line-height:10.0px;font-weight:700;transform:scaleX(1.0600) skewX(0.5deg);">31,975.4</span>
<span style="left:1028.57px;top:1009.00px;font-size:10.0px;line-height:10.0px;font-weight:700;transform:scaleX(1.0600) skewX(0.5deg);">34,085.8</span>
<span style="left:1088.73px;top:1009.00px;font-size:10.0px;line-height:10.0px;font-weight:700;transform:scaleX(1.0600) skewX(0.5deg);">36,335.5</span>
<span style="left:1148.89px;top:1009.00px;font-size:10.0px;line-height:10.0px;font-weight:700;transform:scaleX(1.0600) skewX(0.5deg);">38,733.6</span>
<span style="left:1209.06px;top:1009.00px;font-size:10.0px;line-height:10.0px;font-weight:700;transform:scaleX(1.0600) skewX(0.5deg);">41,290.0</span>
<span style="left:1269.22px;top:1009.00px;font-size:10.0px;line-height:10.0px;font-weight:700;transform:scaleX(1.0600) skewX(0.5deg);">44,015.2</span>
<span style="left:71.10px;top:1024.00px;font-size:10.0px;line-height:10.0px;font-style:italic;transform:scaleX(1.0300) skewX(0.5deg);">Growth</span>
<span style="left:349.35px;top:1024.00px;font-size:10.0px;line-height:10.0px;font-style:italic;transform:scaleX(0.9733) skewX(0.5deg);">Var. %</span>
<span style="left:682.48px;top:1024.00px;font-size:10.0px;line-height:10.0px;font-style:italic;transform:scaleX(0.9900) skewX(0.5deg);">35.6%</span>
<span style="left:748.15px;top:1024.00px;font-size:10.0px;line-height:10.0px;font-style:italic;transform:scaleX(0.9900) skewX(0.5deg);">6.6%</span>
<span style="left:808.32px;top:1024.00px;font-size:10.0px;line-height:10.0px;font-style:italic;transform:scaleX(0.9900) skewX(0.5deg);">6.6%</span>
<span style="left:868.48px;top:1024.00px;font-size:10.0px;line-height:10.0px;font-style:italic;transform:scaleX(0.9900) skewX(0.5deg);">6.6%</span>
<span style="left:928.64px;top:1024.00px;font-size:10.0px;line-height:10.0px;font-style:italic;transform:scaleX(0.9900) skewX(0.5deg);">6.6%</span>
<span style="left:988.81px;top:1024.00px;font-size:10.0px;line-height:10.0px;font-style:italic;transform:scaleX(0.9900) skewX(0.5deg);">6.6%</span>
<span style="left:1048.97px;top:1024.00px;font-size:10.0px;line-height:10.0px;font-style:italic;transform:scaleX(0.9900) skewX(0.5deg);">6.6%</span>
<span style="left:1109.14px;top:1024.00px;font-size:10.0px;line-height:10.0px;font-style:italic;transform:scaleX(0.9900) skewX(0.5deg);">6.6%</span>
<span style="left:1169.30px;top:1024.00px;font-size:10.0px;line-height:10.0px;font-style:italic;transform:scaleX(0.9900) skewX(0.5deg);">6.6%</span>
<span style="left:1229.46px;top:1024.00px;font-size:10.0px;line-height:10.0px;font-style:italic;transform:scaleX(0.9900) skewX(0.5deg);">6.6%</span>
<span style="left:1289.63px;top:1024.00px;font-size:10.0px;line-height:10.0px;font-style:italic;transform:scaleX(0.9900) skewX(0.5deg);">6.6%</span>
<span style="left:71.10px;top:1054.00px;font-size:10.0px;line-height:10.0px;transform:scaleX(1.0592) skewX(0.5deg);">Cost of Vehicles (incl. D&amp;A)</span>
<span style="left:347.85px;top:1054.00px;font-size:10.0px;line-height:10.0px;transform:scaleX(1.0804) skewX(0.5deg);">$000&#x27;s</span>
<span style="left:404.05px;top:1052.00px;font-size:10.0px;line-height:10.0px;font-weight:700;transform:scaleX(0.9368) skewX(0.5deg);">% of LoB D&amp;A</span>
<span style="left:547.25px;top:1054.00px;font-size:10.0px;line-height:10.0px;color:#1414f8;transform:scaleX(1.0600) skewX(0.5deg);">14,235.0</span>
<span style="left:607.42px;top:1054.00px;font-size:10.0px;line-height:10.0px;color:#1414f8;transform:scaleX(1.0600) skewX(0.5deg);">15,245.0</span>
<span style="left:667.58px;top:1054.00px;font-size:10.0px;line-height:10.0px;color:#1414f8;transform:scaleX(1.0600) skewX(0.5deg);">19,775.0</span>
<span style="left:727.75px;top:1054.00px;font-size:10.0px;line-height:10.0px;transform:scaleX(1.0600) skewX(0.5deg);">21,734.3</span>
<span style="left:787.91px;top:1054.00px;font-size:10.0px;line-height:10.0px;transform:scaleX(1.0600) skewX(0.5deg);">23,467.3</span>
<span style="left:848.07px;top:1054.00px;font-size:10.0px;line-height:10.0px;transform:scaleX(1.0600) skewX(0.5deg);">25,266.8</span>
<span style="left:908.24px;top:1054.00px;font-size:10.0px;line-height:10.0px;transform:scaleX(1.0600) skewX(0.5deg);">27,179.7</span>
<span style="left:968.40px;top:1054.00px;font-size:10.0px;line-height:10.0px;transform:scaleX(1.0600) skewX(0.5deg);">29,182.5</span>
<span style="left:1028.57px;top:1054.00px;font-size:10.0px;line-height:10.0px;transform:scaleX(1.0600) skewX(0.5deg);">31,183.3</span>
<span style="left:1088.73px;top:1054.00px;font-size:10.0px;line-height:10.0px;transform:scaleX(1.0600) skewX(0.5deg);">33,258.4</span>
<span style="left:1148.89px;top:1054.00px;font-size:10.0px;line-height:10.0px;transform:scaleX(1.0600) skewX(0.5deg);">35,404.3</span>
<span style="left:1209.06px;top:1054.00px;font-size:10.0px;line-height:10.0px;transform:scaleX(1.0600) skewX(0.5deg);">37,759.3</span>
<span style="left:1269.22px;top:1054.00px;font-size:10.0px;line-height:10.0px;transform:scaleX(1.0600) skewX(0.5deg);">40,277.7</span>
<span style="left:71.10px;top:1069.00px;font-size:10.0px;line-height:10.0px;transform:scaleX(0.9727) skewX(0.5deg);">D&amp;A in COGS</span>
<span style="left:347.85px;top:1069.00px;font-size:10.0px;line-height:10.0px;transform:scaleX(1.0804) skewX(0.5deg);">$000&#x27;s</span>
<span style="left:424.52px;top:1069.00px;font-size:10.0px;line-height:10.0px;color:#1414f8;transform:scaleX(0.9900) skewX(0.5deg);">5.0%</span>
<span style="left:564.24px;top:1069.00px;font-size:10.0px;line-height:10.0px;transform:scaleX(1.0600) skewX(0.5deg);">(20.2)</span>
<span style="left:624.40px;top:1069.00px;font-size:10.0px;line-height:10.0px;transform:scaleX(1.0600) skewX(0.5deg);">(25.4)</span>
<span style="left:684.56px;top:1069.00px;font-size:10.0px;line-height:10.0px;transform:scaleX(1.0600) skewX(0.5deg);">(28.0)</span>
<span style="left:744.73px;top:1069.00px;font-size:10.0px;line-height:10.0px;transform:scaleX(1.0600) skewX(0.5deg);">(27.5)</span>
<span style="left:804.89px;top:1069.00px;font-size:10.0px;line-height:10.0px;transform:scaleX(1.0600) skewX(0.5deg);">(32.7)</span>
<span style="left:865.06px;top:1069.00px;font-size:10.0px;line-height:10.0px;transform:scaleX(1.0600) skewX(0.5deg);">(38.2)</span>
<span style="left:925.22px;top:1069.00px;font-size:10.0px;line-height:10.0px;transform:scaleX(1.0600) skewX(0.5deg);">(44.1)</span>
<span style="left:985.38px;top:1069.00px;font-size:10.0px;line-height:10.0px;transform:scaleX(1.0600) skewX(0.5deg);">(50.3)</span>
<span style="left:1045.55px;top:1069.00px;font-size:10.0px;line-height:10.0px;transform:scaleX(1.0600) skewX(0.5deg);">(56.9)</span>
<span style="left:1105.71px;top:1069.00px;font-size:10.0px;line-height:10.0px;transform:scaleX(1.0600) skewX(0.5deg);">(64.0)</span>
<span style="left:1165.88px;top:1069.00px;font-size:10.0px;line-height:10.0px;transform:scaleX(1.0600) skewX(0.5deg);">(71.4)</span>
<span style="left:1226.04px;top:1069.00px;font-size:10.0px;line-height:10.0px;transform:scaleX(1.0600) skewX(0.5deg);">(74.7)</span>
<span style="left:1286.20px;top:1069.00px;font-size:10.0px;line-height:10.0px;transform:scaleX(1.0600) skewX(0.5deg);">(82.7)</span>
<span style="left:71.10px;top:1084.00px;font-size:10.0px;line-height:10.0px;font-weight:700;transform:scaleX(0.9372) skewX(0.5deg);">COGS (excl. D&amp;A)</span>
<span style="left:347.85px;top:1084.00px;font-size:10.0px;line-height:10.0px;transform:scaleX(1.0804) skewX(0.5deg);">$000&#x27;s</span>
<span style="left:547.25px;top:1084.00px;font-size:10.0px;line-height:10.0px;font-weight:700;transform:scaleX(1.0600) skewX(0.5deg);">14,214.9</span>
<span style="left:607.42px;top:1084.00px;font-size:10.0px;line-height:10.0px;font-weight:700;transform:scaleX(1.0600) skewX(0.5deg);">15,219.7</span>
<span style="left:667.58px;top:1084.00px;font-size:10.0px;line-height:10.0px;font-weight:700;transform:scaleX(1.0600) skewX(0.5deg);">19,747.1</span>
<span style="left:727.75px;top:1084.00px;font-size:10.0px;line-height:10.0px;font-weight:700;transform:scaleX(1.0600) skewX(0.5deg);">21,706.8</span>
<span style="left:787.91px;top:1084.00px;font-size:10.0px;line-height:10.0px;font-weight:700;transform:scaleX(1.0600) skewX(0.5deg);">23,434.6</span>
<span style="left:848.07px;top:1084.00px;font-size:10.0px;line-height:10.0px;font-weight:700;transform:scaleX(1.0600) skewX(0.5deg);">25,228.6</span>
<span style="left:908.24px;top:1084.00px;font-size:10.0px;line-height:10.0px;font-weight:700;transform:scaleX(1.0600) skewX(0.5deg);">27,135.6</span>
<span style="left:968.40px;top:1084.00px;font-size:10.0px;line-height:10.0px;font-weight:700;transform:scaleX(1.0600) skewX(0.5deg);">29,132.2</span>
<span style="left:1028.57px;top:1084.00px;font-size:10.0px;line-height:10.0px;font-weight:700;transform:scaleX(1.0600) skewX(0.5deg);">31,126.4</span>
<span style="left:1088.73px;top:1084.00px;font-size:10.0px;line-height:10.0px;font-weight:700;transform:scaleX(1.0600) skewX(0.5deg);">33,194.4</span>
<span style="left:1148.89px;top:1084.00px;font-size:10.0px;line-height:10.0px;font-weight:700;transform:scaleX(1.0600) skewX(0.5deg);">35,332.9</span>
<span style="left:1209.06px;top:1084.00px;font-size:10.0px;line-height:10.0px;font-weight:700;transform:scaleX(1.0600) skewX(0.5deg);">37,684.6</span>
<span style="left:1269.22px;top:1084.00px;font-size:10.0px;line-height:10.0px;font-weight:700;transform:scaleX(1.0600) skewX(0.5deg);">40,195.0</span>
<span style="left:400.05px;top:1097.00px;font-size:10.0px;line-height:10.0px;font-weight:700;transform:scaleX(0.9322) skewX(0.5deg);">% Variab. COGS</span>
<span style="left:71.10px;top:1113.00px;font-size:10.0px;line-height:10.0px;font-weight:700;transform:scaleX(0.9628) skewX(0.5deg);">Variable COGS (excl. D&amp;A)</span>
<span style="left:347.85px;top:1113.00px;font-size:10.0px;line-height:10.0px;transform:scaleX(1.0804) skewX(0.5deg);">$000&#x27;s</span>
<span style="left:421.76px;top:1113.00px;font-size:10.0px;line-height:10.0px;color:#1414f8;transform:scaleX(0.9900) skewX(0.5deg);">95.0%</span>
<span style="left:547.25px;top:1113.00px;font-size:10.0px;line-height:10.0px;font-weight:700;transform:scaleX(1.0600) skewX(0.5deg);">13,504.1</span>
<span style="left:607.42px;top:1113.00px;font-size:10.0px;line-height:10.0px;font-weight:700;transform:scaleX(1.0600) skewX(0.5deg);">14,458.7</span>
<span style="left:667.58px;top:1113.00px;font-size:10.0px;line-height:10.0px;font-weight:700;transform:scaleX(1.0600) skewX(0.5deg);">18,759.7</span>
<span style="left:727.75px;top:1113.00px;font-size:10.0px;line-height:10.0px;font-weight:700;transform:scaleX(1.0600) skewX(0.5deg);">20,661.2</span>
<span style="left:787.91px;top:1113.00px;font-size:10.0px;line-height:10.0px;font-weight:700;transform:scaleX(1.0600) skewX(0.5deg);">22,347.1</span>
<span style="left:848.07px;top:1113.00px;font-size:10.0px;line-height:10.0px;font-weight:700;transform:scaleX(1.0600) skewX(0.5deg);">24,100.9</span>
<span style="left:908.24px;top:1113.00px;font-size:10.0px;line-height:10.0px;font-weight:700;transform:scaleX(1.0600) skewX(0.5deg);">25,967.3</span>
<span style="left:968.40px;top:1113.00px;font-size:10.0px;line-height:10.0px;font-weight:700;transform:scaleX(1.0600) skewX(0.5deg);">27,924.2</span>
<span style="left:1028.57px;top:1113.00px;font-size:10.0px;line-height:10.0px;font-weight:700;transform:scaleX(1.0600) skewX(0.5deg);">29,883.4</span>
<span style="left:1088.73px;top:1113.00px;font-size:10.0px;line-height:10.0px;font-weight:700;transform:scaleX(1.0600) skewX(0.5deg);">31,917.8</span>
<span style="left:1148.89px;top:1113.00px;font-size:10.0px;line-height:10.0px;font-weight:700;transform:scaleX(1.0600) skewX(0.5deg);">34,024.4</span>
<span style="left:1209.06px;top:1113.00px;font-size:10.0px;line-height:10.0px;font-weight:700;transform:scaleX(1.0600) skewX(0.5deg);">36,340.8</span>
<span style="left:1269.22px;top:1113.00px;font-size:10.0px;line-height:10.0px;font-weight:700;transform:scaleX(1.0600) skewX(0.5deg);">38,814.9</span>
<span style="left:71.10px;top:1128.00px;font-size:10.0px;line-height:10.0px;font-style:italic;transform:scaleX(0.9789) skewX(0.5deg);">Average COGS per vehicle</span>
<span style="left:360.85px;top:1128.00px;font-size:10.0px;line-height:10.0px;font-style:italic;transform:scaleX(0.9900) skewX(0.5deg);">$</span>
<span style="left:404.05px;top:1127.00px;font-size:10.0px;line-height:10.0px;font-weight:700;transform:scaleX(0.9069) skewX(0.5deg);">% Fixed COGS</span>
<span style="left:547.25px;top:1128.00px;font-size:10.0px;line-height:10.0px;font-style:italic;transform:scaleX(1.0600) skewX(0.5deg);">21,001.7</span>
<span style="left:607.42px;top:1128.00px;font-size:10.0px;line-height:10.0px;font-style:italic;transform:scaleX(1.0600) skewX(0.5deg);">21,580.1</span>
<span style="left:667.58px;top:1128.00px;font-size:10.0px;line-height:10.0px;font-style:italic;transform:scaleX(1.0600) skewX(0.5deg);">21,562.9</span>
<span style="left:727.75px;top:1128.00px;font-size:10.0px;line-height:10.0px;font-style:italic;transform:scaleX(1.0600) skewX(0.5deg);">22,835.1</span>
<span style="left:787.91px;top:1128.00px;font-size:10.0px;line-height:10.0px;font-style:italic;transform:scaleX(1.0600) skewX(0.5deg);">23,748.5</span>
<span style="left:848.07px;top:1128.00px;font-size:10.0px;line-height:10.0px;font-style:italic;transform:scaleX(1.0600) skewX(0.5deg);">24,627.2</span>
<span style="left:908.24px;top:1128.00px;font-size:10.0px;line-height:10.0px;font-style:italic;transform:scaleX(1.0600) skewX(0.5deg);">25,513.8</span>
<span style="left:968.40px;top:1128.00px;font-size:10.0px;line-height:10.0px;font-style:italic;transform:scaleX(1.0600) skewX(0.5deg);">26,381.2</span>
<span style="left:1028.57px;top:1128.00px;font-size:10.0px;line-height:10.0px;font-style:italic;transform:scaleX(1.0600) skewX(0.5deg);">27,146.3</span>
<span style="left:1088.73px;top:1128.00px;font-size:10.0px;line-height:10.0px;font-style:italic;transform:scaleX(1.0600) skewX(0.5deg);">27,879.2</span>
<span style="left:1148.89px;top:1128.00px;font-size:10.0px;line-height:10.0px;font-style:italic;transform:scaleX(1.0600) skewX(0.5deg);">28,576.2</span>
<span style="left:1209.06px;top:1128.00px;font-size:10.0px;line-height:10.0px;font-style:italic;transform:scaleX(1.0600) skewX(0.5deg);">29,347.8</span>
<span style="left:1269.22px;top:1128.00px;font-size:10.0px;line-height:10.0px;font-style:italic;transform:scaleX(1.0600) skewX(0.5deg);">30,140.2</span>
<span style="left:71.10px;top:1143.00px;font-size:10.0px;line-height:10.0px;font-weight:700;transform:scaleX(0.9505) skewX(0.5deg);">Fixed COGS (excl. D&amp;A)</span>
<span style="left:347.85px;top:1143.00px;font-size:10.0px;line-height:10.0px;transform:scaleX(1.0804) skewX(0.5deg);">$000&#x27;s</span>
<span style="left:424.52px;top:1143.00px;font-size:10.0px;line-height:10.0px;transform:scaleX(0.9900) skewX(0.5deg);">5.0%</span>
<span style="left:561.99px;top:1143.00px;font-size:10.0px;line-height:10.0px;font-weight:700;transform:scaleX(1.0600) skewX(0.5deg);">710.7</span>
<span style="left:622.16px;top:1143.00px;font-size:10.0px;line-height:10.0px;font-weight:700;transform:scaleX(1.0600) skewX(0.5deg);">761.0</span>
<span style="left:682.32px;top:1143.00px;font-size:10.0px;line-height:10.0px;font-weight:700;transform:scaleX(1.0600) skewX(0.5deg);">987.4</span>
<span style="left:733.64px;top:1143.00px;font-size:10.0px;line-height:10.0px;font-weight:700;transform:scaleX(1.0600) skewX(0.5deg);">1,045.6</span>
<span style="left:793.81px;top:1143.00px;font-size:10.0px;line-height:10.0px;font-weight:700;transform:scaleX(1.0600) skewX(0.5deg);">1,087.4</span>
<span style="left:853.97px;top:1143.00px;font-size:10.0px;line-height:10.0px;font-weight:700;transform:scaleX(1.0600) skewX(0.5deg);">1,127.7</span>
<span style="left:914.13px;top:1143.00px;font-size:10.0px;line-height:10.0px;font-weight:700;transform:scaleX(1.0600) skewX(0.5deg);">1,168.3</span>
<span style="left:974.30px;top:1143.00px;font-size:10.0px;line-height:10.0px;font-weight:700;transform:scaleX(1.0600) skewX(0.5deg);">1,208.0</span>
<span style="left:1034.46px;top:1143.00px;font-size:10.0px;line-height:10.0px;font-weight:700;transform:scaleX(1.0600) skewX(0.5deg);">1,243.0</span>
<span style="left:1094.63px;top:1143.00px;font-size:10.0px;line-height:10.0px;font-weight:700;transform:scaleX(1.0600) skewX(0.5deg);">1,276.6</span>
<span style="left:1154.79px;top:1143.00px;font-size:10.0px;line-height:10.0px;font-weight:700;transform:scaleX(1.0600) skewX(0.5deg);">1,308.5</span>
<span style="left:1214.95px;top:1143.00px;font-size:10.0px;line-height:10.0px;font-weight:700;transform:scaleX(1.0600) skewX(0.5deg);">1,343.8</span>
<span style="left:1275.12px;top:1143.00px;font-size:10.0px;line-height:10.0px;font-weight:700;transform:scaleX(1.0600) skewX(0.5deg);">1,380.1</span>
<span style="left:71.10px;top:1158.00px;font-size:10.0px;line-height:10.0px;font-style:italic;transform:scaleX(1.0300) skewX(0.5deg);">Growth</span>
<span style="left:349.35px;top:1158.00px;font-size:10.0px;line-height:10.0px;font-style:italic;transform:scaleX(0.9733) skewX(0.5deg);">Var. %</span>
<span style="left:682.48px;top:1158.00px;font-size:10.0px;line-height:10.0px;font-style:italic;transform:scaleX(0.9900) skewX(0.5deg);">29.7%</span>
<span style="left:748.15px;top:1158.00px;font-size:10.0px;line-height:10.0px;font-style:italic;transform:scaleX(0.9900) skewX(0.5deg);">5.9%</span>
<span style="left:808.32px;top:1158.00px;font-size:10.0px;line-height:10.0px;font-style:italic;transform:scaleX(0.9900) skewX(0.5deg);">4.0%</span>
<span style="left:868.48px;top:1158.00px;font-size:10.0px;line-height:10.0px;font-style:italic;transform:scaleX(0.9900) skewX(0.5deg);">3.7%</span>
<span style="left:928.64px;top:1158.00px;font-size:10.0px;line-height:10.0px;font-style:italic;transform:scaleX(0.9900) skewX(0.5deg);">3.6%</span>
<span style="left:988.81px;top:1158.00px;font-size:10.0px;line-height:10.0px;font-style:italic;transform:scaleX(0.9900) skewX(0.5deg);">3.4%</span>
<span style="left:1048.97px;top:1158.00px;font-size:10.0px;line-height:10.0px;font-style:italic;transform:scaleX(0.9900) skewX(0.5deg);">2.9%</span>
<span style="left:1109.14px;top:1158.00px;font-size:10.0px;line-height:10.0px;font-style:italic;transform:scaleX(0.9900) skewX(0.5deg);">2.7%</span>
<span style="left:1169.30px;top:1158.00px;font-size:10.0px;line-height:10.0px;font-style:italic;transform:scaleX(0.9900) skewX(0.5deg);">2.5%</span>
<span style="left:1229.46px;top:1158.00px;font-size:10.0px;line-height:10.0px;font-style:italic;transform:scaleX(0.9900) skewX(0.5deg);">2.7%</span>
<span style="left:1289.63px;top:1158.00px;font-size:10.0px;line-height:10.0px;font-style:italic;transform:scaleX(0.9900) skewX(0.5deg);">2.7%</span>
<span style="left:71.10px;top:1187.00px;font-size:10.0px;line-height:10.0px;transform:scaleX(1.0204) skewX(0.5deg);">SG&amp;A (incl. D&amp;A)</span>
<span style="left:347.85px;top:1187.00px;font-size:10.0px;line-height:10.0px;transform:scaleX(1.0804) skewX(0.5deg);">$000&#x27;s</span>
<span style="left:404.05px;top:1186.00px;font-size:10.0px;line-height:10.0px;font-weight:700;transform:scaleX(0.9368) skewX(0.5deg);">% of LoB D&amp;A</span>
<span style="left:561.99px;top:1187.00px;font-size:10.0px;line-height:10.0px;color:#1414f8;transform:scaleX(1.0600) skewX(0.5deg);">877.0</span>
<span style="left:613.31px;top:1187.00px;font-size:10.0px;line-height:10.0px;color:#1414f8;transform:scaleX(1.0600) skewX(0.5deg);">1,009.0</span>
<span style="left:682.32px;top:1187.00px;font-size:10.0px;line-height:10.0px;color:#1414f8;transform:scaleX(1.0600) skewX(0.5deg);">939.0</span>
<span style="left:742.49px;top:1187.00px;font-size:10.0px;line-height:10.0px;transform:scaleX(1.0600) skewX(0.5deg);">954.3</span>
<span style="left:793.81px;top:1187.00px;font-size:10.0px;line-height:10.0px;transform:scaleX(1.0600) skewX(0.5deg);">1,070.5</span>
<span style="left:853.97px;top:1187.00px;font-size:10.0px;line-height:10.0px;transform:scaleX(1.0600) skewX(0.5deg);">1,192.3</span>
<span style="left:914.13px;top:1187.00px;font-size:10.0px;line-height:10.0px;transform:scaleX(1.0600) skewX(0.5deg);">1,320.6</span>
<span style="left:974.30px;top:1187.00px;font-size:10.0px;line-height:10.0px;transform:scaleX(1.0600) skewX(0.5deg);">1,455.3</span>
<span style="left:1034.46px;top:1187.00px;font-size:10.0px;line-height:10.0px;transform:scaleX(1.0600) skewX(0.5deg);">1,595.5</span>
<span style="left:1094.63px;top:1187.00px;font-size:10.0px;line-height:10.0px;transform:scaleX(1.0600) skewX(0.5deg);">1,742.8</span>
<span style="left:1154.79px;top:1187.00px;font-size:10.0px;line-height:10.0px;transform:scaleX(1.0600) skewX(0.5deg);">1,897.8</span>
<span style="left:1214.95px;top:1187.00px;font-size:10.0px;line-height:10.0px;transform:scaleX(1.0600) skewX(0.5deg);">1,974.5</span>
<span style="left:1275.12px;top:1187.00px;font-size:10.0px;line-height:10.0px;transform:scaleX(1.0600) skewX(0.5deg);">2,142.0</span>
<span style="left:6.73px;top:238.00px;font-size:9.6px;line-height:9.6px;color:#505050;transform:scaleX(1.0000) skewX(0.5deg);">1</span>
<span style="left:20.03px;top:238.00px;font-size:9.6px;line-height:9.6px;color:#505050;transform:scaleX(1.0000) skewX(0.5deg);">2</span>
<span style="left:132.60px;top:1211.00px;font-size:15.6px;line-height:15.6px;color:#1a1a1a;transform:scaleX(0.9229) skewX(0.5deg);">Cover</span>
<span style="left:198.80px;top:1208.00px;font-size:15.6px;line-height:15.6px;color:#2b2b2b;-webkit-text-stroke:0.5px #2b2b2b;transform:scaleX(1.0199) skewX(0.5deg);">Build-Up</span>
<span style="left:286.50px;top:1211.00px;font-size:15.6px;line-height:15.6px;color:#444;transform:scaleX(0.8125) skewX(0.5deg);">FS</span>
<span style="left:330.00px;top:1211.00px;font-size:15.6px;line-height:15.6px;color:#444;transform:scaleX(0.8733) skewX(0.5deg);">DCF</span>
<span style="left:384.50px;top:1211.00px;font-size:15.6px;line-height:15.6px;color:#444;transform:scaleX(0.9240) skewX(0.5deg);">WACC</span>
<span style="left:13.00px;top:1244.00px;font-size:12px;line-height:12px;color:#444;transform:scaleX(1.0000) skewX(0.5deg);">Ready</span>
<span style="left:84.70px;top:1244.00px;font-size:12px;line-height:12px;font-weight:700;color:#333;transform:scaleX(0.9066) skewX(0.5deg);">Accessibility: Investigate</span>
</div></body></html>
